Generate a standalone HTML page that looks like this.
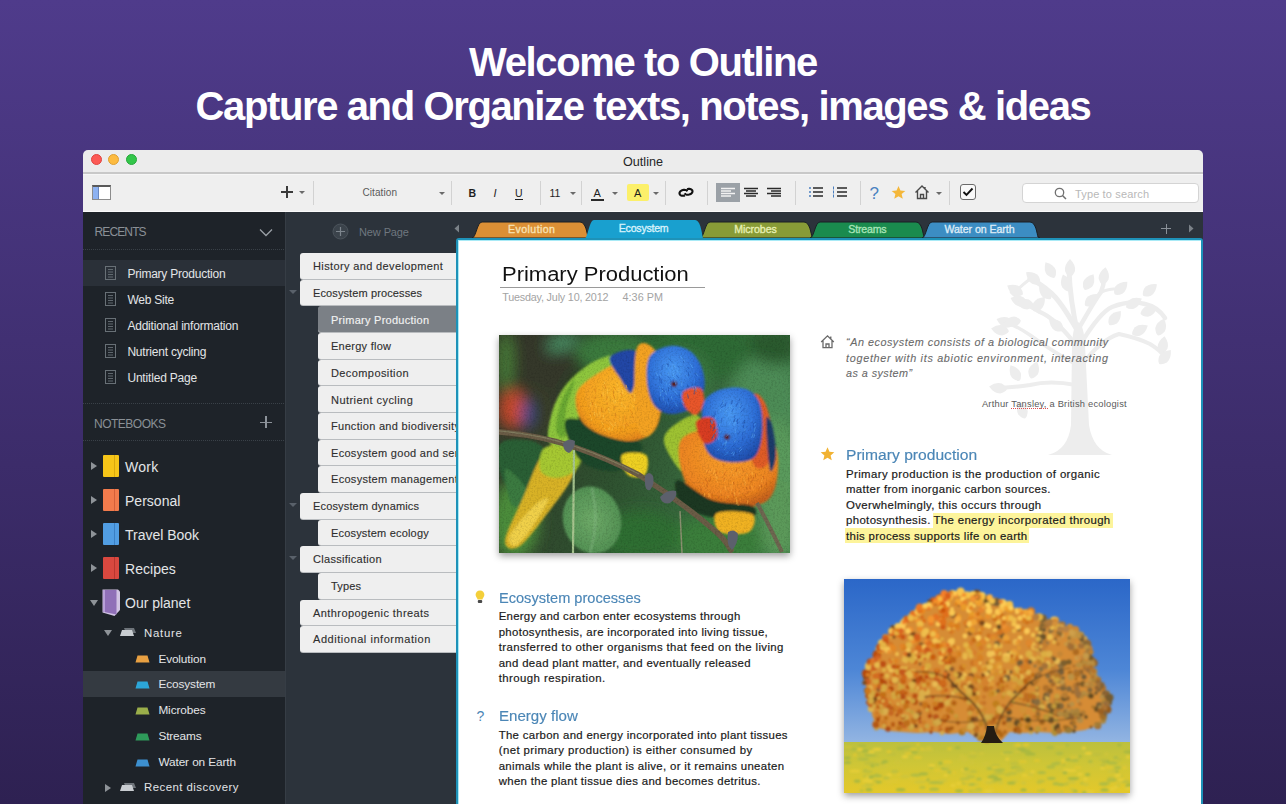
<!DOCTYPE html>
<html><head><meta charset="utf-8">
<style>
*{margin:0;padding:0;box-sizing:border-box}
html,body{width:1286px;height:804px;overflow:hidden}
body{background:linear-gradient(180deg,#4f3b8b 0%,#2e2152 100%);font-family:"Liberation Sans",sans-serif;position:relative}
.a{position:absolute;white-space:nowrap}
.h1{color:#fff;font-weight:bold;font-size:40px;left:0;width:1286px;text-align:center;letter-spacing:-1.38px;line-height:44px}
.tl{position:absolute;width:11px;height:11px;border-radius:50%}
.sep{position:absolute;top:181px;width:1px;height:24px;background:#d2d2d2}
.dd{position:absolute;width:0;height:0;border-left:3px solid transparent;border-right:3px solid transparent;border-top:3px solid #6a6a6a}
.dots{height:1px;background:repeating-linear-gradient(90deg,#3a4148 0 1px,transparent 1px 2px)}
.tri{width:0;height:0;border-top:4px solid transparent;border-bottom:4px solid transparent;border-left:6px solid #8e9398}
.tridn{width:0;height:0;border-left:4px solid transparent;border-right:4px solid transparent;border-top:6px solid #8e9398}
.card{position:absolute;height:25.6px;background:#efefef;border-radius:3px 0 0 3px;box-shadow:0 1px 0 #b9bcbf}
</style></head><body>

<div class="a h1" style="top:40px">Welcome to Outline</div>
<div class="a h1" style="top:84px">Capture and Organize texts, notes, images &amp; ideas</div>
<div class="a" style="left:83px;top:150px;width:1120px;height:62px;border-radius:5px 5px 0 0;overflow:hidden">
  <div class="a" style="left:0;top:0;width:1120px;height:23px;background:#ececec"></div>
  <div class="a" style="left:0;top:22px;width:1120px;height:1.6px;background:#c8c8c8"></div>
  <div class="a" style="left:0;top:23.6px;width:1120px;height:38.4px;background:#efefef"></div>
  <div class="a" style="left:0;top:23.6px;width:1120px;height:1px;background:#f6f6f6"></div>
  <div class="a" style="left:0;top:61px;width:1120px;height:1px;background:#fafafa"></div>
</div>
<div class="tl" style="left:90.5px;top:154px;background:#fc5a55;border:0.5px solid #e0443f"></div>
<div class="tl" style="left:108px;top:154px;background:#fdbb3f;border:0.5px solid #dea033"></div>
<div class="tl" style="left:126px;top:154px;background:#33c64a;border:0.5px solid #25a83a"></div>
<div id="t0" class="a" style="left:243px;width:800px;text-align:center;top:154.60px;font-size:12.6px;line-height:14px;color:#262626;">Outline</div>

<!-- toolbar -->
<div class="a" style="left:92px;top:185px;width:19px;height:15px;border:1px solid #8c8c8c;border-top:2px solid #5a5a5a;background:#fff"></div>
<div class="a" style="left:93px;top:187px;width:6px;height:12px;background:#8db2f2;border-right:1px solid #6a88c0"></div>
<div class="a" style="left:281px;top:191px;width:12px;height:2px;background:#3a3a3a"></div>
<div class="a" style="left:286px;top:186px;width:2px;height:12px;background:#3a3a3a"></div>
<div class="dd" style="left:299px;top:191px"></div>
<div class="sep" style="left:313px"></div>
<div id="t1" class="a" style="left:362.5px;top:187.10px;font-size:10px;line-height:11px;letter-spacing:0.084px;color:#5a5a5a;">Citation</div>
<div class="dd" style="left:439px;top:192px"></div>
<div class="sep" style="left:451px"></div>
<div id="t2" class="a" style="left:468.5px;top:186.50px;font-size:10.5px;line-height:12px;color:#1e1e1e;font-weight:bold;">B</div>
<div id="t3" class="a" style="left:493.5px;top:186.50px;font-size:11px;line-height:12px;color:#1e1e1e;font-style:italic;">I</div>
<div id="t4" class="a" style="left:515px;top:186.50px;font-size:10.5px;line-height:12px;color:#1e1e1e;">U</div>
<div class="a" style="left:514.5px;top:199px;width:8px;height:1px;background:#1e1e1e"></div>
<div class="sep" style="left:540px"></div>
<div id="t5" class="a" style="left:549.5px;top:186.50px;font-size:10.5px;line-height:12px;color:#1e1e1e;">11</div>
<div class="dd" style="left:570px;top:192px"></div>
<div class="sep" style="left:581px"></div>
<div id="t6" class="a" style="left:593.5px;top:186.50px;font-size:11px;line-height:12px;color:#1e1e1e;">A</div>
<div class="a" style="left:591px;top:199px;width:13px;height:2px;background:#2a2a2a"></div>
<div class="dd" style="left:612px;top:192px"></div>
<div class="a" style="left:627px;top:184px;width:22px;height:17px;background:#fcf06a;border-radius:2px"></div>
<div id="t7" class="a" style="left:634px;top:186.50px;font-size:11px;line-height:12px;color:#1e1e1e;">A</div>
<div class="dd" style="left:653px;top:192px"></div>
<div class="sep" style="left:665px"></div>
<svg class="a" style="left:0;top:0" width="1286" height="804"><g fill="none" stroke="#111" stroke-width="2.1" transform="rotate(-12 686 192.3)"><path d="M687.66 191.55 L687.37 191.03 L686.95 190.55 L686.40 190.14 L685.75 189.81 L685.02 189.57 L684.24 189.43 L683.43 189.40 L682.63 189.48 L681.87 189.66 L681.17 189.94 L680.56 190.30 L680.06 190.74 L679.69 191.24 L679.47 191.78 L679.40 192.33 L679.49 192.89 L679.73 193.42 L680.11 193.91 L680.62 194.34 L681.24 194.70 L681.95 194.97 L682.72 195.14 L683.52 195.20 L684.33 195.16"/><path d="M684.34 193.05 L684.63 193.57 L685.05 194.05 L685.60 194.46 L686.25 194.79 L686.98 195.03 L687.76 195.17 L688.57 195.20 L689.37 195.12 L690.13 194.94 L690.83 194.66 L691.44 194.30 L691.94 193.86 L692.31 193.36 L692.53 192.82 L692.60 192.27 L692.51 191.71 L692.27 191.18 L691.89 190.69 L691.38 190.26 L690.76 189.90 L690.05 189.63 L689.28 189.46 L688.48 189.40 L687.67 189.44"/></g></svg>
<div class="sep" style="left:707px"></div>
<div class="a" style="left:716px;top:183px;width:24px;height:19px;background:#9ba1a7"></div>
<svg class="a" style="left:720px;top:187px" width="16" height="11" viewBox="0 0 16 11"><path d="M1 1.5h14M1 4h10M1 6.5h14M1 9h10" stroke="#f2f2f2" stroke-width="1.3"/></svg>
<svg class="a" style="left:743px;top:187px" width="16" height="11" viewBox="0 0 16 11"><path d="M1 1.5h14M3 4h10M1 6.5h14M3 9h10" stroke="#2a2a2a" stroke-width="1.3"/></svg>
<svg class="a" style="left:766px;top:187px" width="16" height="11" viewBox="0 0 16 11"><path d="M1 1.5h14M5 4h10M1 6.5h14M5 9h10" stroke="#2a2a2a" stroke-width="1.3"/></svg>
<div class="sep" style="left:795px"></div>
<svg class="a" style="left:808px;top:186px" width="16" height="12" viewBox="0 0 16 12"><path d="M5 2h10M5 6h10M5 10h10" stroke="#2a2a2a" stroke-width="1.4"/><path d="M1 2h2M1 6h2M1 10h2" stroke="#4a7fc0" stroke-width="1.6"/></svg>
<svg class="a" style="left:832px;top:186px" width="16" height="12" viewBox="0 0 16 12"><path d="M5 2h10M5 6h10M5 10h10" stroke="#2a2a2a" stroke-width="1.4"/><path d="M1.5 0.5v3M1.5 4.5v3M1.5 8.5v3" stroke="#4a7fc0" stroke-width="1"/></svg>
<div class="sep" style="left:860px"></div>
<div id="t8" class="a" style="left:869.5px;top:184.00px;font-size:17px;line-height:19px;color:#4a82c0;">?</div>
<svg class="a" style="left:891px;top:185px" width="15" height="15" viewBox="0 0 24 24"><path d="M12 1.5l3.1 7.2 7.8.7-5.9 5.1 1.8 7.6L12 18.1l-6.8 4 1.8-7.6L1.1 9.4l7.8-.7z" fill="#f4b73a"/></svg>
<svg class="a" style="left:914px;top:184px" width="16" height="16" viewBox="0 0 16 16"><path d="M1.5 8.5L8 2l6.5 6.5M3.5 7v7.5h9V7M6.5 14.5v-4h3v4M11 3v2.5" fill="none" stroke="#4a4a4a" stroke-width="1.4"/></svg>
<div class="dd" style="left:936px;top:192px"></div>
<div class="sep" style="left:949px"></div>
<div class="a" style="left:960px;top:184px;width:16px;height:16px;border:1px solid #6a6a6a;border-radius:3px;background:#f9f9f9"></div>
<svg class="a" style="left:962px;top:187px" width="12" height="10" viewBox="0 0 12 10"><path d="M1.5 5l3 3 6-6.5" fill="none" stroke="#111" stroke-width="1.9"/></svg>
<div class="a" style="left:1022px;top:182.5px;width:177px;height:20px;border:1px solid #d4d4d4;border-radius:4px;background:#fff"></div>
<svg class="a" style="left:1054px;top:187px" width="13" height="13" viewBox="0 0 13 13"><circle cx="5.5" cy="5.5" r="4.2" fill="none" stroke="#707070" stroke-width="1.3"/><path d="M8.5 8.5l3.5 3.5" stroke="#707070" stroke-width="1.5"/></svg>
<div id="t9" class="a" style="left:1075px;top:187.80px;font-size:11px;line-height:12px;letter-spacing:0.142px;color:#b8b8b8;">Type to search</div>

<!-- dark areas -->
<div class="a" style="left:83px;top:212px;width:202px;height:592px;background:#1e2329"></div>
<div class="a" style="left:285px;top:212px;width:918px;height:592px;background:#2c333b"></div>
<div class="a" style="left:285px;top:212px;width:1px;height:592px;background:#363d45"></div>

<!-- sidebar -->
<div id="t10" class="a" style="left:94.5px;top:225.00px;font-size:12px;line-height:14px;letter-spacing:-0.875px;color:#8a9096;">RECENTS</div>
<svg class="a" style="left:259px;top:227.5px" width="14" height="9" viewBox="0 0 14 9"><path d="M1 1.5 L7 7.5 L13 1.5" fill="none" stroke="#9aa0a6" stroke-width="1.3"/></svg>
<div class="a dots" style="left:83px;top:249px;width:202px"></div>
<div class="a" style="left:83px;top:260px;width:202px;height:26px;background:#2a3038"></div>
<div id="t11" class="a" style="left:127.4px;top:266.60px;font-size:12px;line-height:14px;letter-spacing:-0.226px;color:#e3e5e7;">Primary Production</div>
<div id="t12" class="a" style="left:127.4px;top:292.60px;font-size:12px;line-height:14px;letter-spacing:-0.241px;color:#e3e5e7;">Web Site</div>
<div id="t13" class="a" style="left:127.4px;top:318.60px;font-size:12px;line-height:14px;letter-spacing:-0.209px;color:#e3e5e7;">Additional information</div>
<div id="t14" class="a" style="left:127.4px;top:344.60px;font-size:12px;line-height:14px;letter-spacing:-0.203px;color:#e3e5e7;">Nutrient cycling</div>
<div id="t15" class="a" style="left:127.4px;top:370.60px;font-size:12px;line-height:14px;letter-spacing:-0.180px;color:#e3e5e7;">Untitled Page</div>
<svg class="a" style="left:105px;top:266px" width="11" height="14" viewBox="0 0 11 14"><rect x="0.5" y="0.5" width="10" height="13" fill="none" stroke="#687076"/><path d="M3 3.5h5M3 6h5M3 8.5h5M3 11h5" stroke="#687076" stroke-width="0.9"/></svg>
<svg class="a" style="left:105px;top:292px" width="11" height="14" viewBox="0 0 11 14"><rect x="0.5" y="0.5" width="10" height="13" fill="none" stroke="#687076"/><path d="M3 3.5h5M3 6h5M3 8.5h5M3 11h5" stroke="#687076" stroke-width="0.9"/></svg>
<svg class="a" style="left:105px;top:318px" width="11" height="14" viewBox="0 0 11 14"><rect x="0.5" y="0.5" width="10" height="13" fill="none" stroke="#687076"/><path d="M3 3.5h5M3 6h5M3 8.5h5M3 11h5" stroke="#687076" stroke-width="0.9"/></svg>
<svg class="a" style="left:105px;top:344px" width="11" height="14" viewBox="0 0 11 14"><rect x="0.5" y="0.5" width="10" height="13" fill="none" stroke="#687076"/><path d="M3 3.5h5M3 6h5M3 8.5h5M3 11h5" stroke="#687076" stroke-width="0.9"/></svg>
<svg class="a" style="left:105px;top:370px" width="11" height="14" viewBox="0 0 11 14"><rect x="0.5" y="0.5" width="10" height="13" fill="none" stroke="#687076"/><path d="M3 3.5h5M3 6h5M3 8.5h5M3 11h5" stroke="#687076" stroke-width="0.9"/></svg>

<div class="a dots" style="left:83px;top:403px;width:202px"></div>
<div id="t16" class="a" style="left:94px;top:416.60px;font-size:12px;line-height:14px;letter-spacing:-0.502px;color:#8a9096;">NOTEBOOKS</div>
<div class="a" style="left:260px;top:421.5px;width:12px;height:1.2px;background:#8d939a"></div>
<div class="a" style="left:265.4px;top:416px;width:1.2px;height:12px;background:#8d939a"></div>
<div class="a dots" style="left:83px;top:439.5px;width:202px"></div>
<div class="a tri" style="left:91px;top:462px"></div>
<div class="a" style="left:103px;top:455px;width:16px;height:22px;background:#f6c518;border-radius:1px"></div><div class="a" style="left:114px;top:455px;width:1px;height:22px;background:#d9a80e"></div>
<div id="t17" class="a" style="left:125px;top:458.90px;font-size:14px;line-height:16px;letter-spacing:0.292px;color:#e3e5e7;">Work</div>
<div class="a tri" style="left:91px;top:496px"></div>
<div class="a" style="left:103px;top:489px;width:16px;height:22px;background:#f27b4c;border-radius:1px"></div><div class="a" style="left:114px;top:489px;width:1px;height:22px;background:#d4603a"></div>
<div id="t18" class="a" style="left:125px;top:492.90px;font-size:14px;line-height:16px;letter-spacing:0.019px;color:#e3e5e7;">Personal</div>
<div class="a tri" style="left:91px;top:530px"></div>
<div class="a" style="left:103px;top:523px;width:16px;height:22px;background:#519de2;border-radius:1px"></div><div class="a" style="left:114px;top:523px;width:1px;height:22px;background:#3a7fc4"></div>
<div id="t19" class="a" style="left:125px;top:526.90px;font-size:14px;line-height:16px;letter-spacing:-0.017px;color:#e3e5e7;">Travel Book</div>
<div class="a tri" style="left:91px;top:564px"></div>
<div class="a" style="left:103px;top:557px;width:16px;height:22px;background:#d9483f;border-radius:1px"></div><div class="a" style="left:114px;top:557px;width:1px;height:22px;background:#b8362f"></div>
<div id="t20" class="a" style="left:125px;top:560.90px;font-size:14px;line-height:16px;letter-spacing:0.035px;color:#e3e5e7;">Recipes</div>
<div class="a tridn" style="left:90px;top:600px"></div>
<svg class="a" style="left:0;top:0" width="200" height="804"><path d="M102.5 589.5 L118 589.5 L120 591.5 L120 610 L114.5 616 L102.5 612.5Z" fill="#d2c4e4"/><path d="M103 590 L116.5 590 L116.5 614.5 L103 611.8Z" fill="#9070b8"/><path d="M103 590 L105 590 L105 612 L103 611.8Z" fill="#b8a0d8"/></svg>
<div id="t21" class="a" style="left:125px;top:594.90px;font-size:14px;line-height:16px;letter-spacing:-0.009px;color:#e3e5e7;">Our planet</div>
<div class="a tridn" style="left:104px;top:630px"></div>
<svg class="a" style="left:120px;top:627px" width="16" height="10" viewBox="0 0 16 10"><path d="M4 1 L14 1 L16 6 L6 6Z" fill="#6e747a"/><path d="M2 3 L12 3 L14 9 L0 9Z" fill="#c9cdd1"/></svg>
<div id="t22" class="a" style="left:144.1px;top:627.00px;font-size:11.4px;line-height:12px;letter-spacing:0.701px;color:#e3e5e7;">Nature</div>
<div class="a" style="left:83px;top:671px;width:202px;height:26.4px;background:#343a41"></div>
<svg class="a" style="left:134.5px;top:655.4px" width="15" height="8" viewBox="0 0 15 8"><path d="M2.5 0.5 L12.5 0.5 L14.5 7.5 L0.5 7.5Z" fill="#e8a042"/></svg>
<div id="t23" class="a" style="left:158.4px;top:651.90px;font-size:11.8px;line-height:14px;letter-spacing:-0.118px;color:#e3e5e7;">Evolution</div>
<svg class="a" style="left:134.5px;top:680.9px" width="15" height="8" viewBox="0 0 15 8"><path d="M2.5 0.5 L12.5 0.5 L14.5 7.5 L0.5 7.5Z" fill="#2ca6d8"/></svg>
<div id="t24" class="a" style="left:158.4px;top:677.40px;font-size:11.8px;line-height:14px;letter-spacing:-0.087px;color:#e3e5e7;">Ecosystem</div>
<svg class="a" style="left:134.5px;top:706.9px" width="15" height="8" viewBox="0 0 15 8"><path d="M2.5 0.5 L12.5 0.5 L14.5 7.5 L0.5 7.5Z" fill="#9aae4a"/></svg>
<div id="t25" class="a" style="left:158.4px;top:703.40px;font-size:11.8px;line-height:14px;letter-spacing:-0.095px;color:#e3e5e7;">Microbes</div>
<svg class="a" style="left:134.5px;top:732.6px" width="15" height="8" viewBox="0 0 15 8"><path d="M2.5 0.5 L12.5 0.5 L14.5 7.5 L0.5 7.5Z" fill="#2e9a5a"/></svg>
<div id="t26" class="a" style="left:158.4px;top:729.10px;font-size:11.8px;line-height:14px;letter-spacing:-0.123px;color:#e3e5e7;">Streams</div>
<svg class="a" style="left:134.5px;top:758.5px" width="15" height="8" viewBox="0 0 15 8"><path d="M2.5 0.5 L12.5 0.5 L14.5 7.5 L0.5 7.5Z" fill="#3d90cf"/></svg>
<div id="t27" class="a" style="left:158.4px;top:755.00px;font-size:11.8px;line-height:14px;letter-spacing:-0.093px;color:#e3e5e7;">Water on Earth</div>
<div class="a tri" style="left:105px;top:783.5px"></div>
<svg class="a" style="left:120px;top:782px" width="16" height="10" viewBox="0 0 16 10"><path d="M4 1 L14 1 L16 6 L6 6Z" fill="#6e747a"/><path d="M2 3 L12 3 L14 9 L0 9Z" fill="#c9cdd1"/></svg>
<div id="t28" class="a" style="left:144.1px;top:781.10px;font-size:11.4px;line-height:12px;letter-spacing:0.461px;color:#e3e5e7;">Recent discovery</div>


<!-- middle panel -->
<svg class="a" style="left:332px;top:223px" width="17" height="17" viewBox="0 0 17 17"><circle cx="8.5" cy="8.5" r="7.5" fill="#3b434b" stroke="#4c545c" stroke-width="1"/><path d="M8.5 4v9M4 8.5h9" stroke="#7d858d" stroke-width="1.2"/></svg>
<div id="t29" class="a" style="left:359px;top:226.00px;font-size:11px;line-height:12px;letter-spacing:-0.109px;color:#6f777f;">New Page</div>
<div class="card" style="left:300px;top:253.10px;width:160px;background:#efefef"></div>
<div id="t30" class="a" style="left:313px;top:260.20px;font-size:11px;line-height:12px;letter-spacing:0.369px;color:#2e2e2e;-webkit-text-stroke:0.12px #2e2e2e;">History and development</div>
<div class="card" style="left:300px;top:279.76px;width:160px;background:#efefef"></div>
<div class="a" style="left:289px;top:289.76px;width:0;height:0;border-left:4px solid transparent;border-right:4px solid transparent;border-top:4px solid #59616a"></div>
<div id="t31" class="a" style="left:313px;top:286.86px;font-size:11px;line-height:12px;letter-spacing:0.111px;color:#2e2e2e;-webkit-text-stroke:0.12px #2e2e2e;">Ecosystem processes</div>
<div class="card" style="left:318.3px;top:306.42px;width:141.7px;background:#7b8086"></div>
<div id="t32" class="a" style="left:331px;top:313.52px;font-size:11px;line-height:12px;letter-spacing:0.263px;color:#f2f2f2;-webkit-text-stroke:0.15px #f2f2f2;">Primary Production</div>
<div class="card" style="left:318.3px;top:333.08px;width:141.7px;background:#efefef"></div>
<div id="t33" class="a" style="left:331px;top:340.18px;font-size:11px;line-height:12px;letter-spacing:0.252px;color:#2e2e2e;-webkit-text-stroke:0.12px #2e2e2e;">Energy flow</div>
<div class="card" style="left:318.3px;top:359.74px;width:141.7px;background:#efefef"></div>
<div id="t34" class="a" style="left:331px;top:366.84px;font-size:11px;line-height:12px;letter-spacing:0.403px;color:#2e2e2e;-webkit-text-stroke:0.12px #2e2e2e;">Decomposition</div>
<div class="card" style="left:318.3px;top:386.40px;width:141.7px;background:#efefef"></div>
<div id="t35" class="a" style="left:331px;top:393.50px;font-size:11px;line-height:12px;letter-spacing:0.439px;color:#2e2e2e;-webkit-text-stroke:0.12px #2e2e2e;">Nutrient cycling</div>
<div class="card" style="left:318.3px;top:413.06px;width:141.7px;background:#efefef"></div>
<div id="t36" class="a" style="left:331px;top:420.16px;font-size:11px;line-height:12px;letter-spacing:0.300px;color:#2e2e2e;-webkit-text-stroke:0.12px #2e2e2e;">Function and biodiversity</div>
<div class="card" style="left:318.3px;top:439.72px;width:141.7px;background:#efefef"></div>
<div id="t37" class="a" style="left:331px;top:446.82px;font-size:11px;line-height:12px;letter-spacing:0.300px;color:#2e2e2e;-webkit-text-stroke:0.12px #2e2e2e;">Ecosystem good and services</div>
<div class="card" style="left:318.3px;top:466.38px;width:141.7px;background:#efefef"></div>
<div id="t38" class="a" style="left:331px;top:473.48px;font-size:11px;line-height:12px;letter-spacing:0.300px;color:#2e2e2e;-webkit-text-stroke:0.12px #2e2e2e;">Ecosystem management</div>
<div class="card" style="left:300px;top:493.04px;width:160px;background:#efefef"></div>
<div class="a" style="left:289px;top:503.04px;width:0;height:0;border-left:4px solid transparent;border-right:4px solid transparent;border-top:4px solid #59616a"></div>
<div id="t39" class="a" style="left:313px;top:500.14px;font-size:11px;line-height:12px;letter-spacing:0.158px;color:#2e2e2e;-webkit-text-stroke:0.12px #2e2e2e;">Ecosystem dynamics</div>
<div class="card" style="left:318.3px;top:519.70px;width:141.7px;background:#efefef"></div>
<div id="t40" class="a" style="left:331px;top:526.80px;font-size:11px;line-height:12px;letter-spacing:0.184px;color:#2e2e2e;-webkit-text-stroke:0.12px #2e2e2e;">Ecosystem ecology</div>
<div class="card" style="left:300px;top:546.36px;width:160px;background:#efefef"></div>
<div class="a" style="left:289px;top:556.36px;width:0;height:0;border-left:4px solid transparent;border-right:4px solid transparent;border-top:4px solid #59616a"></div>
<div id="t41" class="a" style="left:313px;top:553.46px;font-size:11px;line-height:12px;letter-spacing:0.291px;color:#2e2e2e;-webkit-text-stroke:0.12px #2e2e2e;">Classification</div>
<div class="card" style="left:318.3px;top:573.02px;width:141.7px;background:#efefef"></div>
<div id="t42" class="a" style="left:331px;top:580.12px;font-size:11px;line-height:12px;letter-spacing:0.161px;color:#2e2e2e;-webkit-text-stroke:0.12px #2e2e2e;">Types</div>
<div class="card" style="left:300px;top:599.68px;width:160px;background:#efefef"></div>
<div id="t43" class="a" style="left:313px;top:606.78px;font-size:11px;line-height:12px;letter-spacing:0.419px;color:#2e2e2e;-webkit-text-stroke:0.12px #2e2e2e;">Anthropogenic threats</div>
<div class="card" style="left:300px;top:626.34px;width:160px;background:#efefef"></div>
<div id="t44" class="a" style="left:313px;top:633.44px;font-size:11px;line-height:12px;letter-spacing:0.548px;color:#2e2e2e;-webkit-text-stroke:0.12px #2e2e2e;">Additional information</div>
<svg class="a" style="left:0;top:0" width="1286" height="804" viewBox="0 0 1286 804"><path d="M472 238 C476 238 477 222 482 222 L580 222 C586 222 587 234 588 237 L590 238 Z" fill="#db8f35" stroke="#1a1f24" stroke-width="1"/><path d="M700 238 C704 238 705 222 710 222 L804 222 C810 222 811 234 812 237 L814 238 Z" fill="#889b37" stroke="#1a1f24" stroke-width="1"/><path d="M810 238 C814 238 815 222 820 222 L916 222 C922 222 923 234 924 237 L926 238 Z" fill="#1a8b4e" stroke="#1a1f24" stroke-width="1"/><path d="M922 238 C926 238 927 222 932 222 L1030 222 C1036 222 1037 234 1038 237 L1040 238 Z" fill="#3c8dc3" stroke="#1a1f24" stroke-width="1"/><path d="M584 239 C588 239 589 220 594 220 L695 220 C701 220 702 235 703 238 L705 239 Z" fill="#19a0cf"/></svg>
<div id="t45" class="a" style="left:508.0px;top:222.50px;font-size:10.6px;line-height:12px;letter-spacing:0.426px;color:#f7e2b3;-webkit-text-stroke:0.35px #f7e2b3;">Evolution</div>
<div id="t46" class="a" style="left:734.2px;top:222.50px;font-size:10.6px;line-height:12px;letter-spacing:-0.055px;color:#e6efb2;-webkit-text-stroke:0.35px #e6efb2;">Microbes</div>
<div id="t47" class="a" style="left:848.35px;top:222.50px;font-size:10.6px;line-height:12px;letter-spacing:-0.192px;color:#a6e4b6;-webkit-text-stroke:0.35px #a6e4b6;">Streams</div>
<div id="t48" class="a" style="left:944.45px;top:222.50px;font-size:10.6px;line-height:12px;letter-spacing:-0.059px;color:#dcebf6;-webkit-text-stroke:0.35px #dcebf6;">Water on Earth</div>
<div id="t49" class="a" style="left:618.8px;top:221.80px;font-size:10.6px;line-height:12px;letter-spacing:-0.238px;color:#d6f2fc;-webkit-text-stroke:0.35px #d6f2fc;">Ecosystem</div>
<svg class="a" style="left:454px;top:224px" width="6" height="9" viewBox="0 0 6 9"><path d="M5 0.5L0.5 4.5L5 8.5Z" fill="#7b8288"/></svg>
<svg class="a" style="left:1188px;top:224px" width="6" height="9" viewBox="0 0 6 9"><path d="M1 0.5L5.5 4.5L1 8.5Z" fill="#7b8288"/></svg>
<div class="a" style="left:1161px;top:228px;width:10px;height:1px;background:#8a9198"></div><div class="a" style="left:1165.5px;top:223.5px;width:1px;height:10px;background:#8a9198"></div>
<div class="a" style="left:456px;top:237.5px;width:747px;height:570px;background:#fff;border:2px solid #1e92b8;border-radius:3px 3px 0 0"></div>
<div class="a" style="left:458px;top:239.5px;width:743px;height:1px;background:#a8eaf6"></div>
<div class="a" style="left:458px;top:239.5px;width:1px;height:570px;background:#a8eaf6"></div>
<div id="t50" class="a" style="left:502.2px;top:263.40px;font-size:20px;line-height:22px;transform:scaleX(1.0984);transform-origin:0 0;color:#111;">Primary Production</div><div class="a" style="left:500px;top:286.5px;width:205px;height:1.3px;background:#9a9a9a"></div>
<div id="t51" class="a" style="left:502.2px;top:291.20px;font-size:10.8px;line-height:12px;letter-spacing:-0.197px;color:#a3a3a3;">Tuesday, July 10, 2012</div><div id="t52" class="a" style="left:622.4px;top:291.20px;font-size:10.8px;line-height:12px;letter-spacing:0.080px;color:#a3a3a3;">4:36 PM</div><svg class="a" style="left:985px;top:255px" width="190" height="205" viewBox="985 255 190 205"><g fill="none" stroke="#ededed" stroke-linecap="round"><path d="M1078 335 Q1070 300 1069 270" stroke-width="5"/><path d="M1077 330 Q1060 300 1050 292 Q1040 283 1030 279" stroke-width="5"/><path d="M1076 345 Q1055 318 1040 312 Q1025 304 1012 292" stroke-width="4.5"/><path d="M1079 328 Q1095 300 1101 292 Q1104 285 1104 278" stroke-width="4.5"/><path d="M1080 345 Q1100 312 1112 307 Q1130 300 1145 304 Q1158 307 1165 318" stroke-width="4.5"/><path d="M1082 365 Q1100 340 1119 334 Q1138 338 1150 344 Q1160 350 1165 357" stroke-width="4"/><path d="M1076 385 Q1050 380 1030 385 Q1010 388 995 388" stroke-width="4"/><path d="M1077 365 Q1050 350 1030 335 Q1015 325 1005 322" stroke-width="3.5"/><path d="M1101 292 Q1112 288 1121 289" stroke-width="3"/><path d="M1030 279 Q1022 285 1015 292" stroke-width="3"/></g><g fill="#ededed"><path d="M1048 455 Q1068 450 1071 425 L1072 345 Q1073 325 1078 322 Q1084 325 1085 345 L1089 425 Q1093 450 1112 455Z"/><path d="M0 -9 Q6 -3 5 3 Q3 8 0 9 Q-3 8 -5 3 Q-6 -3 0 -9Z" transform="translate(1070 268) rotate(0)"/><path d="M0 -9 Q6 -3 5 3 Q3 8 0 9 Q-3 8 -5 3 Q-6 -3 0 -9Z" transform="translate(1066 283) rotate(-20)"/><path d="M0 -9 Q6 -3 5 3 Q3 8 0 9 Q-3 8 -5 3 Q-6 -3 0 -9Z" transform="translate(1050 270) rotate(-30)"/><path d="M0 -9 Q6 -3 5 3 Q3 8 0 9 Q-3 8 -5 3 Q-6 -3 0 -9Z" transform="translate(1033 278) rotate(-50)"/><path d="M0 -9 Q6 -3 5 3 Q3 8 0 9 Q-3 8 -5 3 Q-6 -3 0 -9Z" transform="translate(1015 290) rotate(-60)"/><path d="M0 -9 Q6 -3 5 3 Q3 8 0 9 Q-3 8 -5 3 Q-6 -3 0 -9Z" transform="translate(1019 301) rotate(-70)"/><path d="M0 -9 Q6 -3 5 3 Q3 8 0 9 Q-3 8 -5 3 Q-6 -3 0 -9Z" transform="translate(1025 304) rotate(-80)"/><path d="M0 -9 Q6 -3 5 3 Q3 8 0 9 Q-3 8 -5 3 Q-6 -3 0 -9Z" transform="translate(1039 304) rotate(40)"/><path d="M0 -9 Q6 -3 5 3 Q3 8 0 9 Q-3 8 -5 3 Q-6 -3 0 -9Z" transform="translate(1089 282) rotate(30)"/><path d="M0 -9 Q6 -3 5 3 Q3 8 0 9 Q-3 8 -5 3 Q-6 -3 0 -9Z" transform="translate(1104 276) rotate(10)"/><path d="M0 -9 Q6 -3 5 3 Q3 8 0 9 Q-3 8 -5 3 Q-6 -3 0 -9Z" transform="translate(1121 288) rotate(45)"/><path d="M0 -9 Q6 -3 5 3 Q3 8 0 9 Q-3 8 -5 3 Q-6 -3 0 -9Z" transform="translate(1134 303) rotate(60)"/><path d="M0 -9 Q6 -3 5 3 Q3 8 0 9 Q-3 8 -5 3 Q-6 -3 0 -9Z" transform="translate(1149 311) rotate(70)"/><path d="M0 -9 Q6 -3 5 3 Q3 8 0 9 Q-3 8 -5 3 Q-6 -3 0 -9Z" transform="translate(1161 327) rotate(20)"/><path d="M0 -9 Q6 -3 5 3 Q3 8 0 9 Q-3 8 -5 3 Q-6 -3 0 -9Z" transform="translate(1163 345) rotate(10)"/><path d="M0 -9 Q6 -3 5 3 Q3 8 0 9 Q-3 8 -5 3 Q-6 -3 0 -9Z" transform="translate(1165 357) rotate(40)"/><path d="M0 -9 Q6 -3 5 3 Q3 8 0 9 Q-3 8 -5 3 Q-6 -3 0 -9Z" transform="translate(1005 322) rotate(-70)"/><path d="M0 -9 Q6 -3 5 3 Q3 8 0 9 Q-3 8 -5 3 Q-6 -3 0 -9Z" transform="translate(1012 322) rotate(-100)"/><path d="M0 -9 Q6 -3 5 3 Q3 8 0 9 Q-3 8 -5 3 Q-6 -3 0 -9Z" transform="translate(998 388) rotate(-80)"/><path d="M0 -9 Q6 -3 5 3 Q3 8 0 9 Q-3 8 -5 3 Q-6 -3 0 -9Z" transform="translate(1015 373) rotate(-30)"/><path d="M0 -9 Q6 -3 5 3 Q3 8 0 9 Q-3 8 -5 3 Q-6 -3 0 -9Z" transform="translate(1034 370) rotate(20)"/><path d="M0 -9 Q6 -3 5 3 Q3 8 0 9 Q-3 8 -5 3 Q-6 -3 0 -9Z" transform="translate(1022 410) rotate(-20)"/><path d="M0 -9 Q6 -3 5 3 Q3 8 0 9 Q-3 8 -5 3 Q-6 -3 0 -9Z" transform="translate(1045 292) rotate(-40)"/><path d="M0 -9 Q6 -3 5 3 Q3 8 0 9 Q-3 8 -5 3 Q-6 -3 0 -9Z" transform="translate(1092 300) rotate(50)"/><path d="M0 -9 Q6 -3 5 3 Q3 8 0 9 Q-3 8 -5 3 Q-6 -3 0 -9Z" transform="translate(1140 330) rotate(60)"/><path d="M0 -9 Q6 -3 5 3 Q3 8 0 9 Q-3 8 -5 3 Q-6 -3 0 -9Z" transform="translate(1115 318) rotate(40)"/><path d="M0 -9 Q6 -3 5 3 Q3 8 0 9 Q-3 8 -5 3 Q-6 -3 0 -9Z" transform="translate(1056 325) rotate(-50)"/><path d="M0 -9 Q6 -3 5 3 Q3 8 0 9 Q-3 8 -5 3 Q-6 -3 0 -9Z" transform="translate(1000 330) rotate(-80)"/><path d="M0 -9 Q6 -3 5 3 Q3 8 0 9 Q-3 8 -5 3 Q-6 -3 0 -9Z" transform="translate(1150 290) rotate(50)"/></g></svg><svg class="a" style="left:820px;top:334px" width="15" height="15" viewBox="0 0 15 15"><path d="M1.2 8L7.5 1.8 13.8 8M3 6.5v7.2h9V6.5M6 13.7V10h3v3.7M10.8 2.5v2.6" fill="none" stroke="#6a6a6a" stroke-width="1.3"/></svg>
<div id="t53" class="a" style="left:846.1px;top:336.00px;font-size:10.8px;line-height:12px;letter-spacing:0.519px;color:#6a6a6a;font-style:italic;-webkit-text-stroke:0.1px #6a6a6a;">“An ecosystem consists of a biological community</div><div id="t54" class="a" style="left:846.1px;top:351.60px;font-size:10.8px;line-height:12px;letter-spacing:0.692px;color:#6a6a6a;font-style:italic;-webkit-text-stroke:0.1px #6a6a6a;">together with its abiotic environment, interacting</div><div id="t55" class="a" style="left:846.1px;top:367.10px;font-size:10.8px;line-height:12px;letter-spacing:0.436px;color:#6a6a6a;font-style:italic;-webkit-text-stroke:0.1px #6a6a6a;">as a system”</div><div id="t56" class="a" style="left:981.9px;top:398.50px;font-size:9.3px;line-height:10px;letter-spacing:0.239px;color:#5a5a5a;">Arthur Tansley, a British ecologist</div><div class="a" style="left:1011px;top:408px;width:38px;height:1px;background:repeating-linear-gradient(90deg,#e05050 0 1px,transparent 1px 2px)"></div>
<svg class="a" style="left:820px;top:447px" width="15" height="14" viewBox="0 0 24 23"><path d="M12 0.5l3.2 7.4 8 .7-6.1 5.3 1.9 7.9L12 17.6l-7 4.2 1.9-7.9L.8 8.6l8-.7z" fill="#f1b232"/></svg>
<div id="t57" class="a" style="left:846.1px;top:447.00px;font-size:14px;line-height:16px;transform:scaleX(1.1157);transform-origin:0 0;color:#4b86b6;-webkit-text-stroke:0.15px #4b86b6;">Primary production</div><div class="a" style="left:932.5px;top:513px;width:180.5px;height:14.5px;background:#fdf49b"></div>
<div class="a" style="left:845px;top:527.5px;width:184px;height:15px;background:#fdf49b"></div>
<div id="t58" class="a" style="left:846px;top:467.60px;font-size:11.4px;line-height:12px;letter-spacing:0.393px;color:#1a1a1a;-webkit-text-stroke:0.2px #1a1a1a;">Primary production is the production of organic</div><div id="t59" class="a" style="left:846px;top:483.10px;font-size:11.4px;line-height:12px;letter-spacing:0.352px;color:#1a1a1a;-webkit-text-stroke:0.2px #1a1a1a;">matter from inorganic carbon sources.</div><div id="t60" class="a" style="left:846px;top:498.60px;font-size:11.4px;line-height:12px;letter-spacing:0.366px;color:#1a1a1a;-webkit-text-stroke:0.2px #1a1a1a;">Overwhelmingly, this occurs through</div><div id="t61" class="a" style="left:846px;top:514.10px;font-size:11.4px;line-height:12px;letter-spacing:0.368px;color:#1a1a1a;-webkit-text-stroke:0.2px #1a1a1a;">photosynthesis.</div><div id="t62" class="a" style="left:933.5px;top:514.10px;font-size:11.4px;line-height:12px;letter-spacing:0.359px;color:#1a1a1a;-webkit-text-stroke:0.2px #1a1a1a;">The energy incorporated through</div><div id="t63" class="a" style="left:846px;top:529.60px;font-size:11.4px;line-height:12px;letter-spacing:0.320px;color:#1a1a1a;-webkit-text-stroke:0.2px #1a1a1a;">this process supports life on earth</div><svg class="a" style="left:475px;top:590px" width="10" height="14" viewBox="0 0 10 14"><path d="M5 0.5C2.3 0.5 0.6 2.5 0.6 4.8c0 2 1.6 3.2 2 4.6h4.8c.4-1.4 2-2.6 2-4.6C9.4 2.5 7.7 0.5 5 0.5z" fill="#f4cf3a"/><rect x="2.8" y="10" width="4.4" height="3" rx="1" fill="#4a4a4a"/></svg>
<div id="t64" class="a" style="left:498.7px;top:590.00px;font-size:14px;line-height:16px;transform:scaleX(1.0413);transform-origin:0 0;color:#4b86b6;-webkit-text-stroke:0.15px #4b86b6;">Ecosystem processes</div><div id="t65" class="a" style="left:498.7px;top:610.00px;font-size:11.4px;line-height:12px;letter-spacing:0.271px;color:#1a1a1a;-webkit-text-stroke:0.2px #1a1a1a;">Energy and carbon enter ecosystems through</div><div id="t66" class="a" style="left:498.7px;top:625.60px;font-size:11.4px;line-height:12px;letter-spacing:0.335px;color:#1a1a1a;-webkit-text-stroke:0.2px #1a1a1a;">photosynthesis, are incorporated into living tissue,</div><div id="t67" class="a" style="left:498.7px;top:641.20px;font-size:11.4px;line-height:12px;letter-spacing:0.390px;color:#1a1a1a;-webkit-text-stroke:0.2px #1a1a1a;">transferred to other organisms that feed on the living</div><div id="t68" class="a" style="left:498.7px;top:656.80px;font-size:11.4px;line-height:12px;letter-spacing:0.334px;color:#1a1a1a;-webkit-text-stroke:0.2px #1a1a1a;">and dead plant matter, and eventually released</div><div id="t69" class="a" style="left:498.7px;top:672.40px;font-size:11.4px;line-height:12px;letter-spacing:0.439px;color:#1a1a1a;-webkit-text-stroke:0.2px #1a1a1a;">through respiration.</div><div id="t70" class="a" style="left:476.5px;top:708.00px;font-size:14px;line-height:16px;color:#4b86b6;">?</div><div id="t71" class="a" style="left:498.7px;top:708.30px;font-size:14px;line-height:16px;transform:scaleX(1.0771);transform-origin:0 0;color:#4b86b6;-webkit-text-stroke:0.15px #4b86b6;">Energy flow</div><div id="t72" class="a" style="left:498.7px;top:729.00px;font-size:11.4px;line-height:12px;letter-spacing:0.319px;color:#1a1a1a;-webkit-text-stroke:0.2px #1a1a1a;">The carbon and energy incorporated into plant tissues</div><div id="t73" class="a" style="left:498.7px;top:744.37px;font-size:11.4px;line-height:12px;letter-spacing:0.412px;color:#1a1a1a;-webkit-text-stroke:0.2px #1a1a1a;">(net primary production) is either consumed by</div><div id="t74" class="a" style="left:498.7px;top:759.74px;font-size:11.4px;line-height:12px;letter-spacing:0.347px;color:#1a1a1a;-webkit-text-stroke:0.2px #1a1a1a;">animals while the plant is alive, or it remains uneaten</div><div id="t75" class="a" style="left:498.7px;top:775.11px;font-size:11.4px;line-height:12px;letter-spacing:0.328px;color:#1a1a1a;-webkit-text-stroke:0.2px #1a1a1a;">when the plant tissue dies and becomes detritus.</div><svg class="a" style="left:499px;top:335px;box-shadow:0 3px 7px rgba(0,0,0,.38)" width="291" height="218" viewBox="0 0 291 218">
<defs>
<filter id="bl" x="-10%" y="-10%" width="120%" height="120%"><feGaussianBlur stdDeviation="1.3"/></filter><filter id="bl05"><feGaussianBlur stdDeviation="0.4"/></filter>
<filter id="bl4" x="-20%" y="-20%" width="140%" height="140%"><feGaussianBlur stdDeviation="7"/></filter>
<linearGradient id="bgg" x1="0" y1="0" x2="1" y2="0.2"><stop offset="0" stop-color="#33392a"/><stop offset="0.5" stop-color="#2f5230"/><stop offset="1" stop-color="#3f7a48"/></linearGradient>
<radialGradient id="headg" cx="0.45" cy="0.35" r="0.7"><stop offset="0" stop-color="#4a9af4"/><stop offset="0.6" stop-color="#2e6fd8"/><stop offset="1" stop-color="#1d48a4"/></radialGradient>
<radialGradient id="orng" cx="0.5" cy="0.45" r="0.6"><stop offset="0" stop-color="#fbb62a"/><stop offset="0.75" stop-color="#f39e1e"/><stop offset="1" stop-color="#dc7c1a"/></radialGradient>
<radialGradient id="orng2" cx="0.5" cy="0.35" r="0.65"><stop offset="0" stop-color="#f9a02c"/><stop offset="0.75" stop-color="#ec8420"/><stop offset="1" stop-color="#c4601c"/></radialGradient>
<filter id="grain" x="0" y="0" width="100%" height="100%"><feTurbulence type="fractalNoise" baseFrequency="0.55" numOctaves="2" seed="4"/><feColorMatrix values="0 0 0 0 0  0 0 0 0 0  0 0 0 0 0  0 0 0 -1.1 0.62"/></filter>
<radialGradient id="leafg" cx="0.5" cy="0.5" r="0.6"><stop offset="0" stop-color="#6eaa68"/><stop offset="1" stop-color="#4e8c50"/></radialGradient>
</defs>
<rect width="291" height="218" fill="url(#bgg)"/>
<g filter="url(#bl4)"><ellipse cx="36.0" cy="30.0" rx="50" ry="45" fill="#34392a" opacity="1" transform="rotate(0 36.0 30.0)"/><ellipse cx="26.0" cy="80.0" rx="35" ry="30" fill="#383e2c" opacity="1" transform="rotate(0 26.0 80.0)"/><ellipse cx="101.0" cy="65.0" rx="40" ry="40" fill="#2c4228" opacity="1" transform="rotate(0 101.0 65.0)"/><ellipse cx="7.0" cy="27.0" rx="7" ry="30" fill="#4a7e38" opacity="1" transform="rotate(0 7.0 27.0)"/><ellipse cx="63.0" cy="8.0" rx="16" ry="8" fill="#4a8c62" opacity="1" transform="rotate(-20 63.0 8.0)"/><ellipse cx="116.0" cy="17.0" rx="40" ry="20" fill="#3a7a3c" opacity="1" transform="rotate(0 116.0 17.0)"/><ellipse cx="201.0" cy="15.0" rx="60" ry="30" fill="#2f6a36" opacity="1" transform="rotate(0 201.0 15.0)"/><ellipse cx="266.0" cy="65.0" rx="35" ry="45" fill="#4e8c56" opacity="1" transform="rotate(0 266.0 65.0)"/><ellipse cx="276.0" cy="135.0" rx="30" ry="50" fill="#5a9a5c" opacity="1" transform="rotate(0 276.0 135.0)"/><ellipse cx="221.0" cy="205.0" rx="50" ry="25" fill="#3a7e3a" opacity="1" transform="rotate(0 221.0 205.0)"/><ellipse cx="141.0" cy="200.0" rx="40" ry="25" fill="#2e6e32" opacity="1" transform="rotate(0 141.0 200.0)"/><ellipse cx="16.0" cy="185.0" rx="25" ry="40" fill="#4c8c3a" opacity="1" transform="rotate(0 16.0 185.0)"/><ellipse cx="281.0" cy="185.0" rx="20" ry="40" fill="#5c9a5a" opacity="1" transform="rotate(0 281.0 185.0)"/><ellipse cx="181.0" cy="45.0" rx="30" ry="30" fill="#3e7a44" opacity="1" transform="rotate(0 181.0 45.0)"/><ellipse cx="276.0" cy="10.0" rx="25" ry="20" fill="#2a5a2e" opacity="1" transform="rotate(0 276.0 10.0)"/>
<ellipse cx="14" cy="73" rx="12" ry="18" fill="#c8482a"/>
<ellipse cx="28" cy="78" rx="5" ry="13" fill="#3a4ea0"/>
</g>
<g filter="url(#bl)">
<path d="M1.0 109.0 C5.8 102.5 24.7 103.7 33.0 106.0 C41.3 108.3 48.7 115.5 51.0 123.0 C53.3 130.5 51.0 145.0 47.0 151.0 C43.0 157.0 34.2 160.0 27.0 159.0 C19.8 158.0 8.3 153.3 4.0 145.0 C-0.3 136.7 -3.8 115.5 1.0 109.0Z" fill="#2a5e34"/>
<path d="M6.0 135.0 C7.3 130.8 16.8 140.0 21.0 145.0 C25.2 150.0 32.3 160.8 31.0 165.0 C29.7 169.2 17.2 175.0 13.0 170.0 C8.8 165.0 4.7 139.2 6.0 135.0Z" fill="#3a7a40"/>
<ellipse cx="93" cy="185" rx="29" ry="34" fill="url(#leafg)" transform="rotate(-15 93 185)"/>
<path d="M93 153 Q 101 185 91 218" stroke="#8cc08a" stroke-width="1" fill="none"/>
<path d="M49.0 112.0 C58.7 104.0 77.0 111.8 81.0 117.0 C85.0 122.2 78.0 133.3 73.0 143.0 C68.0 152.7 59.7 163.7 51.0 175.0 C42.3 186.3 28.5 205.8 21.0 211.0 C13.5 216.2 5.7 213.7 6.0 206.0 C6.3 198.3 15.8 180.7 23.0 165.0 C30.2 149.3 39.3 120.0 49.0 112.0Z" fill="#d8b228"/>
<path d="M11.0 200.0 C14.3 193.2 29.7 175.8 36.0 170.0 C42.3 164.2 49.8 160.8 49.0 165.0 C48.2 169.2 36.5 187.3 31.0 195.0 C25.5 202.7 19.3 210.2 16.0 211.0 C12.7 211.8 7.7 206.8 11.0 200.0Z" fill="#f0d048"/>
<path d="M47.0 112.0 C53.7 108.7 76.0 111.2 81.0 115.0 C86.0 118.8 81.0 130.3 77.0 135.0 C73.0 139.7 63.0 143.0 57.0 143.0 C51.0 143.0 42.7 140.2 41.0 135.0 C39.3 129.8 40.3 115.3 47.0 112.0Z" fill="#a6c830"/>
<path d="M50.0 107.0 C47.0 102.0 50.3 86.3 53.0 77.0 C55.7 67.7 60.0 58.8 66.0 51.0 C72.0 43.2 81.2 35.2 89.0 30.0 C96.8 24.8 107.3 20.8 113.0 20.0 C118.7 19.2 125.0 20.8 123.0 25.0 C121.0 29.2 107.7 37.0 101.0 45.0 C94.3 53.0 88.0 62.7 83.0 73.0 C78.0 83.3 76.5 101.3 71.0 107.0 C65.5 112.7 53.0 112.0 50.0 107.0Z" fill="#8ec63c"/>
<path d="M57.0 95.0 C56.5 89.0 59.8 73.3 63.0 65.0 C66.2 56.7 75.3 43.3 76.0 45.0 C76.7 46.7 68.7 65.7 67.0 75.0 C65.3 84.3 67.7 97.7 66.0 101.0 C64.3 104.3 57.5 101.0 57.0 95.0Z" fill="#6aa830"/>
<path d="M67.0 85.0 C72.0 79.7 100.3 90.7 113.0 95.0 C125.7 99.3 141.3 104.3 143.0 111.0 C144.7 117.7 133.0 132.3 123.0 135.0 C113.0 137.7 92.3 135.3 83.0 127.0 C73.7 118.7 62.0 90.3 67.0 85.0Z" fill="#1f462a"/>
<path d="M78.0 57.0 C81.3 49.3 93.0 42.3 101.0 37.0 C109.0 31.7 118.0 28.3 126.0 25.0 C134.0 21.7 143.2 17.7 149.0 17.0 C154.8 16.3 158.7 13.0 161.0 21.0 C163.3 29.0 163.8 52.7 163.0 65.0 C162.2 77.3 161.0 88.2 156.0 95.0 C151.0 101.8 142.2 105.3 133.0 106.0 C123.8 106.7 109.7 102.8 101.0 99.0 C92.3 95.2 84.8 90.0 81.0 83.0 C77.2 76.0 74.7 64.7 78.0 57.0Z" fill="url(#orng)"/>
<path d="M111.0 22.0 C113.7 17.7 133.3 11.2 137.0 17.0 C140.7 22.8 135.7 52.7 133.0 57.0 C130.3 61.3 124.7 48.8 121.0 43.0 C117.3 37.2 108.3 26.3 111.0 22.0Z" fill="#2446a6"/>
<path d="M137.0 16.0 C139.7 3.8 148.8 8.5 153.0 12.0 C157.2 15.5 161.0 24.8 162.0 37.0 C163.0 49.2 161.5 74.2 159.0 85.0 C156.5 95.8 150.7 102.0 147.0 102.0 C143.3 102.0 138.7 99.3 137.0 85.0 C135.3 70.7 134.3 28.2 137.0 16.0Z" fill="#f3a220"/>
<path d="M151.0 21.0 C154.8 15.0 164.3 11.8 171.0 11.0 C177.7 10.2 185.7 12.3 191.0 16.0 C196.3 19.7 200.7 26.5 203.0 33.0 C205.3 39.5 206.7 48.3 205.0 55.0 C203.3 61.7 198.7 69.0 193.0 73.0 C187.3 77.0 177.3 79.5 171.0 79.0 C164.7 78.5 158.8 75.3 155.0 70.0 C151.2 64.7 148.7 55.2 148.0 47.0 C147.3 38.8 147.2 27.0 151.0 21.0Z" fill="url(#headg)"/>
<path d="M184.0 57.0 C186.5 53.8 197.5 51.3 201.0 53.0 C204.5 54.7 205.7 62.5 205.0 67.0 C204.3 71.5 200.2 79.2 197.0 80.0 C193.8 80.8 188.2 75.8 186.0 72.0 C183.8 68.2 181.5 60.2 184.0 57.0Z" fill="#e8562a"/>
<circle cx="175" cy="49" r="3" fill="#5a1a18"/>
<path d="M123.0 120.0 C126.0 116.7 143.2 116.7 147.0 120.0 C150.8 123.3 149.0 136.7 146.0 140.0 C143.0 143.3 132.8 143.3 129.0 140.0 C125.2 136.7 120.0 123.3 123.0 120.0Z" fill="#eed022"/>
<path d="M165.0 107.0 C163.7 98.7 171.0 93.0 177.0 89.0 C183.0 85.0 196.7 75.3 201.0 83.0 C205.3 90.7 205.7 125.7 203.0 135.0 C200.3 144.3 191.3 143.7 185.0 139.0 C178.7 134.3 166.3 115.3 165.0 107.0Z" fill="#9ec232"/>
<path d="M181.0 107.0 C184.2 99.3 193.0 97.3 203.0 95.0 C213.0 92.7 229.3 91.3 241.0 93.0 C252.7 94.7 266.7 98.0 273.0 105.0 C279.3 112.0 279.7 125.0 279.0 135.0 C278.3 145.0 276.2 158.7 269.0 165.0 C261.8 171.3 247.3 172.7 236.0 173.0 C224.7 173.3 209.7 172.3 201.0 167.0 C192.3 161.7 187.3 151.0 184.0 141.0 C180.7 131.0 177.8 114.7 181.0 107.0Z" fill="url(#orng2)"/>
<path d="M179.0 145.0 C184.3 144.7 200.7 160.7 213.0 165.0 C225.3 169.3 246.7 168.0 253.0 171.0 C259.3 174.0 258.7 181.3 251.0 183.0 C243.3 184.7 218.7 183.7 207.0 181.0 C195.3 178.3 185.7 173.0 181.0 167.0 C176.3 161.0 173.7 145.3 179.0 145.0Z" fill="#1c3820"/>
<path d="M253.0 63.0 C255.2 53.5 262.5 61.0 266.0 68.0 C269.5 75.0 273.8 94.5 274.0 105.0 C274.2 115.5 270.5 127.7 267.0 131.0 C263.5 134.3 255.3 136.3 253.0 125.0 C250.7 113.7 250.8 72.5 253.0 63.0Z" fill="#e05c28"/>
<path d="M267.0 85.0 C267.3 77.5 271.3 84.2 273.0 90.0 C274.7 95.8 277.3 112.5 277.0 120.0 C276.7 127.5 272.7 140.8 271.0 135.0 C269.3 129.2 266.7 92.5 267.0 85.0Z" fill="#1e3a6a"/>
<path d="M206.0 65.0 C209.3 59.8 216.2 55.8 223.0 54.0 C229.8 52.2 240.7 51.5 247.0 54.0 C253.3 56.5 258.3 61.2 261.0 69.0 C263.7 76.8 264.3 91.8 263.0 101.0 C261.7 110.2 259.7 119.8 253.0 124.0 C246.3 128.2 230.7 127.7 223.0 126.0 C215.3 124.3 210.3 120.8 207.0 114.0 C203.7 107.2 203.2 93.2 203.0 85.0 C202.8 76.8 202.7 70.2 206.0 65.0Z" fill="url(#headg)"/>
<path d="M197.0 87.0 C198.5 82.8 210.5 80.5 214.0 83.0 C217.5 85.5 219.5 97.8 218.0 102.0 C216.5 106.2 208.5 110.5 205.0 108.0 C201.5 105.5 195.5 91.2 197.0 87.0Z" fill="#d83c22"/>
<circle cx="228" cy="102" r="2.8" fill="#5a1a18"/>
<path d="M218.0 178.0 C223.3 175.0 247.7 175.8 253.0 179.0 C258.3 182.2 255.3 194.0 250.0 197.0 C244.7 200.0 226.3 200.2 221.0 197.0 C215.7 193.8 212.7 181.0 218.0 178.0Z" fill="#f0b224"/>
</g>
<path d="M0 97 Q 40 100 75 112 Q 110 124 140 140 Q 180 165 215 195 Q 225 203 232 215" fill="none" stroke="#6a5c46" stroke-width="5.5" stroke-linecap="round"/>
<path d="M0 96 Q 40 99 75 111 Q 110 123 140 139" fill="none" stroke="#8a8a6a" stroke-width="1.2" opacity=".7"/>
<path d="M258 168 Q 270 190 283 217" fill="none" stroke="#6e6650" stroke-width="4"/>
<path d="M75 115 L74 218" stroke="#a6c48e" stroke-width="2.2"/>
<path d="M181 176 L183 218" stroke="#8a9070" stroke-width="1.5"/>
<g opacity=".55" filter="url(#bl05)"><path d="M181.4 57.6l0.4 4.8" stroke="#3a8aec" stroke-width="1"/><path d="M182.7 46.6l0.2 4.4" stroke="#5aaaf8" stroke-width="1"/><path d="M182.6 65.8l2.3 2.8" stroke="#5aaaf8" stroke-width="1"/><path d="M170.8 24.3l2.3 3.6" stroke="#1e50b0" stroke-width="1"/><path d="M166.3 66.6l0.3 2.9" stroke="#5aaaf8" stroke-width="1"/><path d="M160.1 51.1l1.6 2.0" stroke="#5aaaf8" stroke-width="1"/><path d="M163.2 30.2l-0.3 4.7" stroke="#1e50b0" stroke-width="1"/><path d="M167.8 29.3l0.1 4.1" stroke="#5aaaf8" stroke-width="1"/><path d="M195.4 54.9l-0.3 4.7" stroke="#1e50b0" stroke-width="1"/><path d="M154.9 40.6l-0.1 3.2" stroke="#1e50b0" stroke-width="1"/><path d="M167.3 50.4l3.0 3.0" stroke="#1e50b0" stroke-width="1"/><path d="M156.9 37.5l2.1 3.7" stroke="#5aaaf8" stroke-width="1"/><path d="M175.2 55.6l3.3 3.7" stroke="#5aaaf8" stroke-width="1"/><path d="M195.8 37.6l1.6 3.5" stroke="#1e50b0" stroke-width="1"/><path d="M170.1 49.1l1.8 1.9" stroke="#5aaaf8" stroke-width="1"/><path d="M181.4 68.6l2.0 2.4" stroke="#1e50b0" stroke-width="1"/><path d="M169.2 37.4l1.4 4.2" stroke="#5aaaf8" stroke-width="1"/><path d="M179.9 59.6l1.5 2.9" stroke="#1e50b0" stroke-width="1"/><path d="M169.0 50.8l-0.1 3.3" stroke="#3a8aec" stroke-width="1"/><path d="M178.0 35.2l1.4 2.6" stroke="#5aaaf8" stroke-width="1"/><path d="M181.6 56.5l1.8 3.2" stroke="#3a8aec" stroke-width="1"/><path d="M177.5 40.1l2.2 3.3" stroke="#1e50b0" stroke-width="1"/><path d="M174.0 40.9l3.2 3.5" stroke="#5aaaf8" stroke-width="1"/><path d="M189.3 36.4l2.8 4.1" stroke="#3a8aec" stroke-width="1"/><path d="M195.8 51.8l0.3 2.8" stroke="#1e50b0" stroke-width="1"/><path d="M170.4 22.1l1.2 2.6" stroke="#3a8aec" stroke-width="1"/><path d="M174.0 44.4l0.5 3.7" stroke="#1e50b0" stroke-width="1"/><path d="M174.7 65.9l2.9 3.5" stroke="#3a8aec" stroke-width="1"/><path d="M196.2 51.6l1.1 3.1" stroke="#5aaaf8" stroke-width="1"/><path d="M175.6 45.8l1.1 3.6" stroke="#5aaaf8" stroke-width="1"/><path d="M188.6 59.3l0.7 4.1" stroke="#1e50b0" stroke-width="1"/><path d="M170.0 55.6l1.9 3.2" stroke="#3a8aec" stroke-width="1"/><path d="M169.0 28.3l0.2 3.7" stroke="#1e50b0" stroke-width="1"/><path d="M168.3 33.2l1.9 3.2" stroke="#3a8aec" stroke-width="1"/><path d="M189.1 37.1l1.0 4.2" stroke="#1e50b0" stroke-width="1"/><path d="M169.4 62.8l0.1 4.2" stroke="#1e50b0" stroke-width="1"/><path d="M196.1 45.9l0.9 2.8" stroke="#1e50b0" stroke-width="1"/><path d="M195.2 43.8l0.8 4.2" stroke="#3a8aec" stroke-width="1"/><path d="M172.3 51.1l-0.1 3.8" stroke="#1e50b0" stroke-width="1"/><path d="M167.3 47.8l0.1 3.2" stroke="#5aaaf8" stroke-width="1"/><path d="M162.6 49.5l0.7 2.9" stroke="#3a8aec" stroke-width="1"/><path d="M161.9 56.4l-0.4 4.9" stroke="#5aaaf8" stroke-width="1"/><path d="M168.0 28.4l1.5 2.1" stroke="#1e50b0" stroke-width="1"/><path d="M169.4 53.5l2.0 2.3" stroke="#3a8aec" stroke-width="1"/><path d="M171.8 33.5l1.2 2.5" stroke="#3a8aec" stroke-width="1"/><path d="M170.5 20.9l0.7 2.7" stroke="#3a8aec" stroke-width="1"/><path d="M176.6 68.5l1.7 2.9" stroke="#5aaaf8" stroke-width="1"/><path d="M172.4 61.3l0.8 3.3" stroke="#5aaaf8" stroke-width="1"/><path d="M160.9 38.9l1.1 2.8" stroke="#5aaaf8" stroke-width="1"/><path d="M180.8 37.3l0.0 2.5" stroke="#5aaaf8" stroke-width="1"/><path d="M168.3 66.7l1.0 3.2" stroke="#3a8aec" stroke-width="1"/><path d="M170.5 41.4l1.8 2.7" stroke="#3a8aec" stroke-width="1"/><path d="M170.7 69.0l-0.0 4.0" stroke="#1e50b0" stroke-width="1"/><path d="M186.6 34.6l1.4 2.2" stroke="#1e50b0" stroke-width="1"/><path d="M175.6 33.9l1.0 2.6" stroke="#3a8aec" stroke-width="1"/><path d="M171.3 44.0l0.9 3.0" stroke="#1e50b0" stroke-width="1"/><path d="M188.4 31.8l1.5 2.5" stroke="#1e50b0" stroke-width="1"/><path d="M166.9 50.6l1.5 3.8" stroke="#3a8aec" stroke-width="1"/><path d="M166.4 55.8l1.1 4.2" stroke="#5aaaf8" stroke-width="1"/><path d="M174.4 37.8l0.5 3.9" stroke="#5aaaf8" stroke-width="1"/><path d="M184.2 24.6l0.5 2.9" stroke="#1e50b0" stroke-width="1"/><path d="M188.2 41.2l1.2 4.1" stroke="#3a8aec" stroke-width="1"/><path d="M182.6 63.7l0.2 3.7" stroke="#3a8aec" stroke-width="1"/><path d="M191.5 29.2l2.3 4.0" stroke="#5aaaf8" stroke-width="1"/><path d="M188.3 49.3l0.8 3.6" stroke="#1e50b0" stroke-width="1"/><path d="M160.3 43.9l1.1 3.6" stroke="#1e50b0" stroke-width="1"/><path d="M177.7 41.1l0.8 2.5" stroke="#3a8aec" stroke-width="1"/><path d="M164.1 61.6l0.4 4.1" stroke="#5aaaf8" stroke-width="1"/><path d="M168.7 41.3l2.3 2.6" stroke="#1e50b0" stroke-width="1"/><path d="M163.6 52.6l-0.2 4.3" stroke="#5aaaf8" stroke-width="1"/><path d="M173.3 28.5l2.6 3.7" stroke="#5aaaf8" stroke-width="1"/><path d="M181.4 21.3l2.2 2.7" stroke="#5aaaf8" stroke-width="1"/><path d="M166.3 48.7l2.2 2.7" stroke="#3a8aec" stroke-width="1"/><path d="M159.9 41.4l2.0 3.5" stroke="#1e50b0" stroke-width="1"/><path d="M169.5 53.1l-0.0 2.8" stroke="#1e50b0" stroke-width="1"/><path d="M160.6 51.8l1.6 4.5" stroke="#3a8aec" stroke-width="1"/><path d="M178.2 30.5l2.1 2.3" stroke="#1e50b0" stroke-width="1"/><path d="M176.7 26.0l1.9 2.9" stroke="#3a8aec" stroke-width="1"/><path d="M171.1 25.8l2.3 2.4" stroke="#3a8aec" stroke-width="1"/><path d="M183.4 23.7l2.5 3.1" stroke="#5aaaf8" stroke-width="1"/><path d="M171.2 43.1l-0.2 2.8" stroke="#3a8aec" stroke-width="1"/><path d="M195.9 54.4l1.6 2.3" stroke="#3a8aec" stroke-width="1"/><path d="M175.6 30.0l0.6 3.4" stroke="#5aaaf8" stroke-width="1"/><path d="M166.8 67.4l0.8 4.4" stroke="#1e50b0" stroke-width="1"/><path d="M160.0 62.2l1.0 4.4" stroke="#1e50b0" stroke-width="1"/><path d="M196.3 37.8l3.4 3.6" stroke="#5aaaf8" stroke-width="1"/><path d="M186.6 39.6l1.7 2.0" stroke="#5aaaf8" stroke-width="1"/><path d="M162.6 44.5l-0.1 4.2" stroke="#1e50b0" stroke-width="1"/><path d="M193.2 51.2l1.5 3.4" stroke="#5aaaf8" stroke-width="1"/><path d="M162.4 53.0l3.1 3.5" stroke="#1e50b0" stroke-width="1"/><path d="M216.3 76.2l-0.4 2.9" stroke="#1e50b0" stroke-width="1"/><path d="M241.3 63.9l-2.2 2.6" stroke="#1e50b0" stroke-width="1"/><path d="M224.2 65.3l0.2 3.6" stroke="#5aaaf8" stroke-width="1"/><path d="M214.7 99.4l-0.7 4.1" stroke="#3a8aec" stroke-width="1"/><path d="M243.3 94.2l-1.9 3.6" stroke="#3a8aec" stroke-width="1"/><path d="M226.5 79.5l-1.0 3.0" stroke="#3a8aec" stroke-width="1"/><path d="M256.7 88.2l-1.6 2.4" stroke="#5aaaf8" stroke-width="1"/><path d="M254.1 98.2l-1.4 4.7" stroke="#5aaaf8" stroke-width="1"/><path d="M231.2 87.4l-1.4 2.6" stroke="#5aaaf8" stroke-width="1"/><path d="M235.3 117.4l-1.2 3.2" stroke="#5aaaf8" stroke-width="1"/><path d="M243.4 75.3l-1.6 2.2" stroke="#1e50b0" stroke-width="1"/><path d="M211.4 84.2l0.1 3.1" stroke="#1e50b0" stroke-width="1"/><path d="M230.4 97.9l-3.1 3.8" stroke="#5aaaf8" stroke-width="1"/><path d="M217.6 90.5l-1.0 3.7" stroke="#5aaaf8" stroke-width="1"/><path d="M244.0 97.0l-1.0 3.2" stroke="#1e50b0" stroke-width="1"/><path d="M236.4 83.1l-1.9 3.9" stroke="#1e50b0" stroke-width="1"/><path d="M242.1 111.9l-2.7 2.7" stroke="#5aaaf8" stroke-width="1"/><path d="M224.0 66.9l-2.5 3.8" stroke="#1e50b0" stroke-width="1"/><path d="M215.4 92.1l-1.4 4.0" stroke="#1e50b0" stroke-width="1"/><path d="M255.5 99.3l-0.6 3.7" stroke="#5aaaf8" stroke-width="1"/><path d="M222.7 82.9l0.0 3.6" stroke="#1e50b0" stroke-width="1"/><path d="M227.2 105.1l0.3 3.2" stroke="#5aaaf8" stroke-width="1"/><path d="M236.6 86.8l-2.4 3.4" stroke="#5aaaf8" stroke-width="1"/><path d="M243.9 101.3l-0.7 4.5" stroke="#1e50b0" stroke-width="1"/><path d="M236.0 80.0l-0.5 2.8" stroke="#1e50b0" stroke-width="1"/><path d="M241.4 78.0l0.1 4.4" stroke="#3a8aec" stroke-width="1"/><path d="M229.9 76.5l-1.7 1.9" stroke="#3a8aec" stroke-width="1"/><path d="M229.6 82.3l-0.5 2.5" stroke="#3a8aec" stroke-width="1"/><path d="M238.7 71.1l-2.2 2.3" stroke="#3a8aec" stroke-width="1"/><path d="M217.2 101.7l-1.4 4.6" stroke="#1e50b0" stroke-width="1"/><path d="M214.7 79.8l-2.4 2.8" stroke="#1e50b0" stroke-width="1"/><path d="M241.1 71.0l-1.2 3.5" stroke="#5aaaf8" stroke-width="1"/><path d="M229.1 64.9l-1.8 1.9" stroke="#3a8aec" stroke-width="1"/><path d="M220.3 101.5l-0.8 3.6" stroke="#5aaaf8" stroke-width="1"/><path d="M222.3 73.3l-1.3 3.1" stroke="#5aaaf8" stroke-width="1"/><path d="M226.6 107.3l-2.4 3.4" stroke="#5aaaf8" stroke-width="1"/><path d="M238.7 84.4l-0.2 4.6" stroke="#1e50b0" stroke-width="1"/><path d="M227.3 67.3l-1.1 4.2" stroke="#1e50b0" stroke-width="1"/><path d="M247.3 80.1l-2.3 4.1" stroke="#3a8aec" stroke-width="1"/><path d="M242.1 67.8l-1.7 3.7" stroke="#1e50b0" stroke-width="1"/><path d="M238.3 90.8l-1.3 3.6" stroke="#3a8aec" stroke-width="1"/><path d="M228.2 117.0l-2.8 3.9" stroke="#3a8aec" stroke-width="1"/><path d="M235.8 65.4l-0.1 3.5" stroke="#3a8aec" stroke-width="1"/><path d="M218.9 78.0l0.3 4.4" stroke="#3a8aec" stroke-width="1"/><path d="M236.9 104.5l-1.7 2.8" stroke="#5aaaf8" stroke-width="1"/><path d="M222.2 102.1l0.1 4.4" stroke="#3a8aec" stroke-width="1"/><path d="M225.9 106.9l-2.7 3.0" stroke="#3a8aec" stroke-width="1"/><path d="M219.0 90.9l-2.0 2.4" stroke="#3a8aec" stroke-width="1"/><path d="M229.3 116.3l-1.6 3.0" stroke="#3a8aec" stroke-width="1"/><path d="M234.4 73.6l-1.6 2.9" stroke="#1e50b0" stroke-width="1"/><path d="M214.2 100.6l-1.7 4.0" stroke="#1e50b0" stroke-width="1"/><path d="M221.0 67.6l-0.8 4.4" stroke="#3a8aec" stroke-width="1"/><path d="M212.7 85.1l-0.3 4.1" stroke="#3a8aec" stroke-width="1"/><path d="M236.2 108.5l-2.7 3.4" stroke="#1e50b0" stroke-width="1"/><path d="M220.1 89.1l-1.3 2.8" stroke="#1e50b0" stroke-width="1"/><path d="M222.5 95.9l-2.0 2.2" stroke="#5aaaf8" stroke-width="1"/><path d="M216.2 78.6l-1.5 3.6" stroke="#1e50b0" stroke-width="1"/><path d="M218.1 95.3l-1.9 3.8" stroke="#3a8aec" stroke-width="1"/><path d="M215.6 91.1l0.1 3.0" stroke="#1e50b0" stroke-width="1"/><path d="M240.0 113.9l-0.5 4.2" stroke="#1e50b0" stroke-width="1"/><path d="M241.3 68.2l-0.7 3.3" stroke="#5aaaf8" stroke-width="1"/><path d="M236.6 86.7l-0.9 4.3" stroke="#5aaaf8" stroke-width="1"/><path d="M243.2 113.7l-2.8 3.0" stroke="#5aaaf8" stroke-width="1"/><path d="M226.5 107.6l-0.3 3.3" stroke="#5aaaf8" stroke-width="1"/><path d="M231.0 100.1l-1.4 2.3" stroke="#1e50b0" stroke-width="1"/><path d="M254.2 88.1l0.4 4.9" stroke="#1e50b0" stroke-width="1"/><path d="M227.3 81.2l-2.0 3.2" stroke="#3a8aec" stroke-width="1"/><path d="M245.0 72.9l-0.6 2.8" stroke="#1e50b0" stroke-width="1"/><path d="M239.8 104.9l0.0 2.8" stroke="#1e50b0" stroke-width="1"/><path d="M225.2 109.5l-0.9 2.5" stroke="#1e50b0" stroke-width="1"/><path d="M243.6 70.2l-2.7 2.8" stroke="#1e50b0" stroke-width="1"/><path d="M256.3 92.3l-1.2 4.7" stroke="#5aaaf8" stroke-width="1"/><path d="M230.7 69.2l0.1 4.5" stroke="#5aaaf8" stroke-width="1"/><path d="M221.0 87.7l-0.9 3.7" stroke="#5aaaf8" stroke-width="1"/><path d="M233.9 115.5l-1.9 4.2" stroke="#1e50b0" stroke-width="1"/><path d="M233.4 65.0l-1.1 4.3" stroke="#1e50b0" stroke-width="1"/><path d="M240.7 96.6l-1.3 2.8" stroke="#1e50b0" stroke-width="1"/><path d="M245.9 85.1l-2.9 3.6" stroke="#1e50b0" stroke-width="1"/><path d="M217.0 81.0l-0.5 2.9" stroke="#5aaaf8" stroke-width="1"/><path d="M229.2 77.2l-1.0 3.1" stroke="#3a8aec" stroke-width="1"/><path d="M239.4 105.1l-1.5 2.3" stroke="#3a8aec" stroke-width="1"/><path d="M227.3 112.3l-1.9 2.3" stroke="#5aaaf8" stroke-width="1"/><path d="M244.9 89.7l-0.7 3.6" stroke="#1e50b0" stroke-width="1"/><path d="M220.4 113.5l-1.7 1.9" stroke="#5aaaf8" stroke-width="1"/><path d="M215.3 98.6l-0.6 3.0" stroke="#1e50b0" stroke-width="1"/><path d="M233.9 116.6l-1.4 2.4" stroke="#5aaaf8" stroke-width="1"/><path d="M214.1 84.4l-0.8 4.7" stroke="#3a8aec" stroke-width="1"/><path d="M236.9 116.1l-0.5 3.9" stroke="#1e50b0" stroke-width="1"/><path d="M227.5 75.3l-1.2 2.3" stroke="#5aaaf8" stroke-width="1"/><path d="M246.0 85.5l-1.4 3.8" stroke="#1e50b0" stroke-width="1"/><path d="M211.7 90.0l0.2 3.5" stroke="#1e50b0" stroke-width="1"/><path d="M246.3 93.2l-0.8 2.6" stroke="#5aaaf8" stroke-width="1"/><path d="M253.4 82.7l-1.6 4.0" stroke="#3a8aec" stroke-width="1"/><path d="M223.5 71.3l-1.8 2.0" stroke="#1e50b0" stroke-width="1"/><path d="M238.7 67.5l-1.6 4.3" stroke="#1e50b0" stroke-width="1"/><path d="M248.8 69.7l-0.8 3.6" stroke="#3a8aec" stroke-width="1"/><path d="M236.1 93.7l0.2 4.3" stroke="#5aaaf8" stroke-width="1"/><path d="M225.4 70.1l-2.2 2.3" stroke="#1e50b0" stroke-width="1"/><path d="M232.2 70.1l-0.1 3.1" stroke="#5aaaf8" stroke-width="1"/><path d="M239.0 83.8l-1.4 2.8" stroke="#1e50b0" stroke-width="1"/><path d="M117.8 89.5l-0.9 4.5" stroke="#f6a828" stroke-width="1"/><path d="M125.5 73.2l1.5 2.1" stroke="#f6a828" stroke-width="1"/><path d="M112.7 89.3l2.2 3.3" stroke="#ffc848" stroke-width="1"/><path d="M108.5 71.6l0.9 3.8" stroke="#f6a828" stroke-width="1"/><path d="M90.3 79.6l1.3 2.3" stroke="#d87a18" stroke-width="1"/><path d="M102.8 71.3l0.6 4.6" stroke="#f6a828" stroke-width="1"/><path d="M122.3 58.2l0.8 3.2" stroke="#d87a18" stroke-width="1"/><path d="M126.4 70.8l-0.6 3.6" stroke="#ffc848" stroke-width="1"/><path d="M121.1 93.1l1.3 3.8" stroke="#d87a18" stroke-width="1"/><path d="M91.6 62.3l1.8 3.1" stroke="#f6a828" stroke-width="1"/><path d="M113.9 64.5l2.0 4.3" stroke="#ffc848" stroke-width="1"/><path d="M122.7 67.3l0.5 4.8" stroke="#ffc848" stroke-width="1"/><path d="M109.6 73.3l0.8 4.8" stroke="#ffc848" stroke-width="1"/><path d="M115.9 78.4l1.1 4.3" stroke="#d87a18" stroke-width="1"/><path d="M102.3 49.6l1.3 3.1" stroke="#f6a828" stroke-width="1"/><path d="M100.8 76.7l0.3 4.9" stroke="#ffc848" stroke-width="1"/><path d="M122.9 49.7l2.4 4.0" stroke="#d87a18" stroke-width="1"/><path d="M130.9 74.3l2.6 4.2" stroke="#d87a18" stroke-width="1"/><path d="M96.0 61.4l-0.2 2.7" stroke="#d87a18" stroke-width="1"/><path d="M132.9 60.2l1.2 3.1" stroke="#d87a18" stroke-width="1"/><path d="M90.3 59.7l2.1 4.4" stroke="#f6a828" stroke-width="1"/><path d="M133.6 70.3l1.8 3.1" stroke="#ffc848" stroke-width="1"/><path d="M108.9 92.8l0.6 4.1" stroke="#f6a828" stroke-width="1"/><path d="M113.6 92.5l-0.8 3.6" stroke="#ffc848" stroke-width="1"/><path d="M95.8 56.8l0.2 2.7" stroke="#f6a828" stroke-width="1"/><path d="M138.3 72.2l0.7 3.1" stroke="#f6a828" stroke-width="1"/><path d="M110.6 86.7l2.6 3.9" stroke="#ffc848" stroke-width="1"/><path d="M106.9 77.0l-0.6 3.3" stroke="#f6a828" stroke-width="1"/><path d="M114.5 51.3l2.6 4.1" stroke="#d87a18" stroke-width="1"/><path d="M102.9 72.8l-0.3 4.1" stroke="#d87a18" stroke-width="1"/><path d="M101.8 82.7l1.4 3.4" stroke="#f6a828" stroke-width="1"/><path d="M118.5 51.0l1.8 3.8" stroke="#f6a828" stroke-width="1"/><path d="M127.0 67.2l1.2 2.9" stroke="#f6a828" stroke-width="1"/><path d="M91.7 67.2l0.3 4.6" stroke="#ffc848" stroke-width="1"/><path d="M128.7 69.1l1.6 4.4" stroke="#f6a828" stroke-width="1"/><path d="M105.5 46.7l-0.1 2.8" stroke="#ffc848" stroke-width="1"/><path d="M104.5 74.8l0.2 3.7" stroke="#f6a828" stroke-width="1"/><path d="M134.8 58.7l1.5 4.5" stroke="#ffc848" stroke-width="1"/><path d="M114.2 59.3l1.3 4.3" stroke="#d87a18" stroke-width="1"/><path d="M121.1 83.4l-0.1 2.5" stroke="#ffc848" stroke-width="1"/><path d="M103.2 88.4l0.1 3.5" stroke="#f6a828" stroke-width="1"/><path d="M122.1 61.7l-0.1 3.8" stroke="#f6a828" stroke-width="1"/><path d="M122.8 85.0l2.2 3.3" stroke="#f6a828" stroke-width="1"/><path d="M127.1 87.5l2.1 3.2" stroke="#d87a18" stroke-width="1"/><path d="M95.8 52.9l0.7 4.1" stroke="#d87a18" stroke-width="1"/><path d="M120.9 64.0l0.1 3.1" stroke="#d87a18" stroke-width="1"/><path d="M135.4 63.4l0.3 3.0" stroke="#ffc848" stroke-width="1"/><path d="M106.4 75.0l-0.2 3.6" stroke="#f6a828" stroke-width="1"/><path d="M124.8 90.4l0.4 2.5" stroke="#d87a18" stroke-width="1"/><path d="M126.8 49.5l0.8 3.5" stroke="#d87a18" stroke-width="1"/><path d="M111.8 71.1l2.5 3.7" stroke="#f6a828" stroke-width="1"/><path d="M119.4 87.4l0.3 4.3" stroke="#f6a828" stroke-width="1"/><path d="M97.6 77.9l0.8 3.7" stroke="#ffc848" stroke-width="1"/><path d="M123.2 54.5l0.7 4.7" stroke="#ffc848" stroke-width="1"/><path d="M109.3 59.6l-0.1 3.5" stroke="#ffc848" stroke-width="1"/><path d="M127.1 50.0l0.8 2.9" stroke="#ffc848" stroke-width="1"/><path d="M107.9 67.5l0.6 2.5" stroke="#d87a18" stroke-width="1"/><path d="M114.3 54.5l0.0 4.6" stroke="#d87a18" stroke-width="1"/><path d="M126.7 89.3l-0.8 4.4" stroke="#d87a18" stroke-width="1"/><path d="M116.2 86.9l-0.1 4.3" stroke="#ffc848" stroke-width="1"/><path d="M104.0 57.0l0.1 4.4" stroke="#ffc848" stroke-width="1"/><path d="M95.4 76.9l-0.0 3.6" stroke="#ffc848" stroke-width="1"/><path d="M119.6 53.5l0.6 4.2" stroke="#ffc848" stroke-width="1"/><path d="M125.6 80.4l0.9 4.5" stroke="#d87a18" stroke-width="1"/><path d="M124.8 90.0l0.6 3.4" stroke="#ffc848" stroke-width="1"/><path d="M124.6 63.2l-0.5 3.1" stroke="#f6a828" stroke-width="1"/><path d="M110.5 91.8l0.3 3.8" stroke="#ffc848" stroke-width="1"/><path d="M107.4 73.1l-0.6 2.5" stroke="#d87a18" stroke-width="1"/><path d="M102.3 86.5l2.0 3.3" stroke="#ffc848" stroke-width="1"/><path d="M91.3 78.1l0.9 2.6" stroke="#d87a18" stroke-width="1"/><path d="M108.2 60.7l-0.6 4.4" stroke="#d87a18" stroke-width="1"/><path d="M119.7 84.5l-0.9 4.6" stroke="#f6a828" stroke-width="1"/><path d="M132.3 79.4l1.9 3.2" stroke="#d87a18" stroke-width="1"/><path d="M98.3 59.8l1.0 3.9" stroke="#f6a828" stroke-width="1"/><path d="M90.7 79.1l1.3 3.0" stroke="#ffc848" stroke-width="1"/><path d="M117.7 47.8l1.0 3.4" stroke="#ffc848" stroke-width="1"/><path d="M105.0 93.1l1.7 2.9" stroke="#ffc848" stroke-width="1"/><path d="M105.5 49.4l1.5 4.3" stroke="#d87a18" stroke-width="1"/><path d="M104.1 79.7l1.0 4.6" stroke="#ffc848" stroke-width="1"/><path d="M117.9 90.3l1.2 3.4" stroke="#f6a828" stroke-width="1"/><path d="M114.4 70.7l1.9 3.3" stroke="#d87a18" stroke-width="1"/><path d="M108.5 54.2l-0.1 4.8" stroke="#ffc848" stroke-width="1"/><path d="M93.8 66.8l-0.5 3.2" stroke="#d87a18" stroke-width="1"/><path d="M108.9 92.9l1.2 2.2" stroke="#ffc848" stroke-width="1"/><path d="M92.7 83.3l-0.5 2.6" stroke="#ffc848" stroke-width="1"/><path d="M102.3 59.2l0.7 3.0" stroke="#d87a18" stroke-width="1"/><path d="M110.7 52.4l1.3 4.0" stroke="#f6a828" stroke-width="1"/><path d="M116.3 64.6l0.7 3.6" stroke="#ffc848" stroke-width="1"/><path d="M96.2 68.7l1.3 3.8" stroke="#ffc848" stroke-width="1"/><path d="M109.8 58.2l-0.6 3.3" stroke="#f6a828" stroke-width="1"/><path d="M263.9 142.6l-1.5 4.8" stroke="#ffb040" stroke-width="1"/><path d="M209.8 159.0l-0.1 3.4" stroke="#ffb040" stroke-width="1"/><path d="M211.8 143.5l-1.3 3.3" stroke="#c8601a" stroke-width="1"/><path d="M213.2 133.2l-1.3 3.5" stroke="#ffb040" stroke-width="1"/><path d="M255.6 153.4l0.8 3.7" stroke="#f89028" stroke-width="1"/><path d="M207.7 149.2l1.1 3.1" stroke="#c8601a" stroke-width="1"/><path d="M203.1 147.0l0.7 3.7" stroke="#ffb040" stroke-width="1"/><path d="M222.4 139.6l0.3 2.5" stroke="#f89028" stroke-width="1"/><path d="M208.3 134.7l-1.3 3.0" stroke="#ffb040" stroke-width="1"/><path d="M261.1 152.4l-1.1 4.6" stroke="#f89028" stroke-width="1"/><path d="M253.2 137.2l0.9 3.0" stroke="#ffb040" stroke-width="1"/><path d="M226.6 136.6l-1.8 4.2" stroke="#c8601a" stroke-width="1"/><path d="M231.9 136.3l1.7 4.0" stroke="#f89028" stroke-width="1"/><path d="M214.8 153.6l1.3 3.5" stroke="#f89028" stroke-width="1"/><path d="M217.7 145.3l0.9 2.6" stroke="#ffb040" stroke-width="1"/><path d="M221.7 136.6l-0.3 2.5" stroke="#f89028" stroke-width="1"/><path d="M250.6 150.7l0.5 3.4" stroke="#c8601a" stroke-width="1"/><path d="M218.2 135.6l-1.2 3.8" stroke="#c8601a" stroke-width="1"/><path d="M239.7 136.1l1.4 3.0" stroke="#ffb040" stroke-width="1"/><path d="M216.1 142.3l-0.4 3.0" stroke="#f89028" stroke-width="1"/><path d="M209.4 157.4l1.1 3.8" stroke="#f89028" stroke-width="1"/><path d="M247.9 156.3l0.1 4.7" stroke="#f89028" stroke-width="1"/><path d="M220.8 137.2l-0.3 4.0" stroke="#f89028" stroke-width="1"/><path d="M244.2 154.1l-0.5 3.9" stroke="#f89028" stroke-width="1"/><path d="M210.9 158.5l0.5 4.6" stroke="#f89028" stroke-width="1"/><path d="M241.2 140.5l1.0 3.7" stroke="#f89028" stroke-width="1"/><path d="M233.9 138.8l1.3 2.9" stroke="#ffb040" stroke-width="1"/><path d="M218.8 160.1l0.8 4.0" stroke="#c8601a" stroke-width="1"/><path d="M247.3 152.0l1.2 2.8" stroke="#c8601a" stroke-width="1"/><path d="M254.8 142.1l-0.7 2.6" stroke="#c8601a" stroke-width="1"/><path d="M233.0 133.0l-0.6 4.3" stroke="#c8601a" stroke-width="1"/><path d="M267.2 142.9l-0.3 3.0" stroke="#f89028" stroke-width="1"/><path d="M217.6 147.1l1.0 3.4" stroke="#f89028" stroke-width="1"/><path d="M246.0 133.5l0.5 4.5" stroke="#f89028" stroke-width="1"/><path d="M262.8 149.6l-1.0 4.0" stroke="#c8601a" stroke-width="1"/><path d="M251.3 136.1l0.0 3.8" stroke="#f89028" stroke-width="1"/><path d="M212.0 159.5l0.1 3.7" stroke="#f89028" stroke-width="1"/><path d="M238.5 166.7l0.7 4.2" stroke="#ffb040" stroke-width="1"/><path d="M205.7 158.1l-0.5 3.8" stroke="#ffb040" stroke-width="1"/><path d="M233.1 151.6l-0.8 4.8" stroke="#ffb040" stroke-width="1"/><path d="M229.0 163.5l-1.7 4.1" stroke="#c8601a" stroke-width="1"/><path d="M253.6 144.4l-1.6 3.5" stroke="#c8601a" stroke-width="1"/><path d="M233.6 146.7l-0.5 3.9" stroke="#ffb040" stroke-width="1"/><path d="M252.4 150.5l2.1 4.5" stroke="#ffb040" stroke-width="1"/><path d="M218.9 138.9l-0.8 3.0" stroke="#f89028" stroke-width="1"/><path d="M204.5 146.8l-1.1 2.9" stroke="#c8601a" stroke-width="1"/><path d="M217.6 141.6l1.2 2.5" stroke="#ffb040" stroke-width="1"/><path d="M216.1 138.5l1.1 4.7" stroke="#ffb040" stroke-width="1"/><path d="M238.0 137.1l-0.1 4.1" stroke="#ffb040" stroke-width="1"/><path d="M209.8 158.4l1.2 3.4" stroke="#ffb040" stroke-width="1"/><path d="M236.9 161.9l0.8 4.8" stroke="#ffb040" stroke-width="1"/><path d="M229.3 153.0l0.3 2.8" stroke="#f89028" stroke-width="1"/><path d="M248.7 156.5l-0.7 2.4" stroke="#c8601a" stroke-width="1"/><path d="M238.1 132.5l-0.8 4.0" stroke="#c8601a" stroke-width="1"/><path d="M267.1 149.2l0.5 2.7" stroke="#c8601a" stroke-width="1"/><path d="M232.6 156.5l-1.1 2.5" stroke="#f89028" stroke-width="1"/><path d="M252.9 136.8l0.2 2.8" stroke="#ffb040" stroke-width="1"/><path d="M243.6 147.3l0.3 3.0" stroke="#f89028" stroke-width="1"/><path d="M245.7 147.9l0.3 2.8" stroke="#ffb040" stroke-width="1"/><path d="M201.6 151.7l0.4 4.9" stroke="#c8601a" stroke-width="1"/><path d="M222.9 136.3l0.6 3.7" stroke="#ffb040" stroke-width="1"/><path d="M215.4 146.5l0.7 3.1" stroke="#f89028" stroke-width="1"/><path d="M260.5 150.1l0.8 4.2" stroke="#ffb040" stroke-width="1"/><path d="M245.7 145.7l1.1 2.7" stroke="#ffb040" stroke-width="1"/><path d="M229.0 160.5l-0.2 3.0" stroke="#ffb040" stroke-width="1"/><path d="M246.7 158.0l0.2 3.1" stroke="#f89028" stroke-width="1"/><path d="M233.4 158.4l1.5 4.6" stroke="#c8601a" stroke-width="1"/><path d="M232.8 162.4l0.9 4.9" stroke="#c8601a" stroke-width="1"/><path d="M245.4 141.4l-0.5 4.9" stroke="#ffb040" stroke-width="1"/><path d="M205.0 138.2l-0.6 4.7" stroke="#f89028" stroke-width="1"/><path d="M235.3 156.7l0.5 4.4" stroke="#ffb040" stroke-width="1"/><path d="M225.9 143.4l-0.3 3.5" stroke="#ffb040" stroke-width="1"/><path d="M240.6 157.1l-1.0 2.4" stroke="#ffb040" stroke-width="1"/><path d="M250.3 157.1l-0.4 3.7" stroke="#f89028" stroke-width="1"/><path d="M225.1 142.8l-0.2 3.4" stroke="#c8601a" stroke-width="1"/><path d="M264.6 140.9l0.2 3.2" stroke="#c8601a" stroke-width="1"/><path d="M233.5 133.8l-1.6 4.6" stroke="#ffb040" stroke-width="1"/><path d="M251.5 140.1l1.3 3.5" stroke="#c8601a" stroke-width="1"/><path d="M222.3 154.9l-0.7 2.8" stroke="#ffb040" stroke-width="1"/><path d="M264.4 144.5l-1.2 4.7" stroke="#f89028" stroke-width="1"/><path d="M254.4 150.9l1.5 4.1" stroke="#f89028" stroke-width="1"/><path d="M222.4 137.2l1.0 2.3" stroke="#f89028" stroke-width="1"/><path d="M238.0 164.7l-0.8 4.7" stroke="#ffb040" stroke-width="1"/><path d="M247.7 135.8l-1.2 2.7" stroke="#f89028" stroke-width="1"/><path d="M247.5 135.1l0.3 2.9" stroke="#f89028" stroke-width="1"/><path d="M256.6 138.5l-0.4 4.3" stroke="#c8601a" stroke-width="1"/><path d="M248.8 139.6l1.3 3.0" stroke="#c8601a" stroke-width="1"/><path d="M232.0 149.5l-0.4 3.1" stroke="#ffb040" stroke-width="1"/><path d="M207.1 143.3l-0.4 2.7" stroke="#c8601a" stroke-width="1"/><path d="M267.1 146.9l0.3 3.7" stroke="#c8601a" stroke-width="1"/><path d="M221.9 153.3l1.0 4.5" stroke="#f89028" stroke-width="1"/><path d="M253.6 152.2l1.3 4.7" stroke="#f89028" stroke-width="1"/><path d="M249.7 141.0l1.4 4.3" stroke="#f89028" stroke-width="1"/><path d="M207.4 144.9l1.7 4.5" stroke="#c8601a" stroke-width="1"/><path d="M247.4 137.9l1.7 3.6" stroke="#ffb040" stroke-width="1"/><path d="M240.0 166.4l1.0 4.2" stroke="#c8601a" stroke-width="1"/><path d="M234.3 146.9l1.0 2.7" stroke="#c8601a" stroke-width="1"/><path d="M241.3 163.4l-0.3 3.7" stroke="#f89028" stroke-width="1"/><path d="M242.9 132.4l1.7 4.0" stroke="#c8601a" stroke-width="1"/><path d="M211.6 141.4l-0.7 4.1" stroke="#c8601a" stroke-width="1"/><path d="M228.6 136.1l-1.0 3.5" stroke="#f89028" stroke-width="1"/><path d="M249.1 164.7l-0.9 4.1" stroke="#ffb040" stroke-width="1"/><path d="M213.1 159.3l-0.1 4.8" stroke="#c8601a" stroke-width="1"/><path d="M222.2 162.9l0.2 2.7" stroke="#c8601a" stroke-width="1"/><path d="M226.5 132.0l-0.4 2.6" stroke="#f89028" stroke-width="1"/><path d="M209.9 134.6l-1.4 3.5" stroke="#c8601a" stroke-width="1"/><path d="M226.0 151.0l1.3 4.8" stroke="#ffb040" stroke-width="1"/><path d="M246.3 137.6l-1.0 4.7" stroke="#f89028" stroke-width="1"/><path d="M226.3 162.0l0.4 2.8" stroke="#f89028" stroke-width="1"/><path d="M210.2 135.1l-0.3 2.6" stroke="#ffb040" stroke-width="1"/><path d="M246.0 158.4l0.0 3.7" stroke="#c8601a" stroke-width="1"/><path d="M238.1 154.0l0.6 3.9" stroke="#f89028" stroke-width="1"/><path d="M256.0 146.0l-1.6 4.3" stroke="#f89028" stroke-width="1"/><path d="M260.8 151.4l-1.3 4.0" stroke="#c8601a" stroke-width="1"/><path d="M223.9 128.6l1.0 2.8" stroke="#c8601a" stroke-width="1"/><path d="M218.4 141.6l-1.4 3.4" stroke="#ffb040" stroke-width="1"/><path d="M216.0 134.7l-1.7 4.4" stroke="#ffb040" stroke-width="1"/><path d="M249.6 142.5l0.1 4.2" stroke="#c8601a" stroke-width="1"/><path d="M263.3 146.2l1.0 2.3" stroke="#f89028" stroke-width="1"/><path d="M229.1 162.8l1.5 4.6" stroke="#c8601a" stroke-width="1"/></g>
<rect width="291" height="218" filter="url(#grain)" opacity="0.28"/>
<g fill="#5c606c">
<path d="M146 141 q4 -6 8 0 q2 8 -3 14 q-6 2 -5 -14z"/>
<path d="M161 162 q8 -8 16 -6 q2 6 -6 12 q-8 2 -10 -6z"/>
<path d="M229 197 q6 -4 10 2 q0 10 -6 16 q-6 -4 -4 -18z"/>
<path d="M64 108 q6 -6 12 -2 q0 8 -6 12 q-6 -2 -6 -10z"/>
</g>
</svg><svg class="a" style="left:844px;top:579px;box-shadow:0 3px 7px rgba(0,0,0,.38)" width="286" height="214" viewBox="844 579 286 214">
<defs>
<linearGradient id="sky" x1="0" y1="0" x2="0" y2="1"><stop offset="0" stop-color="#2b67c8"/><stop offset="0.55" stop-color="#4d86d6"/><stop offset="1" stop-color="#93b5e2"/></linearGradient>
<linearGradient id="grass" x1="0" y1="0" x2="0" y2="1"><stop offset="0" stop-color="#bcc03e"/><stop offset="0.45" stop-color="#cfc636"/><stop offset="1" stop-color="#e4c82a"/></linearGradient>
<filter id="tb" x="-5%" y="-5%" width="110%" height="110%"><feGaussianBlur stdDeviation="0.9"/></filter>
</defs>
<rect x="844" y="579" width="286" height="164" fill="url(#sky)"/>
<rect x="844" y="742" width="286" height="51" fill="url(#grass)"/>
<g filter="url(#tb)"><ellipse cx="973.4" cy="771.4" rx="3.8" ry="1.6" fill="#c0c03c"/><ellipse cx="1088.5" cy="753.3" rx="3.9" ry="1.6" fill="#e6ce38"/><ellipse cx="1019.6" cy="753.1" rx="3.2" ry="1.6" fill="#c0c03c"/><ellipse cx="869.9" cy="783.7" rx="4.5" ry="1.6" fill="#a8b840"/><ellipse cx="1014.3" cy="763.4" rx="4.6" ry="1.6" fill="#c0c03c"/><ellipse cx="1020.1" cy="751.7" rx="5.3" ry="1.6" fill="#cfc53a"/><ellipse cx="862.1" cy="745.7" rx="4.4" ry="1.6" fill="#b0bc42"/><ellipse cx="1066.5" cy="760.0" rx="5.4" ry="1.6" fill="#e6ce38"/><ellipse cx="992.5" cy="775.4" rx="2.0" ry="1.6" fill="#c0c03c"/><ellipse cx="868.3" cy="776.1" rx="6.0" ry="1.6" fill="#c0c03c"/><ellipse cx="1128.8" cy="785.2" rx="3.0" ry="1.6" fill="#a8b840"/><ellipse cx="1060.8" cy="769.1" rx="2.3" ry="1.6" fill="#cfc53a"/><ellipse cx="1063.2" cy="763.6" rx="3.5" ry="1.6" fill="#dec832"/><ellipse cx="1118.0" cy="785.5" rx="2.9" ry="1.6" fill="#cfc53a"/><ellipse cx="1109.1" cy="746.6" rx="5.9" ry="1.6" fill="#c0c03c"/><ellipse cx="957.7" cy="747.6" rx="2.8" ry="1.6" fill="#a8b840"/><ellipse cx="1037.0" cy="760.5" rx="3.3" ry="1.6" fill="#dec832"/><ellipse cx="1119.7" cy="781.1" rx="2.5" ry="1.6" fill="#cfc53a"/><ellipse cx="1046.2" cy="744.5" rx="5.2" ry="1.6" fill="#c0c03c"/><ellipse cx="894.8" cy="771.4" rx="4.0" ry="1.6" fill="#c0c03c"/><ellipse cx="1125.8" cy="781.7" rx="4.6" ry="1.6" fill="#c0c03c"/><ellipse cx="877.3" cy="764.6" rx="2.0" ry="1.6" fill="#b0bc42"/><ellipse cx="1091.2" cy="791.8" rx="3.2" ry="1.6" fill="#e6ce38"/><ellipse cx="1097.1" cy="754.3" rx="6.0" ry="1.6" fill="#c0c03c"/><ellipse cx="1016.2" cy="772.3" rx="6.0" ry="1.6" fill="#cfc53a"/><ellipse cx="905.0" cy="756.7" rx="3.3" ry="1.6" fill="#e6ce38"/><ellipse cx="928.7" cy="747.6" rx="2.8" ry="1.6" fill="#cfc53a"/><ellipse cx="1026.1" cy="744.8" rx="3.5" ry="1.6" fill="#dec832"/><ellipse cx="973.6" cy="791.0" rx="5.3" ry="1.6" fill="#c0c03c"/><ellipse cx="882.8" cy="762.9" rx="2.6" ry="1.6" fill="#a8b840"/><ellipse cx="1103.8" cy="784.1" rx="4.9" ry="1.6" fill="#b0bc42"/><ellipse cx="889.3" cy="774.8" rx="2.8" ry="1.6" fill="#e6ce38"/><ellipse cx="1115.7" cy="787.2" rx="2.3" ry="1.6" fill="#e6ce38"/><ellipse cx="857.6" cy="749.3" rx="5.9" ry="1.6" fill="#e6ce38"/><ellipse cx="912.2" cy="778.5" rx="3.7" ry="1.6" fill="#dec832"/><ellipse cx="1102.8" cy="768.1" rx="2.7" ry="1.6" fill="#e6ce38"/><ellipse cx="1050.0" cy="747.4" rx="3.9" ry="1.6" fill="#b0bc42"/><ellipse cx="1030.9" cy="774.2" rx="3.1" ry="1.6" fill="#cfc53a"/><ellipse cx="1106.4" cy="754.0" rx="2.3" ry="1.6" fill="#cfc53a"/><ellipse cx="961.7" cy="756.2" rx="2.7" ry="1.6" fill="#cfc53a"/><ellipse cx="949.5" cy="772.0" rx="2.4" ry="1.6" fill="#b0bc42"/><ellipse cx="883.6" cy="766.1" rx="4.6" ry="1.6" fill="#dec832"/><ellipse cx="1041.7" cy="772.6" rx="4.4" ry="1.6" fill="#b0bc42"/><ellipse cx="1108.1" cy="767.3" rx="4.8" ry="1.6" fill="#dec832"/><ellipse cx="1119.4" cy="745.0" rx="2.3" ry="1.6" fill="#a8b840"/><ellipse cx="863.2" cy="759.2" rx="6.0" ry="1.6" fill="#b0bc42"/><ellipse cx="865.5" cy="770.8" rx="2.2" ry="1.6" fill="#a8b840"/><ellipse cx="1111.8" cy="780.1" rx="5.2" ry="1.6" fill="#b0bc42"/><ellipse cx="1105.7" cy="761.2" rx="3.9" ry="1.6" fill="#a8b840"/><ellipse cx="866.2" cy="786.0" rx="5.5" ry="1.6" fill="#cfc53a"/><ellipse cx="1007.8" cy="774.6" rx="3.5" ry="1.6" fill="#c0c03c"/><ellipse cx="847.6" cy="747.5" rx="4.6" ry="1.6" fill="#cfc53a"/><ellipse cx="1128.1" cy="787.1" rx="3.3" ry="1.6" fill="#a8b840"/><ellipse cx="1111.2" cy="778.0" rx="3.8" ry="1.6" fill="#c0c03c"/><ellipse cx="1083.8" cy="748.1" rx="2.1" ry="1.6" fill="#e6ce38"/><ellipse cx="1016.0" cy="767.6" rx="5.8" ry="1.6" fill="#b0bc42"/><ellipse cx="876.3" cy="782.2" rx="5.7" ry="1.6" fill="#a8b840"/><ellipse cx="917.2" cy="744.6" rx="2.6" ry="1.6" fill="#dec832"/><ellipse cx="1019.0" cy="769.4" rx="4.6" ry="1.6" fill="#dec832"/><ellipse cx="970.4" cy="787.7" rx="3.6" ry="1.6" fill="#dec832"/><ellipse cx="915.7" cy="775.1" rx="5.5" ry="1.6" fill="#b0bc42"/><ellipse cx="953.9" cy="772.6" rx="2.8" ry="1.6" fill="#dec832"/><ellipse cx="882.5" cy="761.2" rx="4.8" ry="1.6" fill="#cfc53a"/><ellipse cx="1115.7" cy="757.6" rx="2.5" ry="1.6" fill="#b0bc42"/><ellipse cx="978.8" cy="789.4" rx="3.5" ry="1.6" fill="#c0c03c"/><ellipse cx="992.7" cy="776.9" rx="5.4" ry="1.6" fill="#a8b840"/><ellipse cx="1124.9" cy="766.2" rx="5.3" ry="1.6" fill="#cfc53a"/><ellipse cx="923.5" cy="773.8" rx="4.8" ry="1.6" fill="#a8b840"/><ellipse cx="1007.2" cy="759.1" rx="2.1" ry="1.6" fill="#e6ce38"/><ellipse cx="882.9" cy="766.3" rx="5.1" ry="1.6" fill="#cfc53a"/><ellipse cx="920.2" cy="782.2" rx="5.9" ry="1.6" fill="#cfc53a"/><ellipse cx="877.0" cy="749.3" rx="4.6" ry="1.6" fill="#e6ce38"/><ellipse cx="1074.9" cy="791.0" rx="2.8" ry="1.6" fill="#a8b840"/><ellipse cx="1079.6" cy="756.5" rx="2.0" ry="1.6" fill="#a8b840"/><ellipse cx="979.0" cy="779.0" rx="2.9" ry="1.6" fill="#b0bc42"/><ellipse cx="1066.7" cy="770.4" rx="4.0" ry="1.6" fill="#e6ce38"/><ellipse cx="1129.1" cy="751.8" rx="5.6" ry="1.6" fill="#a8b840"/><ellipse cx="868.9" cy="789.7" rx="3.6" ry="1.6" fill="#a8b840"/><ellipse cx="972.8" cy="753.6" rx="3.5" ry="1.6" fill="#cfc53a"/><ellipse cx="1006.7" cy="787.1" rx="3.9" ry="1.6" fill="#dec832"/><ellipse cx="1030.3" cy="754.0" rx="5.5" ry="1.6" fill="#a8b840"/><ellipse cx="1072.3" cy="789.3" rx="2.9" ry="1.6" fill="#cfc53a"/><ellipse cx="1101.4" cy="792.0" rx="4.1" ry="1.6" fill="#dec832"/><ellipse cx="1070.2" cy="759.7" rx="5.4" ry="1.6" fill="#a8b840"/><ellipse cx="943.7" cy="748.1" rx="3.4" ry="1.6" fill="#c0c03c"/><ellipse cx="964.5" cy="757.5" rx="2.9" ry="1.6" fill="#cfc53a"/><ellipse cx="1092.1" cy="765.0" rx="2.7" ry="1.6" fill="#cfc53a"/><ellipse cx="939.8" cy="782.6" rx="3.9" ry="1.6" fill="#b0bc42"/><ellipse cx="1129.9" cy="788.1" rx="5.4" ry="1.6" fill="#e6ce38"/><ellipse cx="1041.2" cy="790.3" rx="4.3" ry="1.6" fill="#c0c03c"/><ellipse cx="1041.1" cy="781.1" rx="4.1" ry="1.6" fill="#c0c03c"/><ellipse cx="927.0" cy="779.7" rx="2.7" ry="1.6" fill="#a8b840"/><ellipse cx="991.1" cy="788.5" rx="3.2" ry="1.6" fill="#dec832"/><ellipse cx="953.0" cy="785.4" rx="2.8" ry="1.6" fill="#e6ce38"/><ellipse cx="1087.3" cy="791.5" rx="3.1" ry="1.6" fill="#e6ce38"/><ellipse cx="986.3" cy="764.1" rx="4.0" ry="1.6" fill="#cfc53a"/><ellipse cx="1017.1" cy="745.4" rx="4.1" ry="1.6" fill="#cfc53a"/><ellipse cx="958.6" cy="783.3" rx="2.5" ry="1.6" fill="#e6ce38"/><ellipse cx="870.7" cy="752.2" rx="3.8" ry="1.6" fill="#e6ce38"/><ellipse cx="1107.3" cy="783.2" rx="3.1" ry="1.6" fill="#c0c03c"/><ellipse cx="979.3" cy="750.2" rx="5.6" ry="1.6" fill="#c0c03c"/><ellipse cx="1111.6" cy="789.1" rx="3.3" ry="1.6" fill="#e6ce38"/><ellipse cx="898.8" cy="774.3" rx="2.5" ry="1.6" fill="#dec832"/><ellipse cx="1066.9" cy="745.1" rx="2.6" ry="1.6" fill="#b0bc42"/><ellipse cx="847.4" cy="757.9" rx="3.4" ry="1.6" fill="#a8b840"/><ellipse cx="1021.3" cy="749.1" rx="4.3" ry="1.6" fill="#a8b840"/><ellipse cx="1087.6" cy="774.6" rx="2.8" ry="1.6" fill="#a8b840"/><ellipse cx="995.7" cy="765.4" rx="4.5" ry="1.6" fill="#c0c03c"/><ellipse cx="1080.0" cy="774.2" rx="2.8" ry="1.6" fill="#e6ce38"/><ellipse cx="1024.6" cy="775.3" rx="2.9" ry="1.6" fill="#e6ce38"/><ellipse cx="999.3" cy="772.7" rx="2.9" ry="1.6" fill="#b0bc42"/><ellipse cx="1055.9" cy="783.7" rx="3.3" ry="1.6" fill="#b0bc42"/><ellipse cx="934.1" cy="789.2" rx="5.1" ry="1.6" fill="#b0bc42"/><ellipse cx="899.6" cy="748.7" rx="2.5" ry="1.6" fill="#b0bc42"/><ellipse cx="869.2" cy="763.0" rx="5.3" ry="1.6" fill="#c0c03c"/><ellipse cx="964.6" cy="782.7" rx="2.8" ry="1.6" fill="#b0bc42"/><ellipse cx="1023.6" cy="783.1" rx="2.8" ry="1.6" fill="#cfc53a"/><ellipse cx="1039.2" cy="788.7" rx="2.5" ry="1.6" fill="#dec832"/><ellipse cx="988.6" cy="781.1" rx="6.0" ry="1.6" fill="#e6ce38"/><ellipse cx="1082.2" cy="783.3" rx="2.4" ry="1.6" fill="#c0c03c"/><ellipse cx="854.7" cy="771.0" rx="5.6" ry="1.6" fill="#e6ce38"/><ellipse cx="981.6" cy="753.3" rx="2.8" ry="1.6" fill="#cfc53a"/><ellipse cx="1084.3" cy="792.5" rx="2.4" ry="1.6" fill="#a8b840"/><ellipse cx="861.7" cy="790.6" rx="2.3" ry="1.6" fill="#c0c03c"/><ellipse cx="871.7" cy="763.2" rx="4.1" ry="1.6" fill="#c0c03c"/><ellipse cx="967.0" cy="773.4" rx="4.5" ry="1.6" fill="#cfc53a"/><ellipse cx="855.7" cy="753.8" rx="3.8" ry="1.6" fill="#c0c03c"/><ellipse cx="1055.4" cy="763.9" rx="4.4" ry="1.6" fill="#b0bc42"/><ellipse cx="871.1" cy="782.8" rx="5.6" ry="1.6" fill="#dec832"/><ellipse cx="1073.3" cy="778.5" rx="5.8" ry="1.6" fill="#a8b840"/><ellipse cx="1006.9" cy="753.4" rx="5.9" ry="1.6" fill="#e6ce38"/><ellipse cx="1074.2" cy="756.7" rx="5.0" ry="1.6" fill="#cfc53a"/><ellipse cx="1066.5" cy="783.9" rx="2.5" ry="1.6" fill="#c0c03c"/><ellipse cx="938.4" cy="770.4" rx="5.1" ry="1.6" fill="#dec832"/><ellipse cx="1062.9" cy="763.9" rx="2.7" ry="1.6" fill="#a8b840"/><ellipse cx="1072.0" cy="758.8" rx="2.0" ry="1.6" fill="#cfc53a"/><ellipse cx="945.7" cy="775.3" rx="2.2" ry="1.6" fill="#e6ce38"/><ellipse cx="922.1" cy="791.1" rx="3.4" ry="1.6" fill="#dec832"/><ellipse cx="1032.7" cy="771.9" rx="2.3" ry="1.6" fill="#e6ce38"/><ellipse cx="991.2" cy="768.4" rx="4.8" ry="1.6" fill="#b0bc42"/><ellipse cx="1061.9" cy="792.0" rx="2.5" ry="1.6" fill="#cfc53a"/><ellipse cx="874.9" cy="755.6" rx="3.6" ry="1.6" fill="#c0c03c"/><ellipse cx="858.4" cy="753.6" rx="2.0" ry="1.6" fill="#c0c03c"/><ellipse cx="917.9" cy="757.5" rx="4.2" ry="1.6" fill="#dec832"/><ellipse cx="989.2" cy="791.4" rx="5.4" ry="1.6" fill="#e6ce38"/><ellipse cx="872.5" cy="765.8" rx="2.3" ry="1.6" fill="#a8b840"/><ellipse cx="1014.9" cy="781.2" rx="3.5" ry="1.6" fill="#cfc53a"/><ellipse cx="1112.4" cy="762.9" rx="5.4" ry="1.6" fill="#b0bc42"/><ellipse cx="999.0" cy="773.2" rx="5.8" ry="1.6" fill="#c0c03c"/><ellipse cx="964.3" cy="769.8" rx="3.2" ry="1.6" fill="#e6ce38"/><ellipse cx="995.7" cy="767.7" rx="4.2" ry="1.6" fill="#dec832"/><ellipse cx="925.1" cy="779.1" rx="2.1" ry="1.6" fill="#dec832"/><ellipse cx="1064.9" cy="772.7" rx="2.6" ry="1.6" fill="#a8b840"/><ellipse cx="1059.8" cy="763.1" rx="5.0" ry="1.6" fill="#dec832"/><ellipse cx="858.3" cy="792.4" rx="2.3" ry="1.6" fill="#dec832"/><ellipse cx="1103.0" cy="765.0" rx="3.0" ry="1.6" fill="#c0c03c"/><ellipse cx="1060.1" cy="746.2" rx="5.7" ry="1.6" fill="#cfc53a"/><ellipse cx="1050.7" cy="766.9" rx="4.4" ry="1.6" fill="#b0bc42"/><ellipse cx="876.9" cy="774.6" rx="2.5" ry="1.6" fill="#c0c03c"/><ellipse cx="1090.3" cy="761.5" rx="2.5" ry="1.6" fill="#b0bc42"/><ellipse cx="970.7" cy="776.7" rx="4.4" ry="1.6" fill="#c0c03c"/><ellipse cx="1026.9" cy="777.4" rx="5.1" ry="1.6" fill="#dec832"/><ellipse cx="995.8" cy="792.9" rx="4.9" ry="1.6" fill="#dec832"/><ellipse cx="912.2" cy="749.6" rx="5.1" ry="1.6" fill="#dec832"/><ellipse cx="1022.7" cy="761.6" rx="4.4" ry="1.6" fill="#dec832"/><ellipse cx="1051.4" cy="778.3" rx="4.5" ry="1.6" fill="#b0bc42"/><ellipse cx="1059.5" cy="753.3" rx="4.0" ry="1.6" fill="#b0bc42"/><ellipse cx="1030.7" cy="753.6" rx="2.2" ry="1.6" fill="#a8b840"/><ellipse cx="861.4" cy="757.3" rx="2.1" ry="1.6" fill="#c0c03c"/><ellipse cx="854.9" cy="754.9" rx="2.3" ry="1.6" fill="#dec832"/><ellipse cx="868.7" cy="777.1" rx="2.9" ry="1.6" fill="#e6ce38"/><ellipse cx="1124.7" cy="767.7" rx="2.8" ry="1.6" fill="#dec832"/><ellipse cx="942.3" cy="780.5" rx="5.2" ry="1.6" fill="#cfc53a"/><ellipse cx="971.9" cy="784.3" rx="3.8" ry="1.6" fill="#b0bc42"/><ellipse cx="1057.7" cy="763.1" rx="3.5" ry="1.6" fill="#b0bc42"/><ellipse cx="1030.9" cy="792.5" rx="3.2" ry="1.6" fill="#dec832"/><ellipse cx="1061.1" cy="784.5" rx="3.7" ry="1.6" fill="#b0bc42"/><ellipse cx="949.6" cy="748.8" rx="2.3" ry="1.6" fill="#dec832"/><ellipse cx="867.7" cy="771.6" rx="5.3" ry="1.6" fill="#c0c03c"/><ellipse cx="976.6" cy="784.4" rx="2.3" ry="1.6" fill="#cfc53a"/><ellipse cx="905.0" cy="776.4" rx="4.8" ry="1.6" fill="#cfc53a"/><ellipse cx="985.5" cy="781.4" rx="3.1" ry="1.6" fill="#dec832"/><ellipse cx="884.9" cy="761.5" rx="3.3" ry="1.6" fill="#a8b840"/><ellipse cx="1103.2" cy="759.8" rx="4.3" ry="1.6" fill="#c0c03c"/><ellipse cx="1106.7" cy="790.1" rx="3.8" ry="1.6" fill="#dec832"/><ellipse cx="1073.7" cy="758.9" rx="2.9" ry="1.6" fill="#dec832"/><ellipse cx="1120.8" cy="779.8" rx="3.0" ry="1.6" fill="#e6ce38"/><ellipse cx="947.4" cy="761.9" rx="4.7" ry="1.6" fill="#dec832"/><ellipse cx="1011.3" cy="783.0" rx="4.3" ry="1.6" fill="#a8b840"/><ellipse cx="1072.0" cy="770.5" rx="4.3" ry="1.6" fill="#e6ce38"/><ellipse cx="894.5" cy="781.2" rx="5.2" ry="1.6" fill="#dec832"/><ellipse cx="907.3" cy="746.8" rx="4.3" ry="1.6" fill="#b0bc42"/><ellipse cx="1120.4" cy="775.9" rx="2.3" ry="1.6" fill="#c0c03c"/><ellipse cx="1000.4" cy="782.6" rx="3.3" ry="1.6" fill="#cfc53a"/><ellipse cx="922.3" cy="749.2" rx="2.3" ry="1.6" fill="#dec832"/><ellipse cx="1025.4" cy="751.1" rx="5.3" ry="1.6" fill="#a8b840"/><ellipse cx="964.7" cy="778.9" rx="5.1" ry="1.6" fill="#c0c03c"/><ellipse cx="993.2" cy="781.5" rx="3.4" ry="1.6" fill="#c0c03c"/><ellipse cx="1074.9" cy="760.3" rx="4.0" ry="1.6" fill="#b0bc42"/><ellipse cx="997.7" cy="779.3" rx="4.5" ry="1.6" fill="#a8b840"/><ellipse cx="857.2" cy="781.1" rx="3.4" ry="1.6" fill="#a8b840"/><ellipse cx="845.1" cy="762.5" rx="5.6" ry="1.6" fill="#cfc53a"/><ellipse cx="1117.9" cy="775.4" rx="3.4" ry="1.6" fill="#e6ce38"/><ellipse cx="846.9" cy="749.4" rx="5.7" ry="1.6" fill="#c0c03c"/><ellipse cx="914.3" cy="752.0" rx="3.5" ry="1.6" fill="#a8b840"/><ellipse cx="891.9" cy="754.0" rx="4.1" ry="1.6" fill="#c0c03c"/><ellipse cx="922.4" cy="787.4" rx="3.2" ry="1.6" fill="#c0c03c"/><ellipse cx="876.8" cy="775.8" rx="5.6" ry="1.6" fill="#b0bc42"/><ellipse cx="1059.4" cy="744.8" rx="5.6" ry="1.6" fill="#c0c03c"/><ellipse cx="854.4" cy="749.3" rx="3.4" ry="1.6" fill="#b0bc42"/><ellipse cx="1012.3" cy="773.4" rx="4.4" ry="1.6" fill="#c0c03c"/><ellipse cx="908.1" cy="753.1" rx="3.6" ry="1.6" fill="#dec832"/><ellipse cx="1104.5" cy="789.9" rx="4.2" ry="1.6" fill="#a8b840"/><ellipse cx="1077.7" cy="767.5" rx="3.9" ry="1.6" fill="#dec832"/><ellipse cx="959.1" cy="790.8" rx="4.2" ry="1.6" fill="#a8b840"/><ellipse cx="1117.7" cy="767.6" rx="3.6" ry="1.6" fill="#b0bc42"/><ellipse cx="906.2" cy="750.6" rx="5.9" ry="1.6" fill="#c0c03c"/><ellipse cx="1071.3" cy="781.9" rx="4.6" ry="1.6" fill="#cfc53a"/><ellipse cx="912.0" cy="744.5" rx="5.6" ry="1.6" fill="#c0c03c"/><ellipse cx="972.7" cy="756.1" rx="4.4" ry="1.6" fill="#c0c03c"/><ellipse cx="889.0" cy="751.7" rx="2.6" ry="1.6" fill="#dec832"/><ellipse cx="1103.7" cy="783.7" rx="4.5" ry="1.6" fill="#b0bc42"/><ellipse cx="1128.0" cy="757.1" rx="2.2" ry="1.6" fill="#e6ce38"/><ellipse cx="1007.6" cy="752.7" rx="5.3" ry="1.6" fill="#b0bc42"/><ellipse cx="1086.0" cy="784.3" rx="3.4" ry="1.6" fill="#cfc53a"/><ellipse cx="1019.9" cy="769.9" rx="4.8" ry="1.6" fill="#c0c03c"/><ellipse cx="867.7" cy="780.7" rx="5.4" ry="1.6" fill="#e6ce38"/><ellipse cx="930.8" cy="782.7" rx="2.8" ry="1.6" fill="#c0c03c"/><ellipse cx="1039.1" cy="782.3" rx="2.8" ry="1.6" fill="#c0c03c"/><ellipse cx="999.4" cy="769.8" rx="5.8" ry="1.6" fill="#b0bc42"/><ellipse cx="1119.7" cy="759.5" rx="2.3" ry="1.6" fill="#c0c03c"/><ellipse cx="931.4" cy="766.9" rx="2.3" ry="1.6" fill="#a8b840"/><ellipse cx="865.3" cy="750.9" rx="3.6" ry="1.6" fill="#a8b840"/><ellipse cx="976.1" cy="791.4" rx="4.6" ry="1.6" fill="#cfc53a"/><ellipse cx="847.5" cy="762.5" rx="3.9" ry="1.6" fill="#a8b840"/><ellipse cx="927.9" cy="749.6" rx="5.4" ry="1.6" fill="#cfc53a"/><ellipse cx="1085.5" cy="779.2" rx="2.6" ry="1.6" fill="#e6ce38"/><ellipse cx="1023.5" cy="789.9" rx="3.2" ry="1.6" fill="#a8b840"/><ellipse cx="940.5" cy="763.2" rx="2.3" ry="1.6" fill="#a8b840"/><ellipse cx="898.0" cy="762.5" rx="3.3" ry="1.6" fill="#cfc53a"/><ellipse cx="1114.3" cy="771.6" rx="4.6" ry="1.6" fill="#a8b840"/><ellipse cx="971.8" cy="762.7" rx="2.6" ry="1.6" fill="#cfc53a"/><ellipse cx="871.0" cy="777.2" rx="2.7" ry="1.6" fill="#a8b840"/><ellipse cx="899.2" cy="745.8" rx="4.4" ry="1.6" fill="#c0c03c"/><ellipse cx="869.8" cy="755.1" rx="5.9" ry="1.6" fill="#b0bc42"/><ellipse cx="968.1" cy="781.8" rx="5.7" ry="1.6" fill="#dec832"/><ellipse cx="966.1" cy="769.1" rx="2.8" ry="1.6" fill="#a8b840"/><ellipse cx="886.3" cy="777.9" rx="3.3" ry="1.6" fill="#c0c03c"/><ellipse cx="961.9" cy="744.8" rx="4.5" ry="1.6" fill="#c0c03c"/><ellipse cx="934.9" cy="782.6" rx="4.6" ry="1.6" fill="#b0bc42"/><ellipse cx="1018.1" cy="744.9" rx="2.8" ry="1.6" fill="#dec832"/><ellipse cx="931.7" cy="765.6" rx="3.5" ry="1.6" fill="#e6ce38"/><ellipse cx="989.7" cy="782.6" rx="4.4" ry="1.6" fill="#cfc53a"/><ellipse cx="889.3" cy="781.6" rx="4.2" ry="1.6" fill="#dec832"/><ellipse cx="944.8" cy="768.5" rx="4.3" ry="1.6" fill="#b0bc42"/><ellipse cx="900.7" cy="789.7" rx="4.8" ry="1.6" fill="#a8b840"/><ellipse cx="1111.7" cy="771.8" rx="4.5" ry="1.6" fill="#cfc53a"/><ellipse cx="900.6" cy="748.1" rx="3.9" ry="1.6" fill="#b0bc42"/><ellipse cx="963.4" cy="760.3" rx="5.7" ry="1.6" fill="#cfc53a"/><ellipse cx="947.3" cy="766.7" rx="3.8" ry="1.6" fill="#cfc53a"/></g>
<g filter="url(#tb)"><path d="M865.7 679.5 L870.0 668.0 L873.0 660.6 L880.0 648.0 L885.7 639.6 L891.0 632.0 L898.3 628.0 L905.0 620.0 L913.0 616.5 L920.0 610.0 L927.7 606.0 L935.0 599.0 L944.5 595.5 L955.0 593.0 L967.6 594.4 L980.0 596.0 L992.8 599.7 L1005.0 604.0 L1018.0 610.2 L1030.0 613.0 L1043.0 618.6 L1055.0 622.0 L1068.4 629.0 L1078.0 634.0 L1085.0 641.7 L1089.0 650.0 L1091.4 658.5 L1093.0 667.0 L1093.5 675.3 L1100.0 682.0 L1106.0 690.0 L1108.0 698.0 L1107.2 706.8 L1105.0 715.0 L1102.0 723.6 L1085.0 730.0 L1070.4 732.0 L1055.0 733.0 L1039.0 732.0 L1025.0 733.0 L1009.6 732.0 L1001.2 741.0 L982.3 741.0 L967.6 732.0 L950.0 734.0 L934.0 732.0 L918.0 733.0 L902.5 732.0 L890.0 731.0 L877.3 727.8 L872.0 715.0 L871.0 702.6 L866.0 690.0Z" fill="#d68c34"/><circle cx="865.7" cy="676.4" r="2.2" fill="#dc852a"/><circle cx="866.0" cy="677.0" r="3.1" fill="#784619"/><circle cx="866.3" cy="673.4" r="4.4" fill="#b5490c"/><circle cx="867.8" cy="674.8" r="2.1" fill="#d88025"/><circle cx="868.9" cy="666.2" r="4.0" fill="#eabb50"/><circle cx="870.5" cy="662.2" r="3.8" fill="#be5012"/><circle cx="871.6" cy="665.4" r="3.2" fill="#d87f22"/><circle cx="869.5" cy="667.3" r="2.2" fill="#e6b84d"/><circle cx="880.0" cy="648.7" r="4.5" fill="#ecbc4d"/><circle cx="873.5" cy="660.3" r="3.1" fill="#de7528"/><circle cx="878.1" cy="654.8" r="2.9" fill="#ecbc4e"/><circle cx="876.9" cy="654.7" r="4.4" fill="#bc4d0e"/><circle cx="881.2" cy="648.1" r="4.5" fill="#ec9030"/><circle cx="882.9" cy="642.8" r="3.2" fill="#e5b444"/><circle cx="881.7" cy="643.0" r="3.8" fill="#f0c050"/><circle cx="880.3" cy="647.5" r="4.2" fill="#c55414"/><circle cx="891.4" cy="635.0" r="3.0" fill="#e7b644"/><circle cx="885.6" cy="637.2" r="3.2" fill="#e38524"/><circle cx="885.4" cy="639.0" r="3.4" fill="#d05d1d"/><circle cx="891.4" cy="633.3" r="3.1" fill="#d35f1e"/><circle cx="893.5" cy="628.8" r="3.6" fill="#784619"/><circle cx="898.0" cy="626.5" r="3.5" fill="#fac955"/><circle cx="890.5" cy="630.8" r="2.1" fill="#cf5a19"/><circle cx="891.1" cy="630.8" r="2.9" fill="#f6c452"/><circle cx="904.8" cy="620.0" r="2.2" fill="#f5c34e"/><circle cx="903.2" cy="622.8" r="3.3" fill="#fac854"/><circle cx="901.5" cy="626.8" r="3.9" fill="#fcca57"/><circle cx="904.9" cy="620.1" r="2.9" fill="#ffd15c"/><circle cx="906.9" cy="619.2" r="3.6" fill="#dc6b19"/><circle cx="912.5" cy="616.0" r="3.3" fill="#edba45"/><circle cx="914.1" cy="616.4" r="2.5" fill="#f08f2a"/><circle cx="912.4" cy="616.6" r="4.4" fill="#efbd47"/><circle cx="913.4" cy="613.8" r="3.6" fill="#e67421"/><circle cx="918.7" cy="611.2" r="4.1" fill="#fbc851"/><circle cx="919.5" cy="611.3" r="2.4" fill="#e6841e"/><circle cx="920.5" cy="610.9" r="3.0" fill="#cf5613"/><circle cx="919.8" cy="607.9" r="4.3" fill="#ec7925"/><circle cx="928.3" cy="607.3" r="2.9" fill="#da6712"/><circle cx="922.0" cy="610.5" r="3.3" fill="#eb8922"/><circle cx="925.2" cy="605.7" r="2.7" fill="#ffcf58"/><circle cx="930.3" cy="605.1" r="2.2" fill="#fc9932"/><circle cx="933.6" cy="601.6" r="4.3" fill="#d15712"/><circle cx="929.6" cy="602.1" r="2.5" fill="#7a481b"/><circle cx="928.9" cy="605.7" r="3.4" fill="#ffcd56"/><circle cx="940.0" cy="598.2" r="4.2" fill="#7c4a1d"/><circle cx="938.7" cy="598.1" r="3.4" fill="#eb7621"/><circle cx="940.0" cy="598.3" r="2.5" fill="#ffd057"/><circle cx="940.0" cy="598.9" r="3.7" fill="#fa962e"/><circle cx="952.7" cy="593.1" r="3.0" fill="#ffcc52"/><circle cx="944.2" cy="593.6" r="3.7" fill="#f57f29"/><circle cx="950.7" cy="592.9" r="2.3" fill="#d8751b"/><circle cx="948.6" cy="596.5" r="4.1" fill="#ffcd54"/><circle cx="967.1" cy="594.1" r="2.9" fill="#ffcc52"/><circle cx="955.5" cy="592.8" r="2.0" fill="#ffd55b"/><circle cx="960.6" cy="591.9" r="4.3" fill="#fac54b"/><circle cx="955.1" cy="594.7" r="2.5" fill="#f69632"/><circle cx="976.8" cy="594.3" r="4.3" fill="#de7b22"/><circle cx="966.9" cy="595.3" r="3.1" fill="#f5c147"/><circle cx="976.7" cy="593.8" r="4.1" fill="#79471a"/><circle cx="972.6" cy="595.3" r="4.3" fill="#f9c54b"/><circle cx="981.4" cy="597.9" r="4.4" fill="#f9c54c"/><circle cx="981.8" cy="596.0" r="3.9" fill="#ffd157"/><circle cx="987.7" cy="599.7" r="4.5" fill="#624921"/><circle cx="989.6" cy="597.5" r="3.2" fill="#ffb03d"/><circle cx="1002.5" cy="603.2" r="4.1" fill="#ffce56"/><circle cx="995.4" cy="599.9" r="2.5" fill="#e6842c"/><circle cx="996.5" cy="602.2" r="4.1" fill="#765d35"/><circle cx="1000.9" cy="601.5" r="2.2" fill="#e6852d"/><circle cx="1018.0" cy="610.8" r="2.1" fill="#f5c24d"/><circle cx="1009.8" cy="608.6" r="4.4" fill="#e69928"/><circle cx="1016.8" cy="609.4" r="2.0" fill="#fdca54"/><circle cx="1009.3" cy="604.7" r="3.9" fill="#f3c048"/><circle cx="1020.1" cy="610.2" r="2.7" fill="#f5a838"/><circle cx="1030.9" cy="611.5" r="4.2" fill="#d67823"/><circle cx="1028.1" cy="612.3" r="2.7" fill="#e29527"/><circle cx="1028.8" cy="612.6" r="3.1" fill="#ce701b"/><circle cx="1042.8" cy="618.4" r="4.0" fill="#775e36"/><circle cx="1039.2" cy="617.0" r="3.7" fill="#e6b542"/><circle cx="1031.1" cy="615.1" r="2.9" fill="#f3a739"/><circle cx="1030.4" cy="612.1" r="2.7" fill="#f7ab3d"/><circle cx="1055.8" cy="620.1" r="3.3" fill="#d08d36"/><circle cx="1054.1" cy="620.3" r="3.9" fill="#f6c555"/><circle cx="1054.7" cy="621.4" r="3.2" fill="#ce8637"/><circle cx="1049.4" cy="621.2" r="2.8" fill="#987641"/><circle cx="1060.7" cy="624.2" r="2.7" fill="#b57f42"/><circle cx="1062.4" cy="624.6" r="3.2" fill="#a87336"/><circle cx="1069.9" cy="626.9" r="3.1" fill="#cb8934"/><circle cx="1061.8" cy="626.4" r="2.2" fill="#dcac57"/><circle cx="1075.2" cy="630.2" r="4.1" fill="#ca8538"/><circle cx="1071.9" cy="632.3" r="3.0" fill="#d0a14d"/><circle cx="1074.6" cy="633.3" r="3.0" fill="#c39541"/><circle cx="1074.5" cy="634.2" r="4.1" fill="#c69744"/><circle cx="1084.6" cy="638.6" r="2.9" fill="#cea14f"/><circle cx="1080.2" cy="635.6" r="4.1" fill="#bf913e"/><circle cx="1083.0" cy="642.2" r="2.6" fill="#cb9e4c"/><circle cx="1081.3" cy="637.6" r="3.1" fill="#7a6139"/><circle cx="1089.2" cy="648.7" r="3.4" fill="#c28037"/><circle cx="1087.1" cy="643.7" r="4.2" fill="#9b682f"/><circle cx="1086.3" cy="644.8" r="3.8" fill="#876736"/><circle cx="1086.8" cy="647.4" r="3.0" fill="#be9140"/><circle cx="1089.2" cy="651.9" r="3.4" fill="#917141"/><circle cx="1088.6" cy="652.6" r="2.2" fill="#b88c3c"/><circle cx="1089.2" cy="654.0" r="2.5" fill="#6f562e"/><circle cx="1090.9" cy="652.1" r="2.7" fill="#be8031"/><circle cx="1091.8" cy="664.1" r="3.3" fill="#916129"/><circle cx="1090.8" cy="660.4" r="3.1" fill="#ab6a23"/><circle cx="1092.3" cy="660.4" r="3.2" fill="#a96821"/><circle cx="1093.7" cy="663.1" r="4.1" fill="#92622a"/><circle cx="1091.7" cy="670.7" r="2.3" fill="#b17529"/><circle cx="1091.4" cy="672.7" r="2.6" fill="#77592a"/><circle cx="1093.4" cy="671.9" r="3.9" fill="#b78d40"/><circle cx="1093.6" cy="670.9" r="2.6" fill="#b4752f"/><circle cx="1095.3" cy="679.2" r="3.6" fill="#bb8136"/><circle cx="1094.0" cy="678.7" r="3.8" fill="#ac8237"/><circle cx="1096.3" cy="677.2" r="2.2" fill="#b98f44"/><circle cx="1098.4" cy="679.6" r="2.8" fill="#b1762b"/><circle cx="1099.2" cy="683.4" r="2.2" fill="#91632e"/><circle cx="1103.4" cy="688.0" r="2.7" fill="#ae722f"/><circle cx="1101.7" cy="684.9" r="3.0" fill="#936531"/><circle cx="1098.4" cy="682.8" r="3.0" fill="#946631"/><circle cx="1107.7" cy="692.9" r="2.3" fill="#a98139"/><circle cx="1105.4" cy="694.4" r="3.9" fill="#775e36"/><circle cx="1108.8" cy="697.7" r="3.1" fill="#a47c35"/><circle cx="1106.0" cy="694.1" r="2.3" fill="#906330"/><circle cx="1109.0" cy="702.4" r="3.1" fill="#715830"/><circle cx="1108.0" cy="699.5" r="2.8" fill="#a26a23"/><circle cx="1106.5" cy="704.1" r="3.0" fill="#ae8740"/><circle cx="1109.6" cy="697.6" r="3.9" fill="#755a2e"/><circle cx="1108.4" cy="709.5" r="2.7" fill="#70542a"/><circle cx="1107.4" cy="709.6" r="4.0" fill="#935a1a"/><circle cx="1103.8" cy="714.4" r="3.2" fill="#74592f"/><circle cx="1103.9" cy="713.5" r="2.0" fill="#7d6238"/><circle cx="1103.1" cy="721.0" r="2.8" fill="#ad8743"/><circle cx="1103.6" cy="716.7" r="2.6" fill="#634a22"/><circle cx="1103.7" cy="717.8" r="3.1" fill="#9d7733"/><circle cx="1102.5" cy="715.7" r="3.2" fill="#a16c27"/><circle cx="1097.7" cy="725.6" r="3.7" fill="#a76f31"/><circle cx="1096.6" cy="724.8" r="2.6" fill="#9e7834"/><circle cx="1098.8" cy="724.2" r="2.2" fill="#a17b37"/><circle cx="876.4" cy="728.0" r="2.4" fill="#c47522"/><circle cx="876.5" cy="727.6" r="2.5" fill="#cea545"/><circle cx="875.5" cy="723.6" r="3.0" fill="#cd7d2a"/><circle cx="875.1" cy="724.8" r="2.7" fill="#c16420"/><circle cx="873.0" cy="704.2" r="3.3" fill="#bd5c15"/><circle cx="871.5" cy="702.3" r="4.0" fill="#d4a844"/><circle cx="870.9" cy="708.9" r="3.1" fill="#ddb24f"/><circle cx="870.2" cy="703.2" r="2.8" fill="#be581f"/><circle cx="867.5" cy="692.3" r="2.6" fill="#e1b54e"/><circle cx="868.9" cy="698.7" r="2.3" fill="#deb34d"/><circle cx="869.0" cy="702.3" r="2.8" fill="#b14a11"/><circle cx="868.1" cy="695.9" r="2.9" fill="#bc5a12"/><circle cx="867.2" cy="690.7" r="3.1" fill="#7a481b"/><circle cx="866.9" cy="680.5" r="2.7" fill="#8a582b"/><circle cx="867.3" cy="681.8" r="3.4" fill="#c85d22"/><circle cx="864.5" cy="682.8" r="2.2" fill="#7b491c"/><circle cx="998" cy="736" r="1.8" fill="#cea547"/><circle cx="1021" cy="690" r="2.3" fill="#b9661b"/><circle cx="876" cy="687" r="3.4" fill="#dc872d"/><circle cx="995" cy="648" r="2.3" fill="#eda43a"/><circle cx="1024" cy="617" r="3.4" fill="#fdcb57"/><circle cx="1047" cy="698" r="3.1" fill="#86693a"/><circle cx="998" cy="658" r="3.0" fill="#d27c22"/><circle cx="914" cy="726" r="1.5" fill="#c69c3d"/><circle cx="908" cy="650" r="2.6" fill="#f2c354"/><circle cx="1070" cy="673" r="2.4" fill="#a6661f"/><circle cx="969" cy="702" r="2.6" fill="#cfa33f"/><circle cx="958" cy="681" r="2.6" fill="#d3a63d"/><circle cx="870" cy="697" r="2.7" fill="#ac450b"/><circle cx="876" cy="682" r="2.2" fill="#c65b20"/><circle cx="876" cy="725" r="3.2" fill="#b45713"/><circle cx="1063" cy="688" r="3.1" fill="#826435"/><circle cx="1049" cy="622" r="2.1" fill="#c67f2f"/><circle cx="924" cy="634" r="2.9" fill="#efbe4c"/><circle cx="1052" cy="683" r="2.4" fill="#dfb450"/><circle cx="969" cy="710" r="2.2" fill="#bc6c23"/><circle cx="914" cy="724" r="1.7" fill="#bb5e19"/><circle cx="983" cy="713" r="1.9" fill="#c37625"/><circle cx="931" cy="623" r="2.8" fill="#e87826"/><circle cx="1052" cy="666" r="3.4" fill="#c07e34"/><circle cx="942" cy="605" r="3.3" fill="#ce5410"/><circle cx="966" cy="690" r="2.2" fill="#dbae48"/><circle cx="1085" cy="668" r="2.2" fill="#9d6d35"/><circle cx="892" cy="682" r="2.8" fill="#c8631a"/><circle cx="1005" cy="671" r="3.1" fill="#cf792b"/><circle cx="941" cy="662" r="2.8" fill="#e1b245"/><circle cx="892" cy="662" r="3.2" fill="#e0b144"/><circle cx="927" cy="707" r="3.1" fill="#ac470e"/><circle cx="1104" cy="702" r="2.6" fill="#a8813a"/><circle cx="942" cy="619" r="3.4" fill="#da6917"/><circle cx="1059" cy="704" r="2.3" fill="#bd9449"/><circle cx="1081" cy="662" r="1.5" fill="#ca8d3e"/><circle cx="924" cy="704" r="1.5" fill="#d5aa46"/><circle cx="1035" cy="681" r="2.7" fill="#a7763d"/><circle cx="968" cy="630" r="2.8" fill="#e99e31"/><circle cx="1038" cy="688" r="2.0" fill="#b37628"/><circle cx="1015" cy="653" r="2.8" fill="#e79f37"/><circle cx="1068" cy="731" r="1.7" fill="#a37d37"/><circle cx="900" cy="711" r="3.3" fill="#c4651f"/><circle cx="974" cy="622" r="2.4" fill="#814f22"/><circle cx="990" cy="654" r="3.3" fill="#f2c354"/><circle cx="906" cy="670" r="3.3" fill="#c05316"/><circle cx="1019" cy="629" r="2.2" fill="#644b23"/><circle cx="965" cy="655" r="2.8" fill="#e4b547"/><circle cx="877" cy="714" r="1.9" fill="#ad4811"/><circle cx="1027" cy="719" r="3.0" fill="#c89e3f"/><circle cx="1050" cy="691" r="3.0" fill="#95652f"/><circle cx="1036" cy="697" r="3.4" fill="#b07427"/><circle cx="1061" cy="714" r="2.2" fill="#7b5f33"/><circle cx="981" cy="687" r="1.7" fill="#cf8b29"/><circle cx="1067" cy="730" r="3.0" fill="#a8823c"/><circle cx="1024" cy="629" r="1.7" fill="#ecbb49"/><circle cx="906" cy="660" r="3.0" fill="#e6b74b"/><circle cx="1083" cy="684" r="3.0" fill="#775a2c"/><circle cx="984" cy="623" r="1.6" fill="#cd6f1a"/><circle cx="999" cy="631" r="1.9" fill="#f5c452"/><circle cx="999" cy="665" r="3.2" fill="#de9731"/><circle cx="901" cy="683" r="2.9" fill="#dbae45"/><circle cx="977" cy="677" r="2.8" fill="#ce7b25"/><circle cx="879" cy="689" r="2.7" fill="#89572a"/><circle cx="871" cy="704" r="3.4" fill="#c5641d"/><circle cx="981" cy="707" r="1.8" fill="#d4a945"/><circle cx="1016" cy="642" r="3.1" fill="#efbf50"/><circle cx="1055" cy="676" r="3.2" fill="#d5a943"/><circle cx="966" cy="676" r="3.1" fill="#e3b54b"/><circle cx="961" cy="668" r="2.0" fill="#e29b36"/><circle cx="983" cy="608" r="1.9" fill="#f8aa39"/><circle cx="999" cy="653" r="2.6" fill="#e0b143"/><circle cx="1090" cy="684" r="2.8" fill="#bd8338"/><circle cx="897" cy="694" r="2.8" fill="#bf5c14"/><circle cx="870" cy="688" r="2.7" fill="#e4b750"/><circle cx="1054" cy="732" r="2.7" fill="#b89136"/><circle cx="1057" cy="677" r="2.0" fill="#d7ab46"/><circle cx="1002" cy="680" r="3.2" fill="#b66114"/><circle cx="1066" cy="710" r="2.3" fill="#b37b32"/><circle cx="877" cy="695" r="2.6" fill="#b0480e"/><circle cx="979" cy="654" r="1.7" fill="#d78f27"/><circle cx="1017" cy="656" r="1.5" fill="#d79028"/><circle cx="921" cy="704" r="1.9" fill="#8e5c2f"/><circle cx="1047" cy="698" r="1.8" fill="#86693a"/><circle cx="999" cy="667" r="2.8" fill="#e49e38"/><circle cx="1081" cy="696" r="2.7" fill="#b1883e"/><circle cx="1075" cy="665" r="1.6" fill="#c69a4c"/><circle cx="1042" cy="663" r="1.8" fill="#b9762c"/><circle cx="1060" cy="664" r="3.0" fill="#917241"/><circle cx="1002" cy="635" r="1.6" fill="#d87c29"/><circle cx="943" cy="684" r="3.4" fill="#b94f14"/><circle cx="922" cy="650" r="2.2" fill="#d76c1e"/><circle cx="926" cy="655" r="2.6" fill="#d06619"/><circle cx="1068" cy="716" r="3.1" fill="#7c6034"/><circle cx="1031" cy="732" r="2.2" fill="#c9a145"/><circle cx="981" cy="649" r="3.0" fill="#de962c"/><circle cx="1012" cy="695" r="2.4" fill="#d4a842"/><circle cx="956" cy="674" r="2.5" fill="#d7a93f"/><circle cx="918" cy="680" r="3.2" fill="#bc5115"/><circle cx="979" cy="681" r="1.9" fill="#d7a941"/><circle cx="1061" cy="635" r="2.6" fill="#daab57"/><circle cx="989" cy="613" r="1.6" fill="#dd801f"/><circle cx="953" cy="662" r="1.7" fill="#daab3e"/><circle cx="946" cy="671" r="1.5" fill="#885629"/><circle cx="982" cy="678" r="2.0" fill="#c4711b"/><circle cx="1097" cy="709" r="3.1" fill="#6a4f24"/><circle cx="955" cy="594" r="1.6" fill="#ffd75d"/><circle cx="1010" cy="652" r="1.7" fill="#d57e24"/><circle cx="1001" cy="689" r="3.3" fill="#c1711c"/><circle cx="972" cy="615" r="3.3" fill="#e89b2b"/><circle cx="948" cy="730" r="3.2" fill="#b35714"/><circle cx="1057" cy="700" r="2.7" fill="#a26420"/><circle cx="896" cy="707" r="3.3" fill="#d07e28"/><circle cx="1008" cy="707" r="1.7" fill="#cfa440"/><circle cx="958" cy="648" r="2.2" fill="#eba238"/><circle cx="1083" cy="663" r="3.2" fill="#98672f"/><circle cx="879" cy="686" r="2.2" fill="#ca741a"/><circle cx="952" cy="641" r="2.9" fill="#f0c04f"/><circle cx="998" cy="612" r="3.2" fill="#fbc852"/><circle cx="1003" cy="636" r="3.0" fill="#e7b645"/><circle cx="940" cy="730" r="1.7" fill="#bf6320"/><circle cx="1084" cy="694" r="1.9" fill="#725528"/><circle cx="924" cy="621" r="2.2" fill="#db6b19"/><circle cx="1042" cy="635" r="3.4" fill="#725931"/><circle cx="945" cy="612" r="1.5" fill="#d35a17"/><circle cx="906" cy="657" r="3.2" fill="#edbe51"/><circle cx="905" cy="721" r="2.5" fill="#c69c3b"/><circle cx="882" cy="684" r="2.4" fill="#d6a941"/><circle cx="894" cy="694" r="2.7" fill="#d5a943"/><circle cx="1043" cy="653" r="2.9" fill="#6d542c"/><circle cx="944" cy="720" r="3.1" fill="#bc5e1a"/><circle cx="1088" cy="664" r="3.2" fill="#b78c3e"/><circle cx="1004" cy="723" r="2.2" fill="#a85913"/><circle cx="890" cy="701" r="3.1" fill="#d9852e"/><circle cx="1038" cy="649" r="2.9" fill="#654c24"/><circle cx="988" cy="672" r="2.5" fill="#644b23"/><circle cx="916" cy="618" r="1.7" fill="#ecb944"/><circle cx="1045" cy="631" r="3.1" fill="#d7933d"/><circle cx="920" cy="659" r="2.2" fill="#e0b144"/><circle cx="983" cy="668" r="2.0" fill="#e3b54a"/><circle cx="1081" cy="674" r="1.9" fill="#c59a4d"/><circle cx="1003" cy="706" r="1.8" fill="#b8671e"/><circle cx="1033" cy="683" r="2.6" fill="#634a22"/><circle cx="1054" cy="642" r="2.0" fill="#e6b74b"/><circle cx="1071" cy="677" r="3.4" fill="#bc9244"/><circle cx="989" cy="738" r="3.3" fill="#c79e41"/><circle cx="941" cy="621" r="2.8" fill="#f8c551"/><circle cx="1102" cy="710" r="3.3" fill="#955b1b"/><circle cx="1076" cy="686" r="3.2" fill="#b37530"/><circle cx="947" cy="616" r="1.6" fill="#d05916"/><circle cx="881" cy="681" r="3.3" fill="#b54b0f"/><circle cx="1004" cy="632" r="2.9" fill="#e08629"/><circle cx="1012" cy="678" r="2.7" fill="#e8bb52"/><circle cx="952" cy="728" r="2.1" fill="#ae6314"/><circle cx="921" cy="624" r="2.5" fill="#fbc955"/><circle cx="941" cy="640" r="2.0" fill="#d6691a"/><circle cx="998" cy="684" r="2.2" fill="#c06b1f"/><circle cx="1069" cy="645" r="2.9" fill="#a57237"/><circle cx="944" cy="645" r="2.8" fill="#e78b2a"/><circle cx="884" cy="723" r="3.3" fill="#cc7c29"/><circle cx="1037" cy="732" r="1.7" fill="#a46928"/><circle cx="1051" cy="681" r="2.4" fill="#9d6c35"/><circle cx="1072" cy="633" r="2.7" fill="#cfa04c"/><circle cx="1033" cy="635" r="2.2" fill="#f0c050"/><circle cx="999" cy="650" r="2.1" fill="#d88126"/><circle cx="971" cy="619" r="2.1" fill="#fecb56"/><circle cx="954" cy="626" r="3.1" fill="#fcca56"/><circle cx="911" cy="656" r="3.2" fill="#774518"/><circle cx="924" cy="729" r="2.1" fill="#c77825"/><circle cx="1015" cy="658" r="3.1" fill="#d47e25"/><circle cx="976" cy="596" r="2.8" fill="#ffb03d"/><circle cx="962" cy="668" r="2.7" fill="#d48e28"/><circle cx="970" cy="687" r="3.4" fill="#dfb34b"/><circle cx="951" cy="647" r="1.6" fill="#e5b545"/><circle cx="888" cy="729" r="2.8" fill="#ad4c16"/><circle cx="1018" cy="671" r="3.1" fill="#daad43"/><circle cx="963" cy="599" r="2.6" fill="#ffd259"/><circle cx="1057" cy="638" r="2.8" fill="#6b522a"/><circle cx="959" cy="605" r="1.5" fill="#7b491c"/><circle cx="984" cy="676" r="2.0" fill="#c77123"/><circle cx="963" cy="609" r="1.8" fill="#e59727"/><circle cx="991" cy="718" r="2.7" fill="#ce8e32"/><circle cx="941" cy="701" r="2.2" fill="#d1a641"/><circle cx="1017" cy="723" r="3.3" fill="#684f27"/><circle cx="972" cy="650" r="1.6" fill="#d87e2d"/><circle cx="1015" cy="629" r="1.6" fill="#e79b2f"/><circle cx="974" cy="655" r="2.0" fill="#da922a"/><circle cx="1029" cy="695" r="2.6" fill="#d4a945"/><circle cx="1079" cy="665" r="3.0" fill="#b98d3e"/><circle cx="902" cy="649" r="1.5" fill="#e68b2b"/><circle cx="951" cy="642" r="3.2" fill="#f6c555"/><circle cx="1066" cy="644" r="2.0" fill="#c79946"/><circle cx="946" cy="658" r="2.0" fill="#7a481b"/><circle cx="920" cy="610" r="1.9" fill="#ea7723"/><circle cx="971" cy="720" r="3.0" fill="#cda342"/><circle cx="914" cy="653" r="2.7" fill="#e38829"/><circle cx="986" cy="625" r="2.4" fill="#ffcd59"/><circle cx="994" cy="653" r="2.5" fill="#f5c658"/><circle cx="891" cy="670" r="2.5" fill="#eec055"/><circle cx="1034" cy="710" r="1.9" fill="#c49a39"/><circle cx="1061" cy="708" r="1.9" fill="#a36623"/><circle cx="932" cy="717" r="2.3" fill="#d1a745"/><circle cx="1054" cy="727" r="3.1" fill="#be963b"/><circle cx="904" cy="647" r="3.0" fill="#d67a1a"/><circle cx="1025" cy="698" r="2.0" fill="#ca7c2a"/><circle cx="928" cy="684" r="1.9" fill="#c87218"/><circle cx="1012" cy="657" r="2.9" fill="#f2c356"/><circle cx="1020" cy="618" r="3.1" fill="#da7c27"/><circle cx="924" cy="657" r="2.8" fill="#dbac3f"/><circle cx="888" cy="708" r="2.7" fill="#ba551d"/><circle cx="940" cy="710" r="2.2" fill="#d3812c"/><circle cx="1014" cy="624" r="2.5" fill="#f6c450"/><circle cx="971" cy="643" r="2.5" fill="#d77c29"/><circle cx="973" cy="598" r="2.8" fill="#eb8930"/><circle cx="892" cy="708" r="1.6" fill="#b04a12"/><circle cx="1055" cy="627" r="2.0" fill="#ab7538"/><circle cx="947" cy="604" r="2.7" fill="#ffd35b"/><circle cx="1037" cy="694" r="2.0" fill="#d7ac48"/><circle cx="1020" cy="698" r="1.8" fill="#bf6d24"/><circle cx="920" cy="688" r="1.7" fill="#d06c23"/><circle cx="1027" cy="683" r="2.4" fill="#c88423"/><circle cx="982" cy="597" r="3.2" fill="#f8c34a"/><circle cx="1035" cy="659" r="1.7" fill="#e3b64b"/><circle cx="1002" cy="635" r="2.6" fill="#70572f"/><circle cx="881" cy="701" r="3.4" fill="#ca6922"/><circle cx="982" cy="657" r="1.9" fill="#dd952e"/><circle cx="1090" cy="690" r="2.7" fill="#836639"/><circle cx="921" cy="611" r="1.6" fill="#e16f1b"/><circle cx="991" cy="729" r="2.8" fill="#d5ac4c"/><circle cx="1068" cy="705" r="2.1" fill="#b28940"/><circle cx="940" cy="647" r="2.5" fill="#e8b848"/><circle cx="1002" cy="687" r="3.1" fill="#cc8826"/><circle cx="984" cy="667" r="1.8" fill="#e9bb50"/><circle cx="1017" cy="612" r="1.9" fill="#ffce59"/><circle cx="908" cy="702" r="1.5" fill="#b75017"/><circle cx="874" cy="700" r="3.2" fill="#764417"/><circle cx="1027" cy="718" r="3.2" fill="#c89f3f"/><circle cx="1029" cy="678" r="2.4" fill="#c16d21"/><circle cx="967" cy="673" r="2.7" fill="#e1b349"/><circle cx="1100" cy="686" r="3.0" fill="#775e36"/><circle cx="943" cy="692" r="2.6" fill="#d37e26"/><circle cx="1076" cy="672" r="2.7" fill="#a4743c"/><circle cx="1045" cy="697" r="1.8" fill="#b97e31"/><circle cx="992" cy="678" r="2.3" fill="#d8ab41"/><circle cx="1047" cy="624" r="3.1" fill="#b27c3e"/><circle cx="1028" cy="700" r="1.9" fill="#bd6c23"/><circle cx="1034" cy="704" r="3.2" fill="#c77a2a"/><circle cx="878" cy="658" r="3.1" fill="#d16224"/><circle cx="1097" cy="687" r="3.3" fill="#bd843a"/><circle cx="958" cy="617" r="3.3" fill="#e6992a"/><circle cx="953" cy="686" r="2.3" fill="#774518"/><circle cx="913" cy="636" r="2.8" fill="#e27424"/><circle cx="889" cy="703" r="2.2" fill="#d3a743"/><circle cx="1061" cy="704" r="1.5" fill="#af863c"/><circle cx="953" cy="704" r="3.3" fill="#d29132"/><circle cx="948" cy="645" r="2.1" fill="#e07425"/><circle cx="921" cy="645" r="2.8" fill="#885629"/><circle cx="970" cy="713" r="2.4" fill="#cda23f"/><circle cx="906" cy="676" r="2.1" fill="#cf771c"/><circle cx="1007" cy="629" r="3.4" fill="#e28729"/><circle cx="898" cy="668" r="3.2" fill="#c55d11"/><circle cx="906" cy="717" r="2.8" fill="#d2a846"/><circle cx="1102" cy="697" r="2.4" fill="#b68e46"/><circle cx="989" cy="646" r="2.5" fill="#e4b444"/><circle cx="902" cy="646" r="2.4" fill="#e28525"/><circle cx="939" cy="642" r="2.4" fill="#e9b848"/><circle cx="1028" cy="632" r="2.0" fill="#da8225"/><circle cx="1002" cy="672" r="3.3" fill="#dd9732"/><circle cx="910" cy="656" r="2.6" fill="#e5b648"/><circle cx="1058" cy="627" r="3.0" fill="#e0b142"/><circle cx="936" cy="708" r="2.9" fill="#ae4911"/><circle cx="948" cy="675" r="2.3" fill="#804e21"/><circle cx="1028" cy="727" r="3.0" fill="#ba7c23"/><circle cx="911" cy="728" r="2.8" fill="#caa141"/><circle cx="1002" cy="637" r="1.8" fill="#6b522a"/><circle cx="1040" cy="629" r="2.6" fill="#86652f"/><circle cx="1090" cy="680" r="1.7" fill="#be9449"/><circle cx="948" cy="663" r="3.3" fill="#ba4b0e"/><circle cx="1070" cy="639" r="1.8" fill="#ca853a"/><circle cx="901" cy="632" r="2.8" fill="#f2c14e"/><circle cx="972" cy="728" r="2.0" fill="#bc7d23"/><circle cx="878" cy="717" r="2.6" fill="#b65813"/><circle cx="928" cy="690" r="1.5" fill="#cea23b"/><circle cx="913" cy="641" r="2.9" fill="#ec8e2d"/><circle cx="1030" cy="642" r="1.6" fill="#dfaf41"/><circle cx="882" cy="685" r="3.0" fill="#cf791f"/><circle cx="1095" cy="725" r="1.5" fill="#ae8844"/><circle cx="1013" cy="702" r="2.1" fill="#cca13d"/><circle cx="913" cy="672" r="3.1" fill="#e0b248"/><circle cx="966" cy="673" r="2.6" fill="#ca7427"/><circle cx="1004" cy="626" r="2.7" fill="#ed9233"/><circle cx="868" cy="690" r="2.7" fill="#bc5319"/><circle cx="1000" cy="646" r="2.5" fill="#e8b848"/><circle cx="1024" cy="710" r="2.2" fill="#c6862a"/><circle cx="875" cy="668" r="2.6" fill="#eabc51"/><circle cx="951" cy="613" r="1.8" fill="#f4a636"/><circle cx="985" cy="689" r="2.2" fill="#c3721d"/><circle cx="941" cy="730" r="1.7" fill="#bf6320"/><circle cx="1088" cy="695" r="2.2" fill="#b38a41"/><circle cx="962" cy="732" r="3.3" fill="#b4761c"/><circle cx="923" cy="631" r="2.3" fill="#edbb49"/><circle cx="942" cy="656" r="2.0" fill="#d97e1f"/><circle cx="1105" cy="713" r="2.4" fill="#7f643a"/><circle cx="894" cy="637" r="1.7" fill="#7d4b1e"/><circle cx="900" cy="696" r="2.6" fill="#ad450b"/><circle cx="1081" cy="646" r="3.0" fill="#a37137"/><circle cx="898" cy="704" r="1.7" fill="#ddb24e"/><circle cx="959" cy="654" r="2.7" fill="#d47e23"/><circle cx="919" cy="713" r="2.8" fill="#865427"/><circle cx="1009" cy="679" r="2.8" fill="#d38e2b"/><circle cx="916" cy="674" r="2.7" fill="#d16a1f"/><circle cx="948" cy="667" r="3.2" fill="#ddaf44"/><circle cx="927" cy="640" r="1.6" fill="#ea8d2b"/><circle cx="943" cy="654" r="3.4" fill="#e08425"/><circle cx="965" cy="674" r="2.2" fill="#edbf55"/><circle cx="956" cy="654" r="1.8" fill="#db922a"/><circle cx="924" cy="685" r="2.2" fill="#d6a941"/><circle cx="1039" cy="653" r="2.6" fill="#d08f3c"/><circle cx="1027" cy="661" r="2.6" fill="#c87123"/><circle cx="988" cy="682" r="3.4" fill="#e5b850"/><circle cx="1058" cy="725" r="2.2" fill="#725931"/><circle cx="927" cy="692" r="3.1" fill="#deb24b"/><circle cx="1051" cy="631" r="3.1" fill="#93713d"/><circle cx="1007" cy="678" r="3.4" fill="#7a6139"/><circle cx="992" cy="671" r="2.5" fill="#e29c36"/><circle cx="903" cy="717" r="2.4" fill="#a5420a"/><circle cx="940" cy="646" r="3.1" fill="#db7e1e"/><circle cx="1036" cy="648" r="2.2" fill="#8e6d3a"/><circle cx="1026" cy="633" r="2.1" fill="#e79d32"/><circle cx="1019" cy="703" r="1.8" fill="#d39233"/><circle cx="893" cy="666" r="2.8" fill="#c15316"/><circle cx="1060" cy="629" r="2.6" fill="#6a5129"/><circle cx="1040" cy="633" r="2.1" fill="#eebe4e"/><circle cx="883" cy="689" r="3.1" fill="#dbaf48"/><circle cx="1055" cy="733" r="2.9" fill="#b48d33"/><circle cx="1038" cy="636" r="2.3" fill="#8e6c38"/><circle cx="920" cy="722" r="1.7" fill="#b5521b"/><circle cx="953" cy="693" r="2.1" fill="#e5b852"/><circle cx="971" cy="651" r="2.3" fill="#d87e2d"/><circle cx="1001" cy="735" r="2.8" fill="#b06619"/><circle cx="1083" cy="658" r="2.4" fill="#be7d35"/><circle cx="918" cy="621" r="2.5" fill="#f2912d"/><circle cx="943" cy="650" r="2.4" fill="#e1b142"/><circle cx="984" cy="721" r="1.9" fill="#ac5e17"/><circle cx="1038" cy="665" r="1.6" fill="#cd8e3c"/><circle cx="895" cy="653" r="1.6" fill="#de8324"/><circle cx="907" cy="674" r="2.5" fill="#e1b349"/><circle cx="924" cy="723" r="2.6" fill="#cd7d2a"/><circle cx="1077" cy="714" r="3.1" fill="#a88039"/><circle cx="1024" cy="700" r="1.8" fill="#bc6e1c"/><circle cx="974" cy="700" r="2.8" fill="#d29030"/><circle cx="915" cy="658" r="1.9" fill="#edbe51"/><circle cx="1013" cy="653" r="2.9" fill="#e3b345"/><circle cx="1009" cy="618" r="3.3" fill="#f1a435"/><circle cx="915" cy="702" r="2.9" fill="#af480f"/><circle cx="884" cy="712" r="3.3" fill="#daaf4d"/><circle cx="1068" cy="699" r="2.3" fill="#b37633"/><circle cx="972" cy="708" r="3.2" fill="#bc6b23"/><circle cx="1040" cy="638" r="2.0" fill="#a36d31"/><circle cx="1096" cy="693" r="1.9" fill="#795d30"/><circle cx="899" cy="635" r="2.7" fill="#dd6f1f"/><circle cx="943" cy="652" r="1.6" fill="#f3c355"/><circle cx="933" cy="644" r="2.9" fill="#d26616"/><circle cx="981" cy="724" r="2.6" fill="#be7e23"/><circle cx="895" cy="632" r="3.2" fill="#e27423"/><circle cx="943" cy="660" r="2.0" fill="#c96013"/><circle cx="1057" cy="636" r="1.6" fill="#cc873a"/><circle cx="998" cy="712" r="2.6" fill="#bd7d1f"/><circle cx="988" cy="605" r="2.7" fill="#ffd058"/><circle cx="1042" cy="704" r="2.2" fill="#aa6c27"/><circle cx="1069" cy="637" r="2.0" fill="#c79845"/><circle cx="889" cy="667" r="2.5" fill="#e6b74c"/><circle cx="921" cy="678" r="1.6" fill="#d9ab42"/><circle cx="931" cy="676" r="3.4" fill="#c4581c"/><circle cx="985" cy="728" r="1.5" fill="#c4792a"/><circle cx="1003" cy="697" r="1.9" fill="#ca8827"/><circle cx="1002" cy="609" r="2.8" fill="#f7c34d"/><circle cx="1009" cy="712" r="2.9" fill="#695028"/><circle cx="936" cy="603" r="2.9" fill="#db6713"/><circle cx="988" cy="616" r="3.0" fill="#e99c2c"/><circle cx="1091" cy="696" r="2.8" fill="#624921"/><circle cx="1058" cy="664" r="2.4" fill="#c38138"/><circle cx="951" cy="654" r="2.7" fill="#c46a1a"/><circle cx="1061" cy="666" r="3.0" fill="#8e6f3f"/><circle cx="1046" cy="719" r="3.0" fill="#b17930"/><circle cx="1066" cy="712" r="3.2" fill="#b78e46"/><circle cx="993" cy="737" r="1.7" fill="#c2792c"/><circle cx="910" cy="661" r="1.9" fill="#ce6022"/><circle cx="873" cy="693" r="2.3" fill="#d07b23"/><circle cx="962" cy="604" r="2.7" fill="#f29432"/><circle cx="1009" cy="720" r="3.0" fill="#715830"/><circle cx="1080" cy="664" r="2.3" fill="#b88c3d"/><circle cx="944" cy="623" r="2.2" fill="#c7510f"/><circle cx="933" cy="604" r="2.0" fill="#f4912a"/><circle cx="1025" cy="715" r="1.7" fill="#c48529"/><circle cx="951" cy="625" r="3.2" fill="#de8324"/><circle cx="985" cy="738" r="2.5" fill="#b77a21"/><circle cx="921" cy="678" r="2.7" fill="#b54a0e"/><circle cx="1106" cy="704" r="2.9" fill="#996d3b"/><circle cx="1083" cy="693" r="1.6" fill="#b0772d"/><circle cx="1025" cy="688" r="2.2" fill="#b15e13"/><circle cx="1087" cy="667" r="2.2" fill="#ba7a34"/><circle cx="890" cy="648" r="2.1" fill="#e17627"/><circle cx="1012" cy="661" r="3.3" fill="#d8912a"/><circle cx="896" cy="681" r="2.6" fill="#825023"/><circle cx="903" cy="681" r="3.4" fill="#c76218"/><circle cx="997" cy="653" r="1.7" fill="#cb7221"/><circle cx="950" cy="730" r="2.1" fill="#ae6315"/><circle cx="1058" cy="644" r="1.8" fill="#b77327"/><circle cx="937" cy="671" r="2.8" fill="#be5114"/><circle cx="1103" cy="710" r="2.2" fill="#71562b"/><circle cx="1083" cy="664" r="2.7" fill="#b6792b"/><circle cx="1030" cy="646" r="2.1" fill="#d17b21"/><circle cx="1016" cy="668" r="2.3" fill="#e0b247"/><circle cx="994" cy="693" r="3.1" fill="#cfa33c"/><circle cx="929" cy="646" r="3.2" fill="#ea8e2e"/><circle cx="890" cy="660" r="1.5" fill="#cb5c1e"/><circle cx="936" cy="683" r="2.2" fill="#ce691f"/><circle cx="884" cy="683" r="3.1" fill="#b3490e"/><circle cx="904" cy="702" r="2.9" fill="#d5aa45"/><circle cx="1046" cy="643" r="2.2" fill="#856431"/><circle cx="1044" cy="654" r="3.3" fill="#dcae43"/><circle cx="945" cy="600" r="2.3" fill="#e36824"/><circle cx="919" cy="657" r="1.9" fill="#be4e10"/><circle cx="898" cy="694" r="2.9" fill="#c47018"/><circle cx="1046" cy="717" r="2.7" fill="#9a6c38"/><circle cx="1036" cy="699" r="2.7" fill="#c79c3a"/><circle cx="1053" cy="684" r="2.5" fill="#986830"/><circle cx="883" cy="695" r="3.4" fill="#c36f17"/><circle cx="1070" cy="640" r="1.5" fill="#a87439"/><circle cx="971" cy="676" r="3.0" fill="#845225"/><circle cx="1017" cy="643" r="2.1" fill="#e79e35"/><circle cx="1070" cy="715" r="2.5" fill="#7a6139"/><circle cx="903" cy="716" r="2.0" fill="#d7ad4b"/><circle cx="888" cy="650" r="3.3" fill="#f3c455"/><circle cx="878" cy="664" r="1.8" fill="#cd5f22"/><circle cx="1014" cy="620" r="2.7" fill="#efbd49"/><circle cx="931" cy="620" r="2.9" fill="#f99834"/><circle cx="909" cy="699" r="1.9" fill="#dbb04a"/><circle cx="1049" cy="720" r="2.1" fill="#b07533"/><circle cx="1041" cy="702" r="1.6" fill="#c39937"/><circle cx="1069" cy="689" r="2.9" fill="#86683a"/><circle cx="901" cy="688" r="3.4" fill="#d0a33c"/><circle cx="1045" cy="697" r="2.3" fill="#785f37"/><circle cx="974" cy="606" r="1.7" fill="#ffd55e"/><circle cx="1081" cy="665" r="1.7" fill="#bd9243"/><circle cx="979" cy="717" r="1.7" fill="#d5aa49"/><circle cx="923" cy="650" r="2.2" fill="#df7426"/><circle cx="930" cy="716" r="2.5" fill="#b14d15"/><circle cx="900" cy="729" r="2.3" fill="#c19838"/><circle cx="914" cy="681" r="2.2" fill="#784619"/><circle cx="976" cy="597" r="3.2" fill="#f4a532"/><circle cx="945" cy="677" r="2.4" fill="#bf590f"/><circle cx="921" cy="730" r="2.2" fill="#cfa647"/><circle cx="970" cy="679" r="3.2" fill="#d88630"/><circle cx="877" cy="702" r="1.6" fill="#d4812a"/><circle cx="1028" cy="701" r="2.0" fill="#b96920"/><circle cx="1011" cy="608" r="2.4" fill="#ffd25b"/><circle cx="917" cy="651" r="3.0" fill="#d36223"/><circle cx="1020" cy="732" r="2.0" fill="#ba9234"/><circle cx="980" cy="738" r="2.9" fill="#b77a21"/><circle cx="896" cy="672" r="2.7" fill="#e5b74d"/><circle cx="1057" cy="728" r="3.2" fill="#624921"/><circle cx="999" cy="717" r="2.5" fill="#b96a22"/><circle cx="996" cy="635" r="2.3" fill="#796038"/><circle cx="912" cy="619" r="2.5" fill="#d86715"/><circle cx="1037" cy="704" r="2.8" fill="#b2742f"/><circle cx="990" cy="695" r="1.7" fill="#cfa33d"/><circle cx="937" cy="636" r="2.4" fill="#f39533"/><circle cx="871" cy="696" r="3.0" fill="#d7ac46"/><circle cx="974" cy="653" r="2.7" fill="#d77e2d"/><circle cx="1059" cy="731" r="3.1" fill="#a96f2f"/><circle cx="1030" cy="722" r="2.3" fill="#c7892f"/><circle cx="1037" cy="629" r="2.1" fill="#ecbb4b"/><circle cx="956" cy="615" r="1.8" fill="#dc7c26"/><circle cx="1051" cy="720" r="3.4" fill="#73572b"/><circle cx="945" cy="674" r="2.2" fill="#d87227"/><circle cx="1053" cy="627" r="2.2" fill="#e4b445"/><circle cx="886" cy="718" r="2.1" fill="#bc6b17"/><circle cx="994" cy="740" r="1.8" fill="#b56925"/><circle cx="995" cy="735" r="2.3" fill="#b96d28"/><circle cx="913" cy="635" r="3.2" fill="#7e4c1f"/><circle cx="968" cy="608" r="3.3" fill="#e4842c"/><circle cx="931" cy="651" r="2.1" fill="#df7426"/><circle cx="1077" cy="689" r="2.7" fill="#9e6f3a"/><circle cx="958" cy="602" r="2.9" fill="#f3a432"/><circle cx="879" cy="676" r="2.9" fill="#c95d21"/><circle cx="973" cy="729" r="2.0" fill="#d4aa4b"/><circle cx="1032" cy="659" r="2.9" fill="#e4b64b"/><circle cx="946" cy="719" r="1.6" fill="#b25410"/><circle cx="1074" cy="714" r="2.8" fill="#a27a33"/><circle cx="882" cy="711" r="2.8" fill="#cda240"/><circle cx="956" cy="691" r="2.6" fill="#cfa33c"/><circle cx="934" cy="632" r="3.3" fill="#e78926"/><circle cx="996" cy="617" r="2.2" fill="#e38727"/><circle cx="902" cy="693" r="3.2" fill="#c25f17"/><circle cx="868" cy="691" r="3.2" fill="#cc771e"/><circle cx="1020" cy="663" r="3.2" fill="#775e36"/><circle cx="954" cy="647" r="2.0" fill="#cf781d"/><circle cx="887" cy="676" r="2.4" fill="#e3b54b"/><circle cx="980" cy="617" r="1.9" fill="#e89b2c"/><circle cx="977" cy="735" r="2.6" fill="#c29a3b"/><circle cx="981" cy="623" r="2.7" fill="#d97e1f"/><circle cx="874" cy="671" r="2.5" fill="#d9ab40"/><circle cx="1091" cy="661" r="2.9" fill="#c19547"/><circle cx="930" cy="712" r="1.6" fill="#cb7a25"/><circle cx="924" cy="669" r="2.7" fill="#d66f23"/><circle cx="978" cy="705" r="2.5" fill="#d7ac48"/><circle cx="951" cy="650" r="3.2" fill="#e0b041"/><circle cx="1074" cy="647" r="3.2" fill="#c29543"/><circle cx="1041" cy="660" r="3.1" fill="#d8ab41"/><circle cx="1070" cy="637" r="2.1" fill="#c29340"/><circle cx="960" cy="695" r="1.5" fill="#c58221"/><circle cx="979" cy="669" r="3.3" fill="#e09a35"/><circle cx="978" cy="638" r="3.0" fill="#fccb5a"/><circle cx="940" cy="653" r="2.2" fill="#da7022"/><circle cx="953" cy="615" r="3.1" fill="#89572a"/><circle cx="1063" cy="684" r="2.4" fill="#b3782b"/><circle cx="925" cy="677" r="2.0" fill="#d7aa40"/><circle cx="940" cy="707" r="1.8" fill="#c6661f"/><circle cx="1065" cy="712" r="2.0" fill="#885b28"/><circle cx="932" cy="635" r="3.3" fill="#dd7f1d"/><circle cx="992" cy="722" r="3.0" fill="#b86a23"/><circle cx="1025" cy="681" r="3.0" fill="#b86419"/><circle cx="969" cy="682" r="2.0" fill="#e7ba52"/><circle cx="1099" cy="690" r="2.3" fill="#836639"/><circle cx="1066" cy="699" r="1.6" fill="#9d6f3a"/><circle cx="942" cy="733" r="2.3" fill="#d4ab4d"/><circle cx="1037" cy="690" r="1.8" fill="#9c6c34"/><circle cx="996" cy="652" r="1.8" fill="#e28b31"/><circle cx="1037" cy="649" r="2.4" fill="#e1b245"/><circle cx="1020" cy="726" r="1.7" fill="#bf7527"/><circle cx="965" cy="602" r="2.6" fill="#e28129"/><circle cx="949" cy="699" r="2.3" fill="#d9ad48"/><circle cx="1033" cy="695" r="3.0" fill="#ca9f3b"/><circle cx="1101" cy="709" r="3.1" fill="#966a38"/><circle cx="1008" cy="709" r="2.2" fill="#b36219"/><circle cx="974" cy="693" r="3.0" fill="#764417"/><circle cx="1009" cy="654" r="2.6" fill="#624921"/><circle cx="922" cy="617" r="1.8" fill="#d66512"/><circle cx="977" cy="601" r="2.2" fill="#ffd65e"/><circle cx="980" cy="630" r="1.6" fill="#ecba48"/><circle cx="893" cy="725" r="2.1" fill="#b35612"/><circle cx="1061" cy="706" r="3.1" fill="#84683b"/><circle cx="878" cy="663" r="1.6" fill="#efc054"/><circle cx="973" cy="663" r="3.0" fill="#ca7323"/><circle cx="1001" cy="611" r="1.9" fill="#f8ab3b"/><circle cx="974" cy="706" r="2.5" fill="#cd7f2d"/><circle cx="913" cy="701" r="2.4" fill="#cea33e"/><circle cx="911" cy="638" r="2.8" fill="#e8b847"/><circle cx="876" cy="662" r="2.1" fill="#ce6022"/><circle cx="1059" cy="638" r="2.1" fill="#cc873a"/><circle cx="872" cy="670" r="1.8" fill="#d0691d"/><circle cx="1056" cy="701" r="3.2" fill="#ba8035"/><circle cx="938" cy="602" r="2.8" fill="#f7942c"/><circle cx="877" cy="715" r="2.5" fill="#d1802b"/><circle cx="965" cy="699" r="2.5" fill="#b8661c"/><circle cx="974" cy="689" r="2.0" fill="#875528"/><circle cx="892" cy="662" r="2.7" fill="#dbad40"/><circle cx="1073" cy="692" r="2.1" fill="#956731"/><circle cx="1034" cy="701" r="2.9" fill="#7a6139"/><circle cx="1028" cy="672" r="2.8" fill="#e3b64d"/><circle cx="1011" cy="653" r="2.0" fill="#eabb4c"/><circle cx="1037" cy="646" r="3.2" fill="#b77224"/><circle cx="925" cy="705" r="3.2" fill="#c6731d"/><circle cx="1099" cy="684" r="2.0" fill="#9f713c"/><circle cx="1057" cy="706" r="3.2" fill="#76592c"/><circle cx="1064" cy="698" r="3.4" fill="#75582a"/><circle cx="1042" cy="722" r="2.8" fill="#9a5e1c"/><circle cx="1076" cy="679" r="1.5" fill="#a4651f"/><circle cx="1072" cy="717" r="2.0" fill="#ad853e"/><circle cx="1014" cy="651" r="2.0" fill="#e9a038"/><circle cx="963" cy="689" r="3.2" fill="#da9634"/><circle cx="1042" cy="707" r="3.0" fill="#d4ab4a"/><circle cx="941" cy="658" r="2.1" fill="#f1c255"/><circle cx="944" cy="717" r="2.2" fill="#d2812d"/><circle cx="1046" cy="695" r="2.7" fill="#735a32"/><circle cx="978" cy="662" r="2.9" fill="#c66e1e"/><circle cx="950" cy="600" r="1.7" fill="#f0a12e"/><circle cx="953" cy="685" r="2.4" fill="#845225"/><circle cx="1020" cy="638" r="2.4" fill="#f5c555"/><circle cx="1018" cy="729" r="2.4" fill="#ab5e19"/><circle cx="1045" cy="645" r="3.2" fill="#c37e31"/><circle cx="912" cy="674" r="3.3" fill="#d46e23"/><circle cx="1008" cy="657" r="2.9" fill="#d78f28"/><circle cx="991" cy="717" r="3.0" fill="#caa03e"/><circle cx="1058" cy="684" r="1.6" fill="#deb34f"/><circle cx="968" cy="649" r="2.8" fill="#df972d"/><circle cx="935" cy="641" r="2.9" fill="#f3c352"/><circle cx="1078" cy="684" r="2.2" fill="#90612b"/><circle cx="874" cy="668" r="3.2" fill="#cc5f22"/><circle cx="1093" cy="677" r="1.8" fill="#ae702b"/><circle cx="894" cy="697" r="2.6" fill="#d1a540"/><circle cx="988" cy="663" r="1.7" fill="#6c532b"/><circle cx="1056" cy="673" r="1.9" fill="#a5733b"/><circle cx="904" cy="725" r="3.4" fill="#c46723"/><circle cx="976" cy="682" r="1.9" fill="#cf7d28"/><circle cx="971" cy="603" r="1.6" fill="#de7d25"/><circle cx="896" cy="661" r="2.7" fill="#dd8426"/><circle cx="1052" cy="628" r="1.9" fill="#ecbc4d"/><circle cx="949" cy="658" r="2.1" fill="#d4791b"/><circle cx="896" cy="681" r="1.7" fill="#deb149"/><circle cx="980" cy="658" r="3.3" fill="#d78228"/><circle cx="990" cy="663" r="2.5" fill="#d28b24"/><circle cx="948" cy="649" r="1.6" fill="#f6c657"/><circle cx="966" cy="645" r="2.8" fill="#e5b545"/><circle cx="976" cy="719" r="2.5" fill="#8d5b2e"/><circle cx="979" cy="669" r="2.9" fill="#d7832b"/><circle cx="935" cy="676" r="2.8" fill="#b74b0f"/><circle cx="1017" cy="695" r="2.3" fill="#dcb14b"/><circle cx="1029" cy="643" r="3.3" fill="#df882e"/><circle cx="1084" cy="714" r="1.6" fill="#af8841"/><circle cx="970" cy="633" r="2.5" fill="#875528"/><circle cx="993" cy="734" r="2.7" fill="#b3691c"/><circle cx="957" cy="684" r="3.0" fill="#dbae46"/><circle cx="1063" cy="687" r="1.5" fill="#826435"/><circle cx="900" cy="697" r="1.5" fill="#cca03b"/><circle cx="938" cy="624" r="2.3" fill="#ffce5a"/><circle cx="896" cy="675" r="3.3" fill="#cd671c"/><circle cx="984" cy="703" r="2.3" fill="#c5732a"/><circle cx="935" cy="603" r="1.8" fill="#804e21"/><circle cx="1037" cy="688" r="1.7" fill="#cea33e"/><circle cx="909" cy="645" r="3.3" fill="#e3b344"/><circle cx="958" cy="629" r="1.9" fill="#dd802c"/><circle cx="1083" cy="713" r="2.7" fill="#b17a33"/><circle cx="1016" cy="730" r="3.0" fill="#a25510"/><circle cx="973" cy="727" r="2.6" fill="#cba142"/><circle cx="988" cy="613" r="1.6" fill="#d1721b"/><circle cx="984" cy="697" r="1.8" fill="#c57328"/><circle cx="1060" cy="654" r="2.8" fill="#c58634"/><circle cx="1092" cy="685" r="2.1" fill="#b2883e"/><circle cx="1026" cy="685" r="1.5" fill="#c57521"/><circle cx="1021" cy="677" r="3.0" fill="#e3b64e"/><circle cx="1074" cy="666" r="2.0" fill="#b7762e"/><circle cx="1093" cy="707" r="1.8" fill="#aa732c"/><circle cx="1007" cy="656" r="3.3" fill="#f4c557"/><circle cx="893" cy="648" r="3.2" fill="#e48828"/><circle cx="1081" cy="715" r="1.7" fill="#6c5126"/><circle cx="935" cy="600" r="2.0" fill="#ec7823"/><circle cx="967" cy="679" r="3.0" fill="#d4822c"/><circle cx="1076" cy="652" r="3.3" fill="#ad6b21"/><circle cx="1019" cy="648" r="2.0" fill="#e29a31"/><circle cx="979" cy="603" r="3.1" fill="#ee9f2d"/><circle cx="976" cy="663" r="2.9" fill="#da852c"/><circle cx="906" cy="668" r="2.1" fill="#deb045"/><circle cx="978" cy="712" r="2.0" fill="#c18123"/><circle cx="1087" cy="685" r="3.3" fill="#bc8136"/><circle cx="913" cy="655" r="2.4" fill="#deae40"/><circle cx="1046" cy="626" r="2.4" fill="#a97335"/><circle cx="900" cy="696" r="2.6" fill="#d0a53f"/><circle cx="977" cy="735" r="2.6" fill="#caa243"/><circle cx="1050" cy="681" r="1.8" fill="#826334"/><circle cx="895" cy="680" r="3.3" fill="#e3b64d"/><circle cx="905" cy="709" r="2.1" fill="#cb7924"/><circle cx="1017" cy="677" r="3.3" fill="#cf7c27"/><circle cx="1097" cy="688" r="2.5" fill="#926430"/><circle cx="907" cy="620" r="2.1" fill="#d96220"/><circle cx="998" cy="622" r="2.5" fill="#f1bf4b"/><circle cx="1027" cy="696" r="3.3" fill="#be6d24"/><circle cx="964" cy="730" r="2.6" fill="#c7892f"/><circle cx="911" cy="618" r="3.1" fill="#efbc47"/><circle cx="927" cy="726" r="2.5" fill="#cba142"/><circle cx="961" cy="698" r="1.6" fill="#bc6d19"/><circle cx="1067" cy="728" r="2.5" fill="#935a1a"/><circle cx="1016" cy="691" r="1.8" fill="#b46116"/><circle cx="950" cy="730" r="2.0" fill="#c2993a"/><circle cx="937" cy="678" r="1.7" fill="#db8429"/><circle cx="1048" cy="703" r="1.9" fill="#d9af4e"/><circle cx="949" cy="710" r="3.1" fill="#c77520"/><circle cx="979" cy="596" r="3.4" fill="#f8a936"/><circle cx="910" cy="630" r="3.0" fill="#f1922f"/><circle cx="880" cy="707" r="1.6" fill="#c5731d"/><circle cx="1032" cy="617" r="2.3" fill="#f4a93b"/><circle cx="988" cy="734" r="2.6" fill="#b66924"/><circle cx="1046" cy="717" r="3.0" fill="#bd9436"/><circle cx="944" cy="606" r="2.9" fill="#d85e1a"/><circle cx="902" cy="694" r="2.3" fill="#c05d15"/><circle cx="916" cy="652" r="1.9" fill="#f3c355"/><circle cx="932" cy="646" r="2.0" fill="#dd8121"/><circle cx="908" cy="631" r="2.7" fill="#fcca58"/><circle cx="982" cy="620" r="2.8" fill="#e08425"/><circle cx="876" cy="681" r="3.2" fill="#d4a63e"/><circle cx="981" cy="610" r="2.8" fill="#e6852e"/><circle cx="871" cy="701" r="3.0" fill="#d3a843"/><circle cx="920" cy="624" r="3.3" fill="#eebc48"/><circle cx="1034" cy="647" r="2.9" fill="#e9ba4d"/><circle cx="883" cy="703" r="3.1" fill="#cb6a22"/><circle cx="1078" cy="701" r="1.7" fill="#bb934a"/><circle cx="937" cy="681" r="3.1" fill="#c3591d"/><circle cx="1056" cy="720" r="2.5" fill="#be9639"/><circle cx="981" cy="642" r="2.2" fill="#ca6f1c"/><circle cx="1015" cy="692" r="1.7" fill="#6f562e"/><circle cx="1026" cy="619" r="2.5" fill="#ffcf5b"/><circle cx="1017" cy="659" r="2.2" fill="#cb7424"/><circle cx="996" cy="674" r="2.1" fill="#d38e29"/><circle cx="981" cy="703" r="1.9" fill="#cd7e2c"/><circle cx="937" cy="646" r="2.9" fill="#d26617"/><circle cx="1044" cy="630" r="2.2" fill="#735a32"/><circle cx="991" cy="694" r="3.3" fill="#cd8b2a"/><circle cx="944" cy="607" r="3.0" fill="#e98620"/><circle cx="952" cy="632" r="2.4" fill="#df8628"/><circle cx="1077" cy="658" r="2.3" fill="#cb9e4e"/><circle cx="1073" cy="641" r="3.1" fill="#ca8a38"/><circle cx="908" cy="710" r="2.2" fill="#cea340"/><circle cx="970" cy="652" r="2.6" fill="#deae40"/><circle cx="958" cy="619" r="3.0" fill="#f9ad3e"/><circle cx="940" cy="610" r="1.6" fill="#d96612"/><circle cx="1005" cy="679" r="1.9" fill="#e9bb52"/><circle cx="1074" cy="731" r="1.9" fill="#694f24"/><circle cx="1021" cy="683" r="2.5" fill="#d4a841"/><circle cx="917" cy="641" r="2.3" fill="#df8221"/><circle cx="943" cy="627" r="2.7" fill="#cd5816"/><circle cx="927" cy="710" r="2.4" fill="#c86822"/><circle cx="955" cy="625" r="2.7" fill="#e68b2c"/><circle cx="1050" cy="706" r="3.3" fill="#7e6133"/><circle cx="1078" cy="697" r="1.6" fill="#926430"/><circle cx="974" cy="732" r="2.2" fill="#d2a94b"/><circle cx="902" cy="669" r="2.4" fill="#e8b94e"/><circle cx="912" cy="726" r="2.2" fill="#d2a949"/><circle cx="1000" cy="632" r="2.9" fill="#d17521"/><circle cx="1071" cy="647" r="3.4" fill="#a16e34"/><circle cx="909" cy="672" r="2.2" fill="#daac42"/><circle cx="1057" cy="661" r="3.1" fill="#e7ba52"/><circle cx="1082" cy="640" r="2.3" fill="#735a32"/><circle cx="978" cy="621" r="1.8" fill="#d0711c"/><circle cx="925" cy="690" r="1.8" fill="#cf6c23"/><circle cx="987" cy="639" r="2.5" fill="#f2c250"/><circle cx="928" cy="637" r="1.9" fill="#c85414"/><circle cx="1028" cy="705" r="2.1" fill="#cfa542"/><circle cx="983" cy="675" r="1.8" fill="#79471a"/><circle cx="880" cy="687" r="2.6" fill="#c65d22"/><circle cx="897" cy="715" r="1.6" fill="#a54109"/><circle cx="970" cy="719" r="2.8" fill="#c08023"/><circle cx="939" cy="688" r="2.6" fill="#daad46"/><circle cx="900" cy="635" r="2.0" fill="#d56717"/><circle cx="1059" cy="634" r="3.3" fill="#886733"/><circle cx="1025" cy="665" r="2.6" fill="#d9852e"/><circle cx="996" cy="648" r="3.0" fill="#de952b"/><circle cx="988" cy="611" r="2.1" fill="#654c24"/><circle cx="952" cy="669" r="2.5" fill="#8e5c2f"/><circle cx="1051" cy="714" r="2.8" fill="#c1983a"/><circle cx="947" cy="703" r="2.8" fill="#d8ad49"/><circle cx="1051" cy="656" r="1.9" fill="#9e6b30"/><circle cx="1023" cy="629" r="2.6" fill="#d98023"/><circle cx="947" cy="609" r="2.0" fill="#e3701c"/><circle cx="1060" cy="629" r="3.1" fill="#b47f42"/><circle cx="1054" cy="635" r="3.1" fill="#d18f3a"/><circle cx="969" cy="694" r="3.3" fill="#cfa33d"/><circle cx="1021" cy="657" r="2.0" fill="#f0c255"/><circle cx="1004" cy="619" r="2.4" fill="#eb8f30"/><circle cx="986" cy="720" r="1.5" fill="#c7882b"/><circle cx="1002" cy="673" r="1.9" fill="#d6832c"/><circle cx="1042" cy="625" r="2.6" fill="#886631"/><circle cx="980" cy="600" r="2.7" fill="#f1a22f"/><circle cx="998" cy="704" r="1.7" fill="#c68425"/><circle cx="982" cy="629" r="2.1" fill="#db8022"/><circle cx="1057" cy="702" r="1.7" fill="#bf9636"/><circle cx="889" cy="706" r="2.4" fill="#bb5b14"/><circle cx="1049" cy="654" r="3.3" fill="#deb046"/><circle cx="964" cy="686" r="3.0" fill="#c06c20"/><circle cx="1006" cy="672" r="2.9" fill="#e2b44a"/><circle cx="1086" cy="717" r="1.9" fill="#684f27"/><circle cx="975" cy="679" r="2.0" fill="#cb8723"/><circle cx="1031" cy="729" r="2.3" fill="#6a5129"/><circle cx="1017" cy="688" r="3.1" fill="#ce8a29"/><circle cx="969" cy="689" r="3.3" fill="#dbae47"/><circle cx="1024" cy="692" r="1.5" fill="#c97926"/><circle cx="1009" cy="642" r="1.7" fill="#cf771b"/><circle cx="1058" cy="637" r="2.5" fill="#b77124"/><circle cx="1041" cy="647" r="1.8" fill="#e9bb4e"/><circle cx="1045" cy="729" r="1.7" fill="#b07931"/><circle cx="956" cy="657" r="1.9" fill="#d88228"/><circle cx="1022" cy="719" r="2.2" fill="#b26618"/><circle cx="1007" cy="691" r="2.0" fill="#d38f2e"/><circle cx="957" cy="684" r="2.2" fill="#d4902d"/><circle cx="897" cy="632" r="3.1" fill="#e6b542"/><circle cx="964" cy="595" r="2.3" fill="#f2932f"/><circle cx="970" cy="708" r="1.7" fill="#be701f"/><circle cx="987" cy="717" r="3.0" fill="#d2a846"/><circle cx="986" cy="689" r="3.0" fill="#c26e23"/><circle cx="1006" cy="638" r="3.3" fill="#eba035"/><circle cx="1009" cy="724" r="1.7" fill="#785f37"/><circle cx="914" cy="720" r="3.1" fill="#be6e1a"/><circle cx="974" cy="640" r="2.5" fill="#c56a18"/><circle cx="884" cy="670" r="2.1" fill="#e0b247"/><circle cx="987" cy="668" r="2.9" fill="#e4b64a"/><circle cx="1088" cy="670" r="2.6" fill="#9b6b34"/><circle cx="1064" cy="685" r="1.9" fill="#9e6e38"/><circle cx="1036" cy="646" r="2.8" fill="#d18f3a"/><circle cx="903" cy="691" r="2.1" fill="#c9661d"/><circle cx="1021" cy="672" r="2.3" fill="#cd7a24"/><circle cx="1031" cy="620" r="2.8" fill="#d0731f"/><circle cx="961" cy="678" r="2.5" fill="#d7a940"/><circle cx="1101" cy="711" r="3.4" fill="#9b6121"/><circle cx="1000" cy="617" r="2.2" fill="#e78b2b"/><circle cx="943" cy="683" r="3.4" fill="#ce691f"/><circle cx="1027" cy="616" r="1.8" fill="#eea234"/><circle cx="944" cy="606" r="1.8" fill="#e4711c"/><circle cx="915" cy="662" r="2.3" fill="#c85f13"/><circle cx="885" cy="700" r="2.6" fill="#c5631c"/><circle cx="1038" cy="715" r="2.8" fill="#ac7329"/><circle cx="1084" cy="662" r="2.2" fill="#b68a3b"/><circle cx="1037" cy="679" r="3.0" fill="#bc7e2f"/><circle cx="1063" cy="678" r="2.1" fill="#856737"/><circle cx="886" cy="642" r="2.8" fill="#c75515"/><circle cx="1054" cy="659" r="2.4" fill="#7e5e2d"/><circle cx="1032" cy="617" r="1.7" fill="#de812c"/><circle cx="983" cy="642" r="3.3" fill="#de8529"/><circle cx="1058" cy="688" r="1.8" fill="#9b6b35"/><circle cx="879" cy="660" r="1.5" fill="#e18729"/><circle cx="1072" cy="711" r="2.6" fill="#ad853d"/><circle cx="1018" cy="654" r="1.6" fill="#dc942d"/><circle cx="968" cy="624" r="3.4" fill="#774518"/><circle cx="1073" cy="723" r="2.4" fill="#6b5025"/><circle cx="1006" cy="680" r="1.5" fill="#daad44"/><circle cx="985" cy="672" r="1.7" fill="#ebbd52"/><circle cx="886" cy="703" r="3.0" fill="#cc6b24"/><circle cx="1010" cy="725" r="3.4" fill="#ca8b30"/><circle cx="1080" cy="693" r="2.0" fill="#b0762c"/><circle cx="948" cy="663" r="1.7" fill="#cb5c1f"/><circle cx="919" cy="718" r="2.3" fill="#a44109"/><circle cx="968" cy="727" r="2.7" fill="#c98b30"/><circle cx="1043" cy="637" r="3.2" fill="#6b522a"/><circle cx="940" cy="726" r="1.6" fill="#c16420"/><circle cx="901" cy="631" r="2.9" fill="#d96423"/><circle cx="1052" cy="685" r="1.8" fill="#ac6c26"/><circle cx="970" cy="727" r="3.3" fill="#cca343"/><circle cx="904" cy="677" r="3.0" fill="#cf691f"/><circle cx="928" cy="666" r="3.3" fill="#d8a93e"/><circle cx="959" cy="675" r="3.3" fill="#804e21"/><circle cx="1093" cy="674" r="1.6" fill="#be8336"/><circle cx="1048" cy="666" r="3.1" fill="#d4a83f"/><circle cx="1052" cy="710" r="2.7" fill="#735629"/><circle cx="1031" cy="696" r="3.1" fill="#be701e"/><circle cx="1011" cy="618" r="2.7" fill="#efbd48"/><circle cx="921" cy="698" r="2.8" fill="#e3b751"/><circle cx="941" cy="705" r="3.2" fill="#ae480f"/><circle cx="971" cy="604" r="2.3" fill="#f7c44c"/><circle cx="878" cy="707" r="1.7" fill="#b85811"/><circle cx="922" cy="693" r="3.2" fill="#dbaf48"/><circle cx="889" cy="652" r="1.9" fill="#ea8f30"/><circle cx="947" cy="660" r="2.2" fill="#d3791b"/><circle cx="933" cy="634" r="2.9" fill="#efbe4c"/><circle cx="971" cy="619" r="3.2" fill="#e38828"/><circle cx="971" cy="656" r="2.4" fill="#e3b446"/><circle cx="985" cy="709" r="1.8" fill="#cc8b2d"/><circle cx="1080" cy="720" r="3.3" fill="#b38c46"/><circle cx="891" cy="689" r="2.9" fill="#b2490f"/><circle cx="937" cy="670" r="2.0" fill="#d67e21"/><circle cx="1092" cy="664" r="3.3" fill="#ba8e41"/><circle cx="1020" cy="725" r="2.3" fill="#bd7f25"/><circle cx="1072" cy="717" r="2.2" fill="#8f6330"/><circle cx="1048" cy="663" r="2.3" fill="#e7b951"/><circle cx="954" cy="654" r="2.6" fill="#de882d"/><circle cx="968" cy="650" r="1.9" fill="#e1b243"/><circle cx="1006" cy="659" r="3.4" fill="#e6b74a"/><circle cx="1003" cy="688" r="2.0" fill="#c36f24"/><circle cx="985" cy="669" r="2.8" fill="#d8922d"/><circle cx="935" cy="602" r="1.9" fill="#f6932b"/><circle cx="1085" cy="653" r="1.6" fill="#a8773e"/><circle cx="898" cy="672" r="2.9" fill="#d9ac41"/><circle cx="998" cy="691" r="1.9" fill="#715830"/><circle cx="941" cy="723" r="2.3" fill="#c67623"/><circle cx="977" cy="615" r="2.9" fill="#f19534"/><circle cx="1062" cy="682" r="2.7" fill="#c19649"/><circle cx="951" cy="632" r="1.9" fill="#d07420"/><circle cx="956" cy="686" r="2.1" fill="#8c5a2d"/><circle cx="1077" cy="711" r="2.9" fill="#aa823a"/><circle cx="1003" cy="624" r="1.9" fill="#e1832e"/><circle cx="979" cy="645" r="2.8" fill="#d78e24"/><circle cx="1004" cy="707" r="2.6" fill="#c3732a"/><circle cx="1022" cy="667" r="2.3" fill="#d07a2c"/><circle cx="977" cy="728" r="2.1" fill="#ac5e18"/><circle cx="933" cy="697" r="1.8" fill="#bf571d"/><circle cx="1027" cy="622" r="2.5" fill="#cd701c"/><circle cx="897" cy="654" r="2.0" fill="#efbf51"/><circle cx="923" cy="670" r="2.0" fill="#e58d30"/><circle cx="1047" cy="698" r="2.6" fill="#dab04e"/><circle cx="940" cy="621" r="2.3" fill="#ec7b29"/><circle cx="1069" cy="638" r="1.5" fill="#83622f"/><circle cx="952" cy="609" r="1.8" fill="#ffce58"/><circle cx="1091" cy="667" r="2.2" fill="#af6f28"/><circle cx="965" cy="687" r="2.0" fill="#deb24a"/><circle cx="942" cy="611" r="3.2" fill="#df6d19"/><circle cx="1091" cy="727" r="1.6" fill="#805525"/><circle cx="994" cy="719" r="2.2" fill="#a85912"/><circle cx="908" cy="687" r="2.3" fill="#bc580f"/><circle cx="929" cy="608" r="1.8" fill="#ed7a26"/><circle cx="884" cy="687" r="3.1" fill="#d5a941"/><circle cx="1006" cy="642" r="1.7" fill="#d57c20"/><circle cx="910" cy="675" r="3.3" fill="#e2b54b"/><circle cx="1054" cy="706" r="2.6" fill="#c29939"/><circle cx="886" cy="711" r="2.9" fill="#daaf4d"/><circle cx="995" cy="636" r="2.7" fill="#e0872a"/><circle cx="928" cy="643" r="3.0" fill="#db6f20"/><circle cx="904" cy="622" r="2.2" fill="#eb7b29"/><circle cx="881" cy="699" r="2.9" fill="#c7651e"/><circle cx="1091" cy="658" r="2.6" fill="#775828"/><circle cx="963" cy="678" r="2.5" fill="#e1b44a"/><circle cx="1084" cy="693" r="2.6" fill="#b58c42"/><circle cx="950" cy="729" r="2.3" fill="#a65913"/><circle cx="985" cy="681" r="3.1" fill="#d6842e"/><circle cx="894" cy="710" r="1.8" fill="#c16f1a"/><circle cx="986" cy="734" r="2.0" fill="#be9638"/><circle cx="975" cy="690" r="2.6" fill="#c26f24"/><circle cx="942" cy="639" r="1.7" fill="#e4b442"/><circle cx="883" cy="664" r="3.2" fill="#bd4f12"/><circle cx="1050" cy="637" r="2.9" fill="#edbe50"/><circle cx="1030" cy="662" r="2.4" fill="#735a32"/><circle cx="1066" cy="715" r="3.4" fill="#a98139"/><circle cx="970" cy="608" r="2.9" fill="#ffcd56"/><circle cx="1055" cy="670" r="2.6" fill="#be7c34"/><circle cx="1004" cy="655" r="1.6" fill="#f0c153"/><circle cx="965" cy="657" r="2.6" fill="#e8b84b"/><circle cx="897" cy="630" r="2.1" fill="#dd7e1b"/><circle cx="941" cy="608" r="2.4" fill="#f3c049"/><circle cx="952" cy="627" r="1.5" fill="#d1741f"/><circle cx="1078" cy="694" r="3.2" fill="#9d6f3a"/><circle cx="920" cy="629" r="2.8" fill="#eb8c29"/><circle cx="957" cy="626" r="3.0" fill="#d87d1e"/><circle cx="947" cy="717" r="2.8" fill="#b1530e"/><circle cx="966" cy="623" r="2.9" fill="#d97b26"/><circle cx="962" cy="668" r="2.9" fill="#c0691b"/><circle cx="970" cy="624" r="3.2" fill="#fcca56"/><circle cx="1040" cy="641" r="3.3" fill="#94733f"/><circle cx="985" cy="721" r="2.4" fill="#c79d3c"/><circle cx="903" cy="637" r="2.7" fill="#c95515"/><circle cx="924" cy="681" r="2.0" fill="#c76218"/><circle cx="925" cy="658" r="3.2" fill="#e1b245"/><circle cx="971" cy="726" r="2.9" fill="#d7ae4e"/><circle cx="936" cy="722" r="3.4" fill="#cca241"/><circle cx="1086" cy="656" r="3.3" fill="#c69a4a"/><circle cx="943" cy="622" r="3.4" fill="#df6f1d"/><circle cx="988" cy="683" r="1.8" fill="#cc782b"/><circle cx="1038" cy="657" r="1.6" fill="#dcae43"/><circle cx="985" cy="683" r="3.4" fill="#d4822d"/><circle cx="1058" cy="712" r="2.8" fill="#ad712e"/><circle cx="925" cy="672" r="3.1" fill="#d27a1e"/><circle cx="1048" cy="643" r="1.6" fill="#987744"/><circle cx="889" cy="691" r="2.2" fill="#db862d"/><circle cx="1021" cy="696" r="2.0" fill="#cba03b"/><circle cx="919" cy="711" r="1.7" fill="#d7ad4a"/><circle cx="907" cy="658" r="3.3" fill="#e0b144"/><circle cx="989" cy="636" r="2.6" fill="#ca6e1b"/><circle cx="989" cy="611" r="3.3" fill="#ffce57"/><circle cx="977" cy="597" r="3.1" fill="#804e21"/><circle cx="936" cy="717" r="3.1" fill="#b9561e"/><circle cx="899" cy="728" r="2.7" fill="#c0711e"/><circle cx="904" cy="660" r="2.3" fill="#e4b548"/><circle cx="956" cy="675" r="2.5" fill="#d6a83e"/><circle cx="992" cy="684" r="2.4" fill="#df9b38"/><circle cx="1048" cy="676" r="2.7" fill="#8b6c3b"/><circle cx="884" cy="726" r="2.1" fill="#d0a747"/><circle cx="874" cy="706" r="2.0" fill="#d2a743"/><circle cx="946" cy="614" r="3.1" fill="#e16f1c"/><circle cx="936" cy="700" r="1.7" fill="#cb9f3a"/><circle cx="948" cy="697" r="2.3" fill="#bc551b"/><circle cx="1008" cy="660" r="1.8" fill="#e4b548"/><circle cx="1017" cy="698" r="2.7" fill="#d18f2f"/><circle cx="931" cy="732" r="1.8" fill="#a1410b"/><circle cx="971" cy="687" r="3.1" fill="#7d4b1e"/><circle cx="919" cy="711" r="1.8" fill="#b85812"/><circle cx="1073" cy="723" r="2.9" fill="#a7712a"/><circle cx="918" cy="639" r="2.6" fill="#d96c1c"/><circle cx="969" cy="610" r="2.7" fill="#ffcf58"/><circle cx="1061" cy="672" r="3.3" fill="#785f37"/><circle cx="1036" cy="676" r="2.5" fill="#715830"/><circle cx="1038" cy="718" r="2.2" fill="#a86f26"/><circle cx="1089" cy="663" r="1.7" fill="#ba8e40"/><circle cx="925" cy="659" r="1.6" fill="#c7581a"/><circle cx="1005" cy="672" r="2.5" fill="#be681a"/><circle cx="891" cy="644" r="1.7" fill="#c45213"/><circle cx="992" cy="637" r="2.8" fill="#dc802d"/><circle cx="935" cy="704" r="2.8" fill="#cd7b24"/><circle cx="976" cy="634" r="1.6" fill="#d07320"/><circle cx="907" cy="723" r="3.2" fill="#bd6d1a"/><circle cx="918" cy="647" r="2.7" fill="#d67a1a"/><circle cx="1005" cy="732" r="2.2" fill="#b66c1e"/><circle cx="936" cy="617" r="3.3" fill="#e47320"/><circle cx="996" cy="704" r="3.4" fill="#c07e1f"/><circle cx="994" cy="738" r="2.0" fill="#735a32"/><circle cx="926" cy="677" r="2.2" fill="#bf5317"/><circle cx="924" cy="647" r="2.6" fill="#f6c656"/><circle cx="992" cy="661" r="2.6" fill="#ebbc4f"/><circle cx="1034" cy="644" r="1.8" fill="#eabb4d"/><circle cx="972" cy="627" r="1.8" fill="#e48a2b"/><circle cx="945" cy="717" r="2.4" fill="#c77622"/><circle cx="1015" cy="679" r="3.1" fill="#d2a43c"/><circle cx="996" cy="723" r="1.6" fill="#ba6e1f"/><circle cx="906" cy="654" r="2.6" fill="#dd7325"/><circle cx="883" cy="701" r="1.8" fill="#dcb04b"/><circle cx="1075" cy="727" r="1.8" fill="#7a6139"/><circle cx="940" cy="599" r="2.0" fill="#f7c34a"/><circle cx="879" cy="698" r="1.7" fill="#d9ad47"/><circle cx="1006" cy="608" r="2.3" fill="#f2a433"/><circle cx="978" cy="614" r="2.2" fill="#d0701a"/><circle cx="1000" cy="667" r="1.6" fill="#e3b449"/><circle cx="1029" cy="654" r="3.4" fill="#ddae42"/><circle cx="1012" cy="656" r="1.9" fill="#c16818"/><circle cx="999" cy="641" r="1.9" fill="#ca6f1c"/><circle cx="922" cy="697" r="3.4" fill="#daae49"/><circle cx="969" cy="691" r="3.1" fill="#d8ac45"/><circle cx="1069" cy="641" r="1.6" fill="#c39542"/><circle cx="1046" cy="688" r="3.3" fill="#b1712b"/><circle cx="991" cy="688" r="1.9" fill="#c77621"/><circle cx="1015" cy="674" r="2.0" fill="#d18c28"/><circle cx="1099" cy="705" r="3.1" fill="#775e36"/><circle cx="935" cy="684" r="3.0" fill="#e8bb53"/><circle cx="1069" cy="706" r="2.2" fill="#af7330"/><circle cx="1044" cy="699" r="1.8" fill="#775e36"/><circle cx="1039" cy="662" r="2.6" fill="#bc7c2a"/><circle cx="932" cy="728" r="1.5" fill="#ba5e1a"/><circle cx="964" cy="607" r="2.9" fill="#e99b2a"/><circle cx="927" cy="650" r="3.2" fill="#cc5b1c"/><circle cx="915" cy="696" r="2.7" fill="#b95117"/><circle cx="1002" cy="616" r="2.5" fill="#cc6d17"/><circle cx="881" cy="706" r="1.9" fill="#d1a642"/><circle cx="958" cy="723" r="2.2" fill="#b46620"/><circle cx="910" cy="637" r="1.5" fill="#f1c04f"/><circle cx="912" cy="660" r="3.3" fill="#dbad40"/><circle cx="1072" cy="704" r="2.6" fill="#b89047"/><circle cx="956" cy="604" r="1.7" fill="#de801e"/><circle cx="1081" cy="672" r="2.7" fill="#96662f"/><circle cx="946" cy="690" r="2.1" fill="#c9651c"/><circle cx="926" cy="669" r="1.6" fill="#e8b94e"/><circle cx="917" cy="637" r="3.2" fill="#d35f1f"/><circle cx="1058" cy="676" r="2.7" fill="#93622a"/><circle cx="956" cy="622" r="1.5" fill="#f1bf4b"/><circle cx="926" cy="641" r="1.8" fill="#f09231"/><circle cx="1009" cy="693" r="2.7" fill="#dcb049"/><circle cx="974" cy="622" r="3.1" fill="#f0a436"/><circle cx="995" cy="619" r="2.6" fill="#cd6e19"/><circle cx="1024" cy="620" r="2.6" fill="#d67c1d"/><circle cx="971" cy="608" r="2.6" fill="#e38625"/><circle cx="1004" cy="694" r="1.9" fill="#cfa33d"/><circle cx="966" cy="672" r="1.8" fill="#e09a35"/><circle cx="1025" cy="612" r="3.0" fill="#f0a435"/><circle cx="994" cy="616" r="2.0" fill="#efbc46"/><circle cx="977" cy="698" r="2.1" fill="#c48121"/><circle cx="1008" cy="672" r="1.6" fill="#e7b94f"/><circle cx="1100" cy="707" r="1.7" fill="#b28b44"/><circle cx="954" cy="703" r="2.6" fill="#b26017"/><circle cx="1052" cy="673" r="2.9" fill="#b27129"/><circle cx="1050" cy="624" r="2.6" fill="#af783b"/><circle cx="1055" cy="624" r="2.8" fill="#d4913a"/><circle cx="1037" cy="702" r="3.4" fill="#886b3c"/><circle cx="1027" cy="667" r="3.3" fill="#d27f28"/><circle cx="993" cy="638" r="1.7" fill="#df9529"/><circle cx="980" cy="633" r="2.1" fill="#d2781b"/><circle cx="952" cy="613" r="3.0" fill="#fbc852"/><circle cx="983" cy="713" r="1.5" fill="#caa03d"/><circle cx="943" cy="610" r="2.6" fill="#cb530f"/><circle cx="1020" cy="682" r="3.1" fill="#d0a33c"/><circle cx="964" cy="666" r="2.2" fill="#d7902a"/><circle cx="989" cy="626" r="2.4" fill="#ffce5a"/><circle cx="913" cy="713" r="1.6" fill="#dab04d"/><circle cx="1038" cy="713" r="1.7" fill="#7e6134"/><circle cx="1064" cy="663" r="3.2" fill="#7d5e2d"/><circle cx="1068" cy="698" r="1.9" fill="#8f612c"/><circle cx="980" cy="663" r="1.7" fill="#f0c255"/><circle cx="1041" cy="669" r="2.7" fill="#8d6e3c"/><circle cx="1019" cy="731" r="2.7" fill="#af631e"/><circle cx="912" cy="712" r="2.2" fill="#c69b39"/><circle cx="972" cy="630" r="2.9" fill="#e4992c"/><circle cx="987" cy="740" r="3.2" fill="#bb7e26"/><circle cx="974" cy="670" r="3.0" fill="#deb045"/><circle cx="1053" cy="665" r="1.6" fill="#d5a840"/><circle cx="916" cy="726" r="1.9" fill="#784619"/><circle cx="1023" cy="710" r="3.3" fill="#d19134"/><circle cx="1034" cy="717" r="1.7" fill="#bf7426"/><circle cx="1047" cy="720" r="1.7" fill="#bc9436"/><circle cx="891" cy="713" r="2.9" fill="#c56620"/><circle cx="982" cy="623" r="2.8" fill="#7a481b"/><circle cx="1016" cy="723" r="1.5" fill="#674e26"/><circle cx="926" cy="631" r="3.1" fill="#f0bf4d"/><circle cx="1084" cy="677" r="2.7" fill="#755c34"/><circle cx="909" cy="655" r="2.5" fill="#79471a"/><circle cx="916" cy="691" r="1.7" fill="#d5a942"/><circle cx="1043" cy="649" r="2.3" fill="#c58034"/><circle cx="973" cy="599" r="2.8" fill="#f29330"/><circle cx="1020" cy="618" r="2.6" fill="#f9c753"/><circle cx="993" cy="667" r="3.1" fill="#d7912b"/><circle cx="956" cy="716" r="2.0" fill="#c79d3b"/><circle cx="1069" cy="730" r="3.3" fill="#9f7933"/><circle cx="1007" cy="686" r="1.5" fill="#c77621"/><circle cx="1014" cy="631" r="2.1" fill="#edbb49"/><circle cx="1057" cy="696" r="2.6" fill="#c89e3d"/><circle cx="989" cy="723" r="2.1" fill="#bf7324"/><circle cx="999" cy="732" r="2.4" fill="#ad6315"/><circle cx="976" cy="735" r="2.4" fill="#814f22"/><circle cx="949" cy="629" r="1.8" fill="#f2c14e"/><circle cx="1035" cy="682" r="2.7" fill="#b5742b"/><circle cx="973" cy="719" r="2.6" fill="#79471a"/><circle cx="1029" cy="618" r="2.6" fill="#ebb946"/><circle cx="876" cy="676" r="3.3" fill="#d36d22"/><circle cx="1004" cy="618" r="2.1" fill="#fac752"/><circle cx="1038" cy="729" r="3.1" fill="#bc9437"/><circle cx="1077" cy="674" r="3.3" fill="#ae6f28"/><circle cx="1036" cy="617" r="3.4" fill="#b57d3e"/><circle cx="995" cy="630" r="2.1" fill="#f9c855"/><circle cx="929" cy="655" r="2.9" fill="#e1b244"/><circle cx="934" cy="646" r="2.2" fill="#d77b1b"/><circle cx="927" cy="710" r="2.1" fill="#d5aa47"/><circle cx="978" cy="693" r="2.1" fill="#ddb14a"/><circle cx="1069" cy="662" r="1.7" fill="#bf7e35"/><circle cx="948" cy="596" r="3.4" fill="#da5f1a"/><circle cx="900" cy="723" r="2.0" fill="#a7450e"/><circle cx="1011" cy="705" r="2.0" fill="#c4732a"/><circle cx="999" cy="708" r="2.6" fill="#d3a845"/><circle cx="996" cy="726" r="1.6" fill="#d4aa4b"/><circle cx="1028" cy="720" r="3.0" fill="#624921"/><circle cx="989" cy="606" r="2.2" fill="#ffcd56"/><circle cx="891" cy="662" r="2.0" fill="#dc7327"/><circle cx="1071" cy="723" r="1.6" fill="#8c602e"/><circle cx="952" cy="712" r="2.2" fill="#bc7c1e"/><circle cx="1057" cy="676" r="2.9" fill="#b5782a"/><circle cx="907" cy="702" r="2.5" fill="#bc5b14"/><circle cx="1004" cy="622" r="2.1" fill="#cf711c"/><circle cx="893" cy="724" r="2.2" fill="#b85b17"/><circle cx="1039" cy="675" r="3.1" fill="#9e6c33"/><circle cx="877" cy="665" r="2.9" fill="#e7b94d"/><circle cx="950" cy="650" r="3.1" fill="#ca591a"/><circle cx="997" cy="717" r="2.6" fill="#b76820"/><circle cx="992" cy="603" r="2.3" fill="#6f562e"/><circle cx="1022" cy="613" r="2.0" fill="#e48929"/><circle cx="1038" cy="641" r="3.0" fill="#c78133"/><circle cx="997" cy="644" r="2.9" fill="#775e36"/><circle cx="914" cy="673" r="1.7" fill="#d98125"/><circle cx="1019" cy="641" r="1.9" fill="#e38c30"/><circle cx="965" cy="636" r="2.4" fill="#f7c655"/><circle cx="906" cy="693" r="2.1" fill="#c05d15"/><circle cx="1069" cy="662" r="2.8" fill="#7b5c2b"/><circle cx="1063" cy="695" r="2.3" fill="#c3883d"/><circle cx="883" cy="647" r="3.3" fill="#f4c454"/><circle cx="879" cy="652" r="1.6" fill="#df8425"/><circle cx="919" cy="648" r="3.3" fill="#d76c1d"/><circle cx="1014" cy="686" r="2.3" fill="#db9735"/><circle cx="997" cy="633" r="1.7" fill="#d87c28"/><circle cx="1079" cy="636" r="2.6" fill="#c1923f"/><circle cx="912" cy="690" r="2.6" fill="#d0a33c"/><circle cx="1050" cy="691" r="2.2" fill="#8e5e28"/><circle cx="918" cy="688" r="1.6" fill="#e5b851"/><circle cx="996" cy="646" r="2.5" fill="#ecbc4d"/><circle cx="1033" cy="675" r="2.2" fill="#be6d18"/><circle cx="931" cy="619" r="3.3" fill="#f4942f"/><circle cx="873" cy="693" r="2.5" fill="#d1a53f"/><circle cx="957" cy="719" r="1.9" fill="#ca8b2e"/><circle cx="1025" cy="671" r="1.5" fill="#c26f19"/><circle cx="1058" cy="681" r="2.4" fill="#70572f"/><circle cx="903" cy="697" r="2.7" fill="#b44d13"/><circle cx="977" cy="597" r="2.2" fill="#eb8930"/><circle cx="999" cy="627" r="2.4" fill="#654c24"/><circle cx="1065" cy="695" r="3.1" fill="#b77c31"/><circle cx="933" cy="657" r="3.1" fill="#c85e11"/><circle cx="1011" cy="672" r="1.7" fill="#745b33"/><circle cx="1048" cy="695" r="2.3" fill="#8a6c3d"/><circle cx="987" cy="674" r="2.4" fill="#ebbd53"/><circle cx="1038" cy="711" r="2.3" fill="#af722e"/><circle cx="981" cy="648" r="2.7" fill="#d47a28"/><circle cx="906" cy="706" r="3.0" fill="#c4711b"/><circle cx="912" cy="685" r="3.4" fill="#ddb048"/><circle cx="936" cy="724" r="2.2" fill="#c79d3d"/><circle cx="1079" cy="657" r="2.4" fill="#ce9041"/><circle cx="932" cy="675" r="3.3" fill="#d6a93f"/><circle cx="883" cy="645" r="3.3" fill="#e5b445"/><circle cx="988" cy="617" r="2.1" fill="#e98d2d"/><circle cx="918" cy="683" r="1.7" fill="#c4591e"/><circle cx="882" cy="675" r="2.1" fill="#b84d10"/><circle cx="1087" cy="684" r="1.8" fill="#c1974c"/><circle cx="1105" cy="708" r="2.5" fill="#ac7232"/><circle cx="992" cy="601" r="3.0" fill="#f5c149"/><circle cx="993" cy="693" r="1.8" fill="#c48120"/><circle cx="938" cy="722" r="3.4" fill="#d2a847"/><circle cx="891" cy="645" r="1.7" fill="#e58828"/><circle cx="1045" cy="666" r="3.3" fill="#a47238"/><circle cx="1001" cy="672" r="1.8" fill="#ddaf44"/><circle cx="1040" cy="642" r="1.5" fill="#6d542c"/><circle cx="1003" cy="718" r="1.7" fill="#b2631c"/><circle cx="1018" cy="627" r="2.8" fill="#fecc5a"/><circle cx="916" cy="716" r="3.1" fill="#d4aa48"/><circle cx="1000" cy="710" r="3.4" fill="#d8ad4a"/><circle cx="1035" cy="666" r="1.8" fill="#937341"/><circle cx="1080" cy="704" r="2.0" fill="#b17533"/><circle cx="990" cy="667" r="2.8" fill="#e9ba4f"/><circle cx="1065" cy="727" r="2.1" fill="#9f6922"/><circle cx="878" cy="720" r="2.0" fill="#a9470f"/><circle cx="976" cy="730" r="3.0" fill="#bf7426"/><circle cx="902" cy="672" r="3.3" fill="#c4581b"/><circle cx="995" cy="738" r="2.4" fill="#c49c3e"/><circle cx="1034" cy="697" r="2.5" fill="#bb6a21"/><circle cx="977" cy="602" r="2.0" fill="#f1a230"/><circle cx="1060" cy="714" r="3.1" fill="#b28a41"/><circle cx="953" cy="660" r="3.3" fill="#bc6414"/><circle cx="1066" cy="629" r="3.3" fill="#b68144"/><circle cx="1038" cy="639" r="2.5" fill="#deaf41"/><circle cx="1057" cy="680" r="2.8" fill="#cda13d"/><circle cx="1076" cy="715" r="2.3" fill="#a47c35"/><circle cx="920" cy="664" r="1.5" fill="#845225"/><circle cx="1027" cy="631" r="2.9" fill="#fac958"/><circle cx="1059" cy="639" r="2.5" fill="#d1903c"/><g stroke="#3a2a18" fill="none" stroke-linecap="round" opacity=".6"><path d="M990 740 Q986 715 970 700 Q958 690 948 678" stroke-width="2.2"/><path d="M993 740 Q998 718 1010 702 Q1020 692 1030 682" stroke-width="2"/><path d="M970 700 Q945 693 925 697" stroke-width="1.3"/><path d="M1010 702 Q1040 707 1058 716" stroke-width="1.3"/><path d="M948 678 Q930 670 915 672" stroke-width="1.1"/><path d="M1030 682 Q1050 670 1070 668" stroke-width="1.1"/><path d="M985 720 Q960 725 940 720" stroke-width="1"/><path d="M1000 715 Q1030 725 1080 718" stroke-width="1"/></g></g>
<path d="M981 743 Q986 736 987 726 L994 726 Q995 736 1003 743Z" fill="#241c12"/>
</svg></body></html>
